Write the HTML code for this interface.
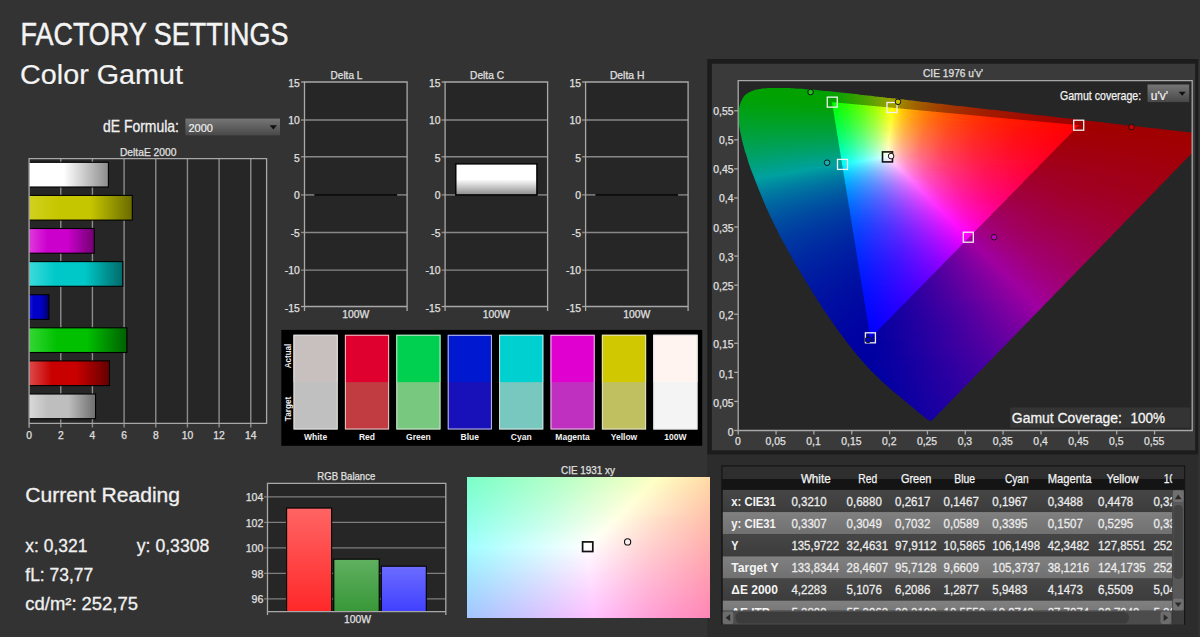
<!DOCTYPE html>
<html><head><meta charset="utf-8"><title>Factory Settings - Color Gamut</title>
<style>
html,body{margin:0;padding:0;background:#333333}
body{width:1200px;height:637px;position:relative;overflow:hidden;font-family:'Liberation Sans',sans-serif}
svg{position:absolute;left:0;top:0;font-family:'Liberation Sans',sans-serif}
#g i{position:absolute;display:block}
</style></head><body>
<svg width="1200" height="637" viewBox="0 0 1200 637">
<defs><linearGradient id="dd" x1="0" y1="0" x2="0" y2="1"><stop offset="0" stop-color="#767676"/><stop offset="1" stop-color="#484848"/></linearGradient><clipPath id="bclip"><rect x="29.1" y="158.6" width="300" height="300"/></clipPath><linearGradient id="bw"><stop offset="0" stop-color="#ffffff"/><stop offset="0.4" stop-color="#ffffff"/><stop offset="0.45" stop-color="#ffffff"/><stop offset="1" stop-color="#8c8c8c"/></linearGradient><linearGradient id="by"><stop offset="0" stop-color="#d2d220"/><stop offset="0.3" stop-color="#c6c600"/><stop offset="0.6" stop-color="#c6c600"/><stop offset="1" stop-color="#6a6a00"/></linearGradient><linearGradient id="bm"><stop offset="0" stop-color="#e040e0"/><stop offset="0.3" stop-color="#cc00cc"/><stop offset="0.6" stop-color="#cc00cc"/><stop offset="1" stop-color="#700070"/></linearGradient><linearGradient id="bc"><stop offset="0" stop-color="#40dcdc"/><stop offset="0.3" stop-color="#00c8c8"/><stop offset="0.6" stop-color="#00c8c8"/><stop offset="1" stop-color="#006a6a"/></linearGradient><linearGradient id="bb"><stop offset="0" stop-color="#2828e0"/><stop offset="0.3" stop-color="#0000c8"/><stop offset="0.6" stop-color="#0000c8"/><stop offset="1" stop-color="#000064"/></linearGradient><linearGradient id="bg"><stop offset="0" stop-color="#38d838"/><stop offset="0.3" stop-color="#00c000"/><stop offset="0.6" stop-color="#00c000"/><stop offset="1" stop-color="#006000"/></linearGradient><linearGradient id="br"><stop offset="0" stop-color="#e05050"/><stop offset="0.3" stop-color="#c80000"/><stop offset="0.6" stop-color="#c80000"/><stop offset="1" stop-color="#640000"/></linearGradient><linearGradient id="bs"><stop offset="0" stop-color="#dcdcdc"/><stop offset="0.3" stop-color="#bebebe"/><stop offset="0.6" stop-color="#bebebe"/><stop offset="1" stop-color="#6e6e6e"/></linearGradient><linearGradient id="dc" x1="0" y1="0" x2="0" y2="1"><stop offset="0" stop-color="#fff"/><stop offset="0.5" stop-color="#fff"/><stop offset="1" stop-color="#8c8c8c"/></linearGradient><linearGradient id="rbr" x1="0" y1="0" x2="0" y2="1"><stop offset="0" stop-color="#ff6464"/><stop offset="1" stop-color="#ff2828"/></linearGradient><linearGradient id="rbg" x1="0" y1="0" x2="0" y2="1"><stop offset="0" stop-color="#60b060"/><stop offset="1" stop-color="#389838"/></linearGradient><linearGradient id="rbb" x1="0" y1="0" x2="0" y2="1"><stop offset="0" stop-color="#6c6cff"/><stop offset="1" stop-color="#4040ff"/></linearGradient><linearGradient id="rd" x1="0" y1="0" x2="0" y2="1"><stop offset="0" stop-color="#464646"/><stop offset="1" stop-color="#3c3c3c"/></linearGradient><linearGradient id="rl" x1="0" y1="0" x2="0" y2="1"><stop offset="0" stop-color="#808080"/><stop offset="1" stop-color="#707070"/></linearGradient><clipPath id="tc"><rect x="722.5" y="466" width="449.8" height="144.8"/></clipPath></defs>
<text x="20.5" y="44.6" font-size="31" fill="#f4f4f4" stroke="#f4f4f4" stroke-width="0.5" textLength="268" lengthAdjust="spacingAndGlyphs">FACTORY SETTINGS</text>
<text x="20" y="84.2" font-size="27" fill="#f4f4f4" stroke="#f4f4f4" stroke-width="0.2" textLength="163" lengthAdjust="spacingAndGlyphs">Color Gamut</text>
<text x="103" y="132.4" font-size="15.7" fill="#f0f0f0" stroke="#f0f0f0" stroke-width="0.3" textLength="76" lengthAdjust="spacingAndGlyphs">dE Formula:</text>
<rect x="185.4" y="118.6" width="94.6" height="16.8" fill="url(#dd)"/>
<text x="188.5" y="132.2" font-size="11.5" fill="#f0f0f0" stroke="#f0f0f0" stroke-width="0.2" textLength="24.5" lengthAdjust="spacingAndGlyphs">2000</text>
<path d="M269.6 125.2h7.4l-3.7 4.2z" fill="#111"/>
<text x="148.2" y="155.6" font-size="10.1" fill="#e0e0e0" stroke="#e0e0e0" stroke-width="0.25" text-anchor="middle" textLength="56.5" lengthAdjust="spacingAndGlyphs">DeltaE 2000</text>
<rect x="29.1" y="158.6" width="237.5" height="264.8" fill="#262626"/>
<line x1="60.77" y1="158.6" x2="60.77" y2="427.4" stroke="#8c8c8c" stroke-width="1.4"/>
<line x1="92.43" y1="158.6" x2="92.43" y2="427.4" stroke="#8c8c8c" stroke-width="1.4"/>
<line x1="124.1" y1="158.6" x2="124.1" y2="427.4" stroke="#8c8c8c" stroke-width="1.4"/>
<line x1="155.77" y1="158.6" x2="155.77" y2="427.4" stroke="#8c8c8c" stroke-width="1.4"/>
<line x1="187.43" y1="158.6" x2="187.43" y2="427.4" stroke="#8c8c8c" stroke-width="1.4"/>
<line x1="219.1" y1="158.6" x2="219.1" y2="427.4" stroke="#8c8c8c" stroke-width="1.4"/>
<line x1="250.77" y1="158.6" x2="250.77" y2="427.4" stroke="#8c8c8c" stroke-width="1.4"/>
<text x="29.1" y="439.3" font-size="10.3" fill="#e0e0e0" stroke="#e0e0e0" stroke-width="0.25" text-anchor="middle">0</text>
<text x="60.77" y="439.3" font-size="10.3" fill="#e0e0e0" stroke="#e0e0e0" stroke-width="0.25" text-anchor="middle">2</text>
<text x="92.43" y="439.3" font-size="10.3" fill="#e0e0e0" stroke="#e0e0e0" stroke-width="0.25" text-anchor="middle">4</text>
<text x="124.1" y="439.3" font-size="10.3" fill="#e0e0e0" stroke="#e0e0e0" stroke-width="0.25" text-anchor="middle">6</text>
<text x="155.77" y="439.3" font-size="10.3" fill="#e0e0e0" stroke="#e0e0e0" stroke-width="0.25" text-anchor="middle">8</text>
<text x="187.43" y="439.3" font-size="10.3" fill="#e0e0e0" stroke="#e0e0e0" stroke-width="0.25" text-anchor="middle">10</text>
<text x="219.1" y="439.3" font-size="10.3" fill="#e0e0e0" stroke="#e0e0e0" stroke-width="0.25" text-anchor="middle">12</text>
<text x="250.77" y="439.3" font-size="10.3" fill="#e0e0e0" stroke="#e0e0e0" stroke-width="0.25" text-anchor="middle">14</text>
<rect x="27.1" y="162.3" width="81.3" height="24.7" fill="url(#bw)" stroke="#000" stroke-width="1.1" clip-path="url(#bclip)"/>
<rect x="27.1" y="195.4" width="105.22" height="24.7" fill="url(#by)" stroke="#000" stroke-width="1.1" clip-path="url(#bclip)"/>
<rect x="27.1" y="228.5" width="67.17" height="24.7" fill="url(#bm)" stroke="#000" stroke-width="1.1" clip-path="url(#bclip)"/>
<rect x="27.1" y="261.6" width="95.68" height="24.7" fill="url(#bc)" stroke="#000" stroke-width="1.1" clip-path="url(#bclip)"/>
<rect x="27.1" y="294.7" width="21.89" height="24.7" fill="url(#bb)" stroke="#000" stroke-width="1.1" clip-path="url(#bclip)"/>
<rect x="27.1" y="327.8" width="99.8" height="24.7" fill="url(#bg)" stroke="#000" stroke-width="1.1" clip-path="url(#bclip)"/>
<rect x="27.1" y="360.9" width="82.37" height="24.7" fill="url(#br)" stroke="#000" stroke-width="1.1" clip-path="url(#bclip)"/>
<rect x="27.1" y="394" width="68.45" height="24.7" fill="url(#bs)" stroke="#000" stroke-width="1.1" clip-path="url(#bclip)"/>
<path d="M29.1 427.8V158.6H266.6V423.4H29.1" fill="none" stroke="#a8a8a8" stroke-width="1.3"/>
<text x="330.6" y="78.7" font-size="10.3" fill="#e0e0e0" stroke="#e0e0e0" stroke-width="0.25" textLength="31.7" lengthAdjust="spacingAndGlyphs">Delta L</text>
<rect x="304.5" y="82" width="102.6" height="224.5" fill="#262626"/>
<line x1="301" y1="82" x2="304.5" y2="82" stroke="#a8a8a8" stroke-width="1.3"/>
<text x="299.9" y="86.5" font-size="10.4" fill="#e0e0e0" stroke="#e0e0e0" stroke-width="0.25" text-anchor="end">15</text>
<line x1="301" y1="120" x2="407.1" y2="120" stroke="#888888" stroke-width="1.4"/>
<text x="299.9" y="124.07" font-size="10.4" fill="#e0e0e0" stroke="#e0e0e0" stroke-width="0.25" text-anchor="end">10</text>
<line x1="301" y1="156.7" x2="407.1" y2="156.7" stroke="#888888" stroke-width="1.4"/>
<text x="299.9" y="161.64" font-size="10.4" fill="#e0e0e0" stroke="#e0e0e0" stroke-width="0.25" text-anchor="end">5</text>
<line x1="301" y1="194.9" x2="314.5" y2="194.9" stroke="#888888" stroke-width="1.4"/>
<line x1="397.1" y1="194.9" x2="407.1" y2="194.9" stroke="#888888" stroke-width="1.4"/>
<text x="299.9" y="199.21" font-size="10.4" fill="#e0e0e0" stroke="#e0e0e0" stroke-width="0.25" text-anchor="end">0</text>
<line x1="301" y1="232.5" x2="407.1" y2="232.5" stroke="#888888" stroke-width="1.4"/>
<text x="299.9" y="236.78" font-size="10.4" fill="#e0e0e0" stroke="#e0e0e0" stroke-width="0.25" text-anchor="end">-5</text>
<line x1="301" y1="270.1" x2="407.1" y2="270.1" stroke="#888888" stroke-width="1.4"/>
<text x="299.9" y="274.35" font-size="10.4" fill="#e0e0e0" stroke="#e0e0e0" stroke-width="0.25" text-anchor="end">-10</text>
<line x1="301" y1="306.5" x2="304.5" y2="306.5" stroke="#a8a8a8" stroke-width="1.3"/>
<text x="299.9" y="311.92" font-size="10.4" fill="#e0e0e0" stroke="#e0e0e0" stroke-width="0.25" text-anchor="end">-15</text>
<line x1="314.5" y1="194.9" x2="397.1" y2="194.9" stroke="#0c0c0c" stroke-width="1.6"/>
<path d="M304.5 311.1V82H407.1V311.1M304.5 306.5H407.1" fill="none" stroke="#a8a8a8" stroke-width="1.3"/>
<text x="355.8" y="317.9" font-size="10.1" fill="#e0e0e0" stroke="#e0e0e0" stroke-width="0.25" text-anchor="middle" textLength="27" lengthAdjust="spacingAndGlyphs">100W</text>
<text x="470.1" y="78.7" font-size="10.3" fill="#e0e0e0" stroke="#e0e0e0" stroke-width="0.25" textLength="33.9" lengthAdjust="spacingAndGlyphs">Delta C</text>
<rect x="445.1" y="82" width="102.5" height="224.5" fill="#262626"/>
<line x1="441.6" y1="82" x2="445.1" y2="82" stroke="#a8a8a8" stroke-width="1.3"/>
<text x="440.5" y="86.5" font-size="10.4" fill="#e0e0e0" stroke="#e0e0e0" stroke-width="0.25" text-anchor="end">15</text>
<line x1="441.6" y1="120" x2="547.6" y2="120" stroke="#888888" stroke-width="1.4"/>
<text x="440.5" y="124.07" font-size="10.4" fill="#e0e0e0" stroke="#e0e0e0" stroke-width="0.25" text-anchor="end">10</text>
<line x1="441.6" y1="156.7" x2="547.6" y2="156.7" stroke="#888888" stroke-width="1.4"/>
<text x="440.5" y="161.64" font-size="10.4" fill="#e0e0e0" stroke="#e0e0e0" stroke-width="0.25" text-anchor="end">5</text>
<line x1="441.6" y1="194.9" x2="455.1" y2="194.9" stroke="#888888" stroke-width="1.4"/>
<line x1="537.6" y1="194.9" x2="547.6" y2="194.9" stroke="#888888" stroke-width="1.4"/>
<text x="440.5" y="199.21" font-size="10.4" fill="#e0e0e0" stroke="#e0e0e0" stroke-width="0.25" text-anchor="end">0</text>
<line x1="441.6" y1="232.5" x2="547.6" y2="232.5" stroke="#888888" stroke-width="1.4"/>
<text x="440.5" y="236.78" font-size="10.4" fill="#e0e0e0" stroke="#e0e0e0" stroke-width="0.25" text-anchor="end">-5</text>
<line x1="441.6" y1="270.1" x2="547.6" y2="270.1" stroke="#888888" stroke-width="1.4"/>
<text x="440.5" y="274.35" font-size="10.4" fill="#e0e0e0" stroke="#e0e0e0" stroke-width="0.25" text-anchor="end">-10</text>
<line x1="441.6" y1="306.5" x2="445.1" y2="306.5" stroke="#a8a8a8" stroke-width="1.3"/>
<text x="440.5" y="311.92" font-size="10.4" fill="#e0e0e0" stroke="#e0e0e0" stroke-width="0.25" text-anchor="end">-15</text>
<rect x="455.8" y="163.9" width="81.1" height="31" fill="url(#dc)" stroke="#000" stroke-width="1.4"/>
<path d="M445.1 311.1V82H547.6V311.1M445.1 306.5H547.6" fill="none" stroke="#a8a8a8" stroke-width="1.3"/>
<text x="496.35" y="317.9" font-size="10.1" fill="#e0e0e0" stroke="#e0e0e0" stroke-width="0.25" text-anchor="middle" textLength="27" lengthAdjust="spacingAndGlyphs">100W</text>
<text x="609.9" y="78.7" font-size="10.3" fill="#e0e0e0" stroke="#e0e0e0" stroke-width="0.25" textLength="34.5" lengthAdjust="spacingAndGlyphs">Delta H</text>
<rect x="585.6" y="82" width="102.5" height="224.5" fill="#262626"/>
<line x1="582.1" y1="82" x2="585.6" y2="82" stroke="#a8a8a8" stroke-width="1.3"/>
<text x="581" y="86.5" font-size="10.4" fill="#e0e0e0" stroke="#e0e0e0" stroke-width="0.25" text-anchor="end">15</text>
<line x1="582.1" y1="120" x2="688.1" y2="120" stroke="#888888" stroke-width="1.4"/>
<text x="581" y="124.07" font-size="10.4" fill="#e0e0e0" stroke="#e0e0e0" stroke-width="0.25" text-anchor="end">10</text>
<line x1="582.1" y1="156.7" x2="688.1" y2="156.7" stroke="#888888" stroke-width="1.4"/>
<text x="581" y="161.64" font-size="10.4" fill="#e0e0e0" stroke="#e0e0e0" stroke-width="0.25" text-anchor="end">5</text>
<line x1="582.1" y1="194.9" x2="595.6" y2="194.9" stroke="#888888" stroke-width="1.4"/>
<line x1="678.1" y1="194.9" x2="688.1" y2="194.9" stroke="#888888" stroke-width="1.4"/>
<text x="581" y="199.21" font-size="10.4" fill="#e0e0e0" stroke="#e0e0e0" stroke-width="0.25" text-anchor="end">0</text>
<line x1="582.1" y1="232.5" x2="688.1" y2="232.5" stroke="#888888" stroke-width="1.4"/>
<text x="581" y="236.78" font-size="10.4" fill="#e0e0e0" stroke="#e0e0e0" stroke-width="0.25" text-anchor="end">-5</text>
<line x1="582.1" y1="270.1" x2="688.1" y2="270.1" stroke="#888888" stroke-width="1.4"/>
<text x="581" y="274.35" font-size="10.4" fill="#e0e0e0" stroke="#e0e0e0" stroke-width="0.25" text-anchor="end">-10</text>
<line x1="582.1" y1="306.5" x2="585.6" y2="306.5" stroke="#a8a8a8" stroke-width="1.3"/>
<text x="581" y="311.92" font-size="10.4" fill="#e0e0e0" stroke="#e0e0e0" stroke-width="0.25" text-anchor="end">-15</text>
<line x1="595.6" y1="194.9" x2="678.1" y2="194.9" stroke="#0c0c0c" stroke-width="1.6"/>
<path d="M585.6 311.1V82H688.1V311.1M585.6 306.5H688.1" fill="none" stroke="#a8a8a8" stroke-width="1.3"/>
<text x="636.85" y="317.9" font-size="10.1" fill="#e0e0e0" stroke="#e0e0e0" stroke-width="0.25" text-anchor="middle" textLength="27" lengthAdjust="spacingAndGlyphs">100W</text>
<rect x="281.3" y="329.9" width="420.9" height="115.9" fill="#000"/>
<rect x="293.5" y="334.8" width="44.2" height="94.7" fill="#c0c0c0"/>
<rect x="293.5" y="334.8" width="44.2" height="47.3" fill="#c8c0be"/>
<rect x="294" y="335.3" width="43.2" height="93.7" fill="none" stroke="#e6e6e6" stroke-width="1" stroke-opacity=".85"/>
<text x="315.6" y="440" font-size="8.5" fill="#f2f2f2" text-anchor="middle" font-weight="bold">White</text>
<rect x="344.9" y="334.8" width="44.2" height="94.7" fill="#c03c40"/>
<rect x="344.9" y="334.8" width="44.2" height="47.3" fill="#e00030"/>
<rect x="345.4" y="335.3" width="43.2" height="93.7" fill="none" stroke="#e6e6e6" stroke-width="1" stroke-opacity=".85"/>
<text x="367" y="440" font-size="8.5" fill="#f2f2f2" text-anchor="middle" font-weight="bold">Red</text>
<rect x="396.3" y="334.8" width="44.2" height="94.7" fill="#78c880"/>
<rect x="396.3" y="334.8" width="44.2" height="47.3" fill="#00d050"/>
<rect x="396.8" y="335.3" width="43.2" height="93.7" fill="none" stroke="#e6e6e6" stroke-width="1" stroke-opacity=".85"/>
<text x="418.4" y="440" font-size="8.5" fill="#f2f2f2" text-anchor="middle" font-weight="bold">Green</text>
<rect x="447.7" y="334.8" width="44.2" height="94.7" fill="#1810b8"/>
<rect x="447.7" y="334.8" width="44.2" height="47.3" fill="#0018d0"/>
<rect x="448.2" y="335.3" width="43.2" height="93.7" fill="none" stroke="#e6e6e6" stroke-width="1" stroke-opacity=".85"/>
<text x="469.8" y="440" font-size="8.5" fill="#f2f2f2" text-anchor="middle" font-weight="bold">Blue</text>
<rect x="499.1" y="334.8" width="44.2" height="94.7" fill="#78c8c0"/>
<rect x="499.1" y="334.8" width="44.2" height="47.3" fill="#00d0d0"/>
<rect x="499.6" y="335.3" width="43.2" height="93.7" fill="none" stroke="#e6e6e6" stroke-width="1" stroke-opacity=".85"/>
<text x="521.2" y="440" font-size="8.5" fill="#f2f2f2" text-anchor="middle" font-weight="bold">Cyan</text>
<rect x="550.5" y="334.8" width="44.2" height="94.7" fill="#c030c0"/>
<rect x="550.5" y="334.8" width="44.2" height="47.3" fill="#e000d0"/>
<rect x="551" y="335.3" width="43.2" height="93.7" fill="none" stroke="#e6e6e6" stroke-width="1" stroke-opacity=".85"/>
<text x="572.6" y="440" font-size="8.5" fill="#f2f2f2" text-anchor="middle" font-weight="bold">Magenta</text>
<rect x="601.9" y="334.8" width="44.2" height="94.7" fill="#c0c060"/>
<rect x="601.9" y="334.8" width="44.2" height="47.3" fill="#d0c800"/>
<rect x="602.4" y="335.3" width="43.2" height="93.7" fill="none" stroke="#e6e6e6" stroke-width="1" stroke-opacity=".85"/>
<text x="624" y="440" font-size="8.5" fill="#f2f2f2" text-anchor="middle" font-weight="bold">Yellow</text>
<rect x="653.3" y="334.8" width="44.2" height="94.7" fill="#f4f4f4"/>
<rect x="653.3" y="334.8" width="44.2" height="47.3" fill="#fff4f0"/>
<rect x="653.8" y="335.3" width="43.2" height="93.7" fill="none" stroke="#e6e6e6" stroke-width="1" stroke-opacity=".85"/>
<text x="675.4" y="440" font-size="8.5" fill="#f2f2f2" text-anchor="middle" font-weight="bold">100W</text>
<text x="0" y="0" font-size="8.8" fill="#f2f2f2" font-weight="bold" textLength="24.5" lengthAdjust="spacingAndGlyphs" transform="translate(290.9 368.2) rotate(-90)">Actual</text>
<text x="0" y="0" font-size="8.8" fill="#f2f2f2" font-weight="bold" textLength="24.5" lengthAdjust="spacingAndGlyphs" transform="translate(290.9 421.2) rotate(-90)">Target</text>
<text x="25.3" y="501.7" font-size="19.7" fill="#f0f0f0" stroke="#f0f0f0" stroke-width="0.3" textLength="154.8" lengthAdjust="spacingAndGlyphs">Current Reading</text>
<text x="25.3" y="551.6" font-size="17.6" fill="#f0f0f0" stroke="#f0f0f0" stroke-width="0.3" textLength="62.1" lengthAdjust="spacingAndGlyphs">x: 0,321</text>
<text x="136.8" y="551.6" font-size="17.6" fill="#f0f0f0" stroke="#f0f0f0" stroke-width="0.3" textLength="72.5" lengthAdjust="spacingAndGlyphs">y: 0,3308</text>
<text x="25.3" y="581.1" font-size="17.6" fill="#f0f0f0" stroke="#f0f0f0" stroke-width="0.3" textLength="67.8" lengthAdjust="spacingAndGlyphs">fL: 73,77</text>
<text x="25.3" y="610.2" font-size="17.6" fill="#f0f0f0" stroke="#f0f0f0" stroke-width="0.3" textLength="112.7" lengthAdjust="spacingAndGlyphs">cd/m²: 252,75</text>
<text x="346.3" y="479.6" font-size="10.1" fill="#e0e0e0" stroke="#e0e0e0" stroke-width="0.25" text-anchor="middle" textLength="58" lengthAdjust="spacingAndGlyphs">RGB Balance</text>
<rect x="267.5" y="483.4" width="178.3" height="128.2" fill="#262626"/>
<line x1="264" y1="598.85" x2="445.8" y2="598.85" stroke="#7e7e7e" stroke-width="1.3"/>
<text x="263.4" y="603.15" font-size="10.6" fill="#e0e0e0" stroke="#e0e0e0" stroke-width="0.25" text-anchor="end">96</text>
<line x1="264" y1="573.35" x2="445.8" y2="573.35" stroke="#7e7e7e" stroke-width="1.3"/>
<text x="263.4" y="577.65" font-size="10.6" fill="#e0e0e0" stroke="#e0e0e0" stroke-width="0.25" text-anchor="end">98</text>
<line x1="264" y1="547.85" x2="445.8" y2="547.85" stroke="#7e7e7e" stroke-width="1.3"/>
<text x="263.4" y="552.15" font-size="10.6" fill="#e0e0e0" stroke="#e0e0e0" stroke-width="0.25" text-anchor="end">100</text>
<line x1="264" y1="522.35" x2="445.8" y2="522.35" stroke="#7e7e7e" stroke-width="1.3"/>
<text x="263.4" y="526.65" font-size="10.6" fill="#e0e0e0" stroke="#e0e0e0" stroke-width="0.25" text-anchor="end">102</text>
<line x1="264" y1="496.85" x2="445.8" y2="496.85" stroke="#7e7e7e" stroke-width="1.3"/>
<text x="263.4" y="501.15" font-size="10.6" fill="#e0e0e0" stroke="#e0e0e0" stroke-width="0.25" text-anchor="end">104</text>
<rect x="286.6" y="508.06" width="45" height="103.54" fill="url(#rbr)" stroke="#000" stroke-width="1.1"/>
<rect x="333.8" y="559.19" width="45.4" height="52.41" fill="url(#rbg)" stroke="#000" stroke-width="1.1"/>
<rect x="381.3" y="566.2" width="45" height="45.4" fill="url(#rbb)" stroke="#000" stroke-width="1.1"/>
<path d="M267.5 615.1V483.4H445.8V615.1M267.5 611.6H445.8" fill="none" stroke="#a8a8a8" stroke-width="1.3"/>
<text x="357.6" y="623.2" font-size="10.1" fill="#e0e0e0" stroke="#e0e0e0" stroke-width="0.25" text-anchor="middle" textLength="27" lengthAdjust="spacingAndGlyphs">100W</text>
<text x="588" y="473.6" font-size="10.1" fill="#e0e0e0" stroke="#e0e0e0" stroke-width="0.25" text-anchor="middle" textLength="54" lengthAdjust="spacingAndGlyphs">CIE 1931 xy</text>
<rect x="707.2" y="454.4" width="491.1" height="190" fill="#2c2c2c"/>
<rect x="707.2" y="59" width="491.1" height="395.5" fill="#1c1c1c"/>
<rect x="711.9" y="63.7" width="483.3" height="386.6" fill="#3a3a3a"/>
<rect x="738.2" y="80.6" width="454" height="349.9" fill="#262626"/>
<text x="923" y="77.2" font-size="10.1" fill="#e0e0e0" stroke="#e0e0e0" stroke-width="0.25" textLength="60" lengthAdjust="spacingAndGlyphs">CIE 1976 u'v'</text>
<rect x="721.3" y="465.3" width="463.9" height="159.4" fill="#151515"/>
<rect x="722.5" y="466.5" width="461.5" height="12.5" fill="#2e2e2e"/>
<rect x="722.5" y="479" width="461.5" height="10.9" fill="#141414"/>
<g clip-path="url(#tc)">
<rect x="722.5" y="489.9" width="449.8" height="22.35" fill="url(#rd)"/>
<text x="731.3" y="505.8" font-size="12.7" fill="#f4f4f4" font-weight="bold" textLength="44.6" lengthAdjust="spacingAndGlyphs">x: CIE31</text>
<text x="791.4" y="505.8" font-size="12.7" fill="#ececec" stroke="#ececec" stroke-width="0.3" textLength="35.2" lengthAdjust="spacingAndGlyphs">0,3210</text>
<text x="846.6" y="505.8" font-size="12.7" fill="#ececec" stroke="#ececec" stroke-width="0.3" textLength="35.2" lengthAdjust="spacingAndGlyphs">0,6880</text>
<text x="895.1" y="505.8" font-size="12.7" fill="#ececec" stroke="#ececec" stroke-width="0.3" textLength="35.2" lengthAdjust="spacingAndGlyphs">0,2617</text>
<text x="943.6" y="505.8" font-size="12.7" fill="#ececec" stroke="#ececec" stroke-width="0.3" textLength="35.2" lengthAdjust="spacingAndGlyphs">0,1467</text>
<text x="992.3" y="505.8" font-size="12.7" fill="#ececec" stroke="#ececec" stroke-width="0.3" textLength="35.2" lengthAdjust="spacingAndGlyphs">0,1967</text>
<text x="1047.7" y="505.8" font-size="12.7" fill="#ececec" stroke="#ececec" stroke-width="0.3" textLength="35.2" lengthAdjust="spacingAndGlyphs">0,3488</text>
<text x="1098" y="505.8" font-size="12.7" fill="#ececec" stroke="#ececec" stroke-width="0.3" textLength="35.2" lengthAdjust="spacingAndGlyphs">0,4478</text>
<text x="1153.4" y="505.8" font-size="12.7" fill="#ececec" stroke="#ececec" stroke-width="0.3" textLength="35.2" lengthAdjust="spacingAndGlyphs">0,3210</text>
<rect x="722.5" y="512.05" width="449.8" height="22.35" fill="url(#rl)"/>
<text x="731.3" y="527.95" font-size="12.7" fill="#f4f4f4" font-weight="bold" textLength="44.6" lengthAdjust="spacingAndGlyphs">y: CIE31</text>
<text x="791.4" y="527.95" font-size="12.7" fill="#ececec" stroke="#ececec" stroke-width="0.3" textLength="35.2" lengthAdjust="spacingAndGlyphs">0,3307</text>
<text x="846.6" y="527.95" font-size="12.7" fill="#ececec" stroke="#ececec" stroke-width="0.3" textLength="35.2" lengthAdjust="spacingAndGlyphs">0,3049</text>
<text x="895.1" y="527.95" font-size="12.7" fill="#ececec" stroke="#ececec" stroke-width="0.3" textLength="35.2" lengthAdjust="spacingAndGlyphs">0,7032</text>
<text x="943.6" y="527.95" font-size="12.7" fill="#ececec" stroke="#ececec" stroke-width="0.3" textLength="35.2" lengthAdjust="spacingAndGlyphs">0,0589</text>
<text x="992.3" y="527.95" font-size="12.7" fill="#ececec" stroke="#ececec" stroke-width="0.3" textLength="35.2" lengthAdjust="spacingAndGlyphs">0,3395</text>
<text x="1047.7" y="527.95" font-size="12.7" fill="#ececec" stroke="#ececec" stroke-width="0.3" textLength="35.2" lengthAdjust="spacingAndGlyphs">0,1507</text>
<text x="1098" y="527.95" font-size="12.7" fill="#ececec" stroke="#ececec" stroke-width="0.3" textLength="35.2" lengthAdjust="spacingAndGlyphs">0,5295</text>
<text x="1153.4" y="527.95" font-size="12.7" fill="#ececec" stroke="#ececec" stroke-width="0.3" textLength="35.2" lengthAdjust="spacingAndGlyphs">0,3308</text>
<rect x="722.5" y="534.2" width="449.8" height="22.35" fill="url(#rd)"/>
<text x="731.3" y="550.1" font-size="12.7" fill="#f4f4f4" font-weight="bold" textLength="7.2" lengthAdjust="spacingAndGlyphs">Y</text>
<text x="791.4" y="550.1" font-size="12.7" fill="#ececec" stroke="#ececec" stroke-width="0.3" textLength="47.7" lengthAdjust="spacingAndGlyphs">135,9722</text>
<text x="846.6" y="550.1" font-size="12.7" fill="#ececec" stroke="#ececec" stroke-width="0.3" textLength="41.45" lengthAdjust="spacingAndGlyphs">32,4631</text>
<text x="895.1" y="550.1" font-size="12.7" fill="#ececec" stroke="#ececec" stroke-width="0.3" textLength="41.45" lengthAdjust="spacingAndGlyphs">97,9112</text>
<text x="943.6" y="550.1" font-size="12.7" fill="#ececec" stroke="#ececec" stroke-width="0.3" textLength="41.45" lengthAdjust="spacingAndGlyphs">10,5865</text>
<text x="992.3" y="550.1" font-size="12.7" fill="#ececec" stroke="#ececec" stroke-width="0.3" textLength="47.7" lengthAdjust="spacingAndGlyphs">106,1498</text>
<text x="1047.7" y="550.1" font-size="12.7" fill="#ececec" stroke="#ececec" stroke-width="0.3" textLength="41.45" lengthAdjust="spacingAndGlyphs">42,3482</text>
<text x="1098" y="550.1" font-size="12.7" fill="#ececec" stroke="#ececec" stroke-width="0.3" textLength="47.7" lengthAdjust="spacingAndGlyphs">127,8551</text>
<text x="1153.4" y="550.1" font-size="12.7" fill="#ececec" stroke="#ececec" stroke-width="0.3" textLength="47.7" lengthAdjust="spacingAndGlyphs">252,7500</text>
<rect x="722.5" y="556.35" width="449.8" height="22.35" fill="url(#rl)"/>
<text x="731.3" y="572.25" font-size="12.7" fill="#f4f4f4" font-weight="bold" textLength="47.2" lengthAdjust="spacingAndGlyphs">Target Y</text>
<text x="791.4" y="572.25" font-size="12.7" fill="#ececec" stroke="#ececec" stroke-width="0.3" textLength="47.7" lengthAdjust="spacingAndGlyphs">133,8344</text>
<text x="846.6" y="572.25" font-size="12.7" fill="#ececec" stroke="#ececec" stroke-width="0.3" textLength="41.45" lengthAdjust="spacingAndGlyphs">28,4607</text>
<text x="895.1" y="572.25" font-size="12.7" fill="#ececec" stroke="#ececec" stroke-width="0.3" textLength="41.45" lengthAdjust="spacingAndGlyphs">95,7128</text>
<text x="943.6" y="572.25" font-size="12.7" fill="#ececec" stroke="#ececec" stroke-width="0.3" textLength="35.2" lengthAdjust="spacingAndGlyphs">9,6609</text>
<text x="992.3" y="572.25" font-size="12.7" fill="#ececec" stroke="#ececec" stroke-width="0.3" textLength="47.7" lengthAdjust="spacingAndGlyphs">105,3737</text>
<text x="1047.7" y="572.25" font-size="12.7" fill="#ececec" stroke="#ececec" stroke-width="0.3" textLength="41.45" lengthAdjust="spacingAndGlyphs">38,1216</text>
<text x="1098" y="572.25" font-size="12.7" fill="#ececec" stroke="#ececec" stroke-width="0.3" textLength="47.7" lengthAdjust="spacingAndGlyphs">124,1735</text>
<text x="1153.4" y="572.25" font-size="12.7" fill="#ececec" stroke="#ececec" stroke-width="0.3" textLength="47.7" lengthAdjust="spacingAndGlyphs">252,7500</text>
<rect x="722.5" y="578.5" width="449.8" height="22.35" fill="url(#rd)"/>
<text x="731.3" y="594.4" font-size="12.7" fill="#f4f4f4" font-weight="bold" textLength="46.6" lengthAdjust="spacingAndGlyphs">ΔE 2000</text>
<text x="791.4" y="594.4" font-size="12.7" fill="#ececec" stroke="#ececec" stroke-width="0.3" textLength="35.2" lengthAdjust="spacingAndGlyphs">4,2283</text>
<text x="846.6" y="594.4" font-size="12.7" fill="#ececec" stroke="#ececec" stroke-width="0.3" textLength="35.2" lengthAdjust="spacingAndGlyphs">5,1076</text>
<text x="895.1" y="594.4" font-size="12.7" fill="#ececec" stroke="#ececec" stroke-width="0.3" textLength="35.2" lengthAdjust="spacingAndGlyphs">6,2086</text>
<text x="943.6" y="594.4" font-size="12.7" fill="#ececec" stroke="#ececec" stroke-width="0.3" textLength="35.2" lengthAdjust="spacingAndGlyphs">1,2877</text>
<text x="992.3" y="594.4" font-size="12.7" fill="#ececec" stroke="#ececec" stroke-width="0.3" textLength="35.2" lengthAdjust="spacingAndGlyphs">5,9483</text>
<text x="1047.7" y="594.4" font-size="12.7" fill="#ececec" stroke="#ececec" stroke-width="0.3" textLength="35.2" lengthAdjust="spacingAndGlyphs">4,1473</text>
<text x="1098" y="594.4" font-size="12.7" fill="#ececec" stroke="#ececec" stroke-width="0.3" textLength="35.2" lengthAdjust="spacingAndGlyphs">6,5509</text>
<text x="1153.4" y="594.4" font-size="12.7" fill="#ececec" stroke="#ececec" stroke-width="0.3" textLength="35.2" lengthAdjust="spacingAndGlyphs">5,0400</text>
<rect x="722.5" y="600.65" width="449.8" height="22.35" fill="url(#rl)"/>
<text x="731.3" y="616.55" font-size="12.7" fill="#f4f4f4" font-weight="bold" textLength="38.5" lengthAdjust="spacingAndGlyphs">ΔE ITP</text>
<text x="791.4" y="616.55" font-size="12.7" fill="#ececec" stroke="#ececec" stroke-width="0.3" textLength="35.2" lengthAdjust="spacingAndGlyphs">5,2899</text>
<text x="846.6" y="616.55" font-size="12.7" fill="#ececec" stroke="#ececec" stroke-width="0.3" textLength="41.45" lengthAdjust="spacingAndGlyphs">55,3962</text>
<text x="895.1" y="616.55" font-size="12.7" fill="#ececec" stroke="#ececec" stroke-width="0.3" textLength="41.45" lengthAdjust="spacingAndGlyphs">20,2199</text>
<text x="943.6" y="616.55" font-size="12.7" fill="#ececec" stroke="#ececec" stroke-width="0.3" textLength="41.45" lengthAdjust="spacingAndGlyphs">10,5550</text>
<text x="992.3" y="616.55" font-size="12.7" fill="#ececec" stroke="#ececec" stroke-width="0.3" textLength="41.45" lengthAdjust="spacingAndGlyphs">19,9742</text>
<text x="1047.7" y="616.55" font-size="12.7" fill="#ececec" stroke="#ececec" stroke-width="0.3" textLength="41.45" lengthAdjust="spacingAndGlyphs">27,7074</text>
<text x="1098" y="616.55" font-size="12.7" fill="#ececec" stroke="#ececec" stroke-width="0.3" textLength="41.45" lengthAdjust="spacingAndGlyphs">20,7049</text>
<text x="1153.4" y="616.55" font-size="12.7" fill="#ececec" stroke="#ececec" stroke-width="0.3" textLength="35.2" lengthAdjust="spacingAndGlyphs">5,2600</text>
<text x="800.9" y="483" font-size="12.2" fill="#f4f4f4" stroke="#f4f4f4" stroke-width="0.25" textLength="29.7" lengthAdjust="spacingAndGlyphs">White</text>
<text x="858.3" y="483" font-size="12.2" fill="#f4f4f4" stroke="#f4f4f4" stroke-width="0.25" textLength="18.8" lengthAdjust="spacingAndGlyphs">Red</text>
<text x="900.9" y="483" font-size="12.2" fill="#f4f4f4" stroke="#f4f4f4" stroke-width="0.25" textLength="30.5" lengthAdjust="spacingAndGlyphs">Green</text>
<text x="954.3" y="483" font-size="12.2" fill="#f4f4f4" stroke="#f4f4f4" stroke-width="0.25" textLength="20.8" lengthAdjust="spacingAndGlyphs">Blue</text>
<text x="1004.9" y="483" font-size="12.2" fill="#f4f4f4" stroke="#f4f4f4" stroke-width="0.25" textLength="23.7" lengthAdjust="spacingAndGlyphs">Cyan</text>
<text x="1047.7" y="483" font-size="12.2" fill="#f4f4f4" stroke="#f4f4f4" stroke-width="0.25" textLength="43.7" lengthAdjust="spacingAndGlyphs">Magenta</text>
<text x="1106.6" y="483" font-size="12.2" fill="#f4f4f4" stroke="#f4f4f4" stroke-width="0.25" textLength="32" lengthAdjust="spacingAndGlyphs">Yellow</text>
<text x="1163.7" y="483" font-size="12.2" fill="#f4f4f4" stroke="#f4f4f4" stroke-width="0.25" textLength="26.8" lengthAdjust="spacingAndGlyphs">100W</text>
</g>
<rect x="1172.3" y="489.9" width="11.7" height="121" fill="#585858"/>
<rect x="1172.3" y="610.8" width="11.7" height="13.9" fill="#3c3c3c"/>
<rect x="1173.4" y="505" width="9.5" height="74" fill="#444" rx="4.5"/>
<rect x="1172.8" y="490.4" width="10.7" height="11.5" fill="#707070" rx="2"/>
<rect x="1172.8" y="598.7" width="10.7" height="11.5" fill="#707070" rx="2"/>
<path d="M1174.8 499.2h6.8l-3.4-4.6z" fill="#2a2a2a"/><path d="M1174.8 602.4h6.8l-3.4 4.6z" fill="#2a2a2a"/>
<rect x="722.5" y="610.8" width="449.8" height="13.9" fill="#4c4c4c"/>
<rect x="735.5" y="612" width="393.5" height="11.5" fill="#3c3c3c" rx="5.5"/>
<rect x="722.8" y="611.6" width="10.5" height="12.3" fill="#6c6c6c" rx="2"/>
<rect x="1160.5" y="611.6" width="10.5" height="12.3" fill="#6c6c6c" rx="2"/>
<path d="M730.2 614.2v7l-4.6-3.5z" fill="#2a2a2a"/><path d="M1163.6 614.2v7l4.6-3.5z" fill="#2a2a2a"/>
</svg>
<div id="g">
<i style="left:760px;top:88px;width:43px;height:1px;background:linear-gradient(90deg,#223422 0.5px,#194f19 1.5px,#155d15 2.5px,#0d780d 3.5px,#0d780d 6.5px,#00a100 7.5px,#00a100 30.5px,#0d780d 31.5px,#0d780d 34.5px,#155d15 35.5px,#194f19 36.5px,#194f19 41.5px,#1e411e 42.5px)"></i>
<i style="left:755px;top:89px;width:60px;height:1px;background:linear-gradient(90deg,#194f19 0.5px,#194f19 1.5px,#0d780d 2.5px,#088508 3.5px,#00a100 4.5px,#00a100 7.5px,#00a100 49.5px,#0d780d 50.5px,#0d780d 54.5px,#194f19 55.5px,#194f19 59.5px)"></i>
<i style="left:752px;top:90px;width:71px;height:1px;background:linear-gradient(90deg,#223422 0.5px,#116a11 1.5px,#049304 2.5px,#00a100 3.5px,#00a100 64.5px,#049304 65.5px,#0d780d 66.5px,#0d780d 67.5px,#155d15 68.5px,#194f19 69.5px,#194f19 70.5px)"></i>
<i style="left:750px;top:91px;width:85px;height:1px;background:linear-gradient(90deg,#194f19 0.5px,#088508 1.5px,#00a100 2.5px,#00a100 77.5px,#049304 78.5px,#0d780d 79.5px,#0d780d 80.5px,#116a11 81.5px,#1a4f19 82.5px,#1b4f19 83.5px,#1f411e 84.5px)"></i>
<i style="left:748px;top:92px;width:96px;height:1px;background:linear-gradient(90deg,#1e411e 0.5px,#049304 1.5px,#00a100 2.5px,#00a100 82.5px,#09a100 88.5px,#0e9304 89.5px,#15780d 90.5px,#16780d 91.5px,#1a6a11 92.5px,#1f4f19 93.5px,#214f19 95.5px)"></i>
<i style="left:746px;top:93px;width:108px;height:1px;background:linear-gradient(90deg,#223422 0.5px,#0d780d 1.5px,#00a100 2.5px,#00a100 84.5px,#1ca100 100.5px,#21780d 101.5px,#24780d 103.5px,#255d15 104.5px,#264f19 105.5px,#274f19 106.5px,#27411e 107.5px)"></i>
<i style="left:745px;top:94px;width:116px;height:1px;background:linear-gradient(90deg,#194f1a 0.5px,#049305 1.5px,#00a100 2.5px,#00a100 85.5px,#33a100 111.5px,#30780d 112.5px,#306a11 113.5px,#2d4f19 114.5px,#2b411e 115.5px)"></i>
<i style="left:744px;top:95px;width:128px;height:1px;background:linear-gradient(90deg,#194f1a 0.5px,#00a101 1.5px,#00a100 87.5px,#1ca100 102.5px,#44a100 119.5px,#3c780d 120.5px,#3f780d 122.5px,#3d6a11 123.5px,#354f19 124.5px,#364f19 126.5px,#2c3422 127.5px)"></i>
<i style="left:743px;top:96px;width:136px;height:1px;background:linear-gradient(90deg,#1e411e 0.5px,#00a103 1.5px,#00a100 88.5px,#27a100 108.5px,#5da100 129.5px,#538508 130.5px,#4f780d 131.5px,#425d15 132.5px,#3c4f19 133.5px,#3e4f19 135.5px)"></i>
<i style="left:743px;top:97px;width:144px;height:1px;background:linear-gradient(90deg,#08850b 0.5px,#00a104 1.5px,#00a100 88.5px,#32a100 113.5px,#7ca100 139.5px,#62780d 140.5px,#64780d 141.5px,#464f19 142.5px,#474f19 143.5px)"></i>
<i style="left:742px;top:98px;width:156px;height:1px;background:linear-gradient(90deg,#155d17 0.5px,#00a105 1.5px,#00a100 89.5px,#3ca100 118.5px,#98a100 148.5px,#74780d 149.5px,#78740d 152.5px,#5d5815 153.5px,#4f4b19 154.5px,#343222 155.5px)"></i>
<i style="left:742px;top:99px;width:164px;height:1px;background:linear-gradient(90deg,#04930a 0.5px,#00a106 1.5px,#01a100 90.5px,#41a100 120.5px,#6ca100 135.5px,#a0a100 150.5px,#a18d00 156.5px,#937f04 157.5px,#78670d 158.5px,#78610d 161.5px,#4f4319 162.5px,#4f4219 163.5px)"></i>
<i style="left:741px;top:100px;width:174px;height:1px;background:linear-gradient(90deg,#155d18 0.5px,#00a107 1.5px,#01a100 91.5px,#41a100 121.5px,#6ca100 136.5px,#a0a000 151.5px,#a17500 166.5px,#856108 167.5px,#78570d 168.5px,#78540d 170.5px,#6a4c11 171.5px,#4f3c19 172.5px,#4f3b19 173.5px)"></i>
<i style="left:741px;top:101px;width:181px;height:1px;background:linear-gradient(90deg,#04930c 0.5px,#00a109 1.5px,#00a100 91.5px,#3ea100 120.5px,#a19d00 152.5px,#a17c00 163.5px,#a16100 175.5px,#855308 176.5px,#6a4411 178.5px,#4f3719 179.5px,#4f3719 180.5px)"></i>
<i style="left:740px;top:102px;width:192px;height:1px;background:linear-gradient(90deg,#194f1d 0.5px,#00a10a 1.5px,#00a101 91.5px,#00ea01 92.5px,#02e000 93.5px,#07e000 95.5px,#08c000 96.5px,#0cc000 98.5px,#0dab00 99.5px,#0ea100 100.5px,#4fa100 127.5px,#a0a000 152.5px,#a17400 167.5px,#a15200 185.5px,#934c04 186.5px,#78410d 187.5px,#78410d 188.5px,#4f3319 189.5px,#4f3219 190.5px,#342a22 191.5px)"></i>
<i style="left:740px;top:103px;width:202px;height:1px;background:linear-gradient(90deg,#0d7814 0.5px,#00a10b 1.5px,#00a102 91.5px,#00ea02 92.5px,#02ff03 93.5px,#1cff01 102.5px,#1be001 103.5px,#21e000 105.5px,#23d500 106.5px,#22c000 107.5px,#27c000 109.5px,#25ab00 110.5px,#25a100 111.5px,#57a100 130.5px,#a19d00 153.5px,#a16d00 170.5px,#a14800 192.5px,#934304 193.5px,#783b0d 194.5px,#783a0d 195.5px,#5d3315 196.5px,#4f2f19 197.5px,#4f2e19 200.5px,#342922 201.5px)"></i>
<i style="left:740px;top:104px;width:209px;height:1px;background:linear-gradient(90deg,#00a10d 0.5px,#00a103 91.5px,#00e004 92.5px,#02ff05 93.5px,#3fff01 112.5px,#40f501 113.5px,#3ee001 114.5px,#44e000 116.5px,#41cb00 117.5px,#41c000 118.5px,#47c000 120.5px,#3ea100 121.5px,#6aa100 136.5px,#9ea100 151.5px,#a19c00 153.5px,#a17d00 163.5px,#a16400 174.5px,#a13c00 202.5px,#933904 203.5px,#78340d 204.5px,#78330d 205.5px,#5d2e15 206.5px,#412a1e 208.5px)"></i>
<i style="left:739px;top:105px;width:218px;height:1px;background:linear-gradient(90deg,#194f1e 0.5px,#00a10e 1.5px,#00a105 92.5px,#00cb06 93.5px,#01ff07 94.5px,#2cff04 108.5px,#6bff01 124.5px,#6bf501 125.5px,#65e001 126.5px,#6de000 128.5px,#61c000 129.5px,#68c000 131.5px,#66b600 132.5px,#5da100 133.5px,#a1a000 153.5px,#a17d00 164.5px,#a16000 177.5px,#a13500 211.5px,#853108 212.5px,#782e0d 213.5px,#782e0d 214.5px,#4f2a19 215.5px,#4f2919 216.5px,#41281e 217.5px)"></i>
<i style="left:739px;top:106px;width:228px;height:1px;background:linear-gradient(90deg,#116a19 0.5px,#00a10f 1.5px,#00a106 92.5px,#00c008 93.5px,#01ff0a 94.5px,#42ff06 114.5px,#9eff01 135.5px,#95ea01 136.5px,#93e001 137.5px,#98e000 138.5px,#95d500 139.5px,#8ac000 140.5px,#92c000 142.5px,#86ab00 143.5px,#81a100 144.5px,#a19f00 153.5px,#a17a00 165.5px,#a15a00 180.5px,#a14100 198.5px,#a12c00 221.5px,#932b04 222.5px,#78290d 223.5px,#78290d 224.5px,#5d2715 225.5px,#4f2719 226.5px,#4f2719 227.5px)"></i>
<i style="left:739px;top:107px;width:236px;height:1px;background:linear-gradient(90deg,#088515 0.5px,#00a111 1.5px,#00a108 92.5px,#00ab08 93.5px,#01ff0c 94.5px,#25ff0a 106.5px,#5aff07 120.5px,#94ff04 133.5px,#d8ff01 146.5px,#c3e001 147.5px,#cde000 149.5px,#c8d500 150.5px,#b9c000 151.5px,#c0be00 153.5px,#a19b00 154.5px,#a17400 167.5px,#a14700 193.5px,#a12600 229.5px,#932604 230.5px,#78250d 231.5px,#78250d 232.5px,#5d2515 233.5px,#4f2519 234.5px,#4f2519 235.5px)"></i>
<i style="left:739px;top:108px;width:245px;height:1px;background:linear-gradient(90deg,#00a112 0.5px,#00a10a 93.5px,#00ff0f 94.5px,#28ff0d 107.5px,#66ff09 123.5px,#a8ff06 137.5px,#fffc02 153.5px,#ffea01 156.5px,#f5dc01 157.5px,#e0c401 158.5px,#e0bc00 160.5px,#cba600 161.5px,#c09a00 162.5px,#c09700 163.5px,#b68c00 164.5px,#a17900 165.5px,#a17200 168.5px,#a15800 181.5px,#a14200 197.5px,#a12100 237.5px,#932104 238.5px,#78220d 239.5px,#78220d 240.5px,#5d2315 241.5px,#4f2319 242.5px,#4f2319 243.5px,#342522 244.5px)"></i>
<i style="left:739px;top:109px;width:256px;height:1px;background:linear-gradient(90deg,#00a113 0.5px,#00a10b 93.5px,#00ea10 94.5px,#02ff12 95.5px,#2bff0f 108.5px,#62ff0c 122.5px,#a3ff09 136.5px,#fffb05 153.5px,#ffb701 167.5px,#eaa501 168.5px,#e09a00 169.5px,#e09400 171.5px,#c07d00 172.5px,#c07800 174.5px,#b66f00 175.5px,#a16000 176.5px,#a13900 205.5px,#a11c00 246.5px,#781f0d 247.5px,#781f0d 248.5px,#6a2011 249.5px,#4f2219 250.5px,#4f2219 254.5px,#342422 255.5px)"></i>
<i style="left:739px;top:110px;width:264px;height:1px;background:linear-gradient(90deg,#00a115 0.5px,#00a10d 93.5px,#00e012 94.5px,#02ff15 95.5px,#2aff12 108.5px,#66ff0f 123.5px,#a3ff0c 136.5px,#fdff08 152.5px,#fffa08 153.5px,#ffc304 164.5px,#ff9301 178.5px,#e07e00 179.5px,#e07900 181.5px,#d57100 182.5px,#c06400 183.5px,#c06100 185.5px,#ab5500 186.5px,#a14e00 187.5px,#a12e00 217.5px,#a11700 257.5px,#781c0d 258.5px,#781b0d 259.5px,#6a1d11 260.5px,#4f2019 261.5px,#4f2019 262.5px,#342422 263.5px)"></i>
<i style="left:739px;top:111px;width:272px;height:1px;background:linear-gradient(90deg,#00a116 0.5px,#00a10f 93.5px,#00cb13 94.5px,#02ff18 95.5px,#2aff15 108.5px,#66ff12 123.5px,#a9ff0f 137.5px,#f8ff0c 151.5px,#fffa0b 153.5px,#ffcf08 161.5px,#ffaf05 169.5px,#ff7701 189.5px,#e06600 190.5px,#e06200 192.5px,#cb5800 193.5px,#c05200 194.5px,#c04f00 196.5px,#a14100 197.5px,#a12700 227.5px,#a11400 265.5px,#851708 266.5px,#78190d 267.5px,#78190d 268.5px,#4f1f19 269.5px,#4f1f19 271.5px)"></i>
<i style="left:739px;top:112px;width:280px;height:1px;background:linear-gradient(90deg,#00a118 0.5px,#00a111 93.5px,#00c014 94.5px,#01ff1a 95.5px,#2aff18 108.5px,#65ff16 123.5px,#a9ff13 137.5px,#f8ff10 151.5px,#fff90f 153.5px,#ffca0a 162.5px,#ffa106 173.5px,#ff7f03 185.5px,#ff6301 199.5px,#f55d00 200.5px,#e05300 201.5px,#e05100 203.5px,#c04400 204.5px,#c04200 206.5px,#b63d00 207.5px,#a13500 208.5px,#a12000 237.5px,#a11100 273.5px,#931304 274.5px,#78170d 275.5px,#78170d 276.5px,#5d1c15 277.5px,#4f1e19 278.5px,#4f1e19 279.5px)"></i>
<i style="left:739px;top:113px;width:289px;height:1px;background:linear-gradient(90deg,#00a119 0.5px,#00a113 93.5px,#00ab14 94.5px,#01ff1d 95.5px,#29ff1b 108.5px,#61ff19 122.5px,#a9ff16 137.5px,#f9ff13 151.5px,#fff912 153.5px,#ffc10c 164.5px,#ff9407 177.5px,#ff6f03 192.5px,#ff5100 210.5px,#ea4900 211.5px,#e04400 212.5px,#e04200 214.5px,#c03800 215.5px,#c03600 217.5px,#ab2f00 218.5px,#a12c00 219.5px,#a10e00 281.5px,#931004 282.5px,#78160d 283.5px,#78150d 284.5px,#5d1b15 285.5px,#4f1d19 286.5px,#4f1d19 287.5px,#342322 288.5px)"></i>
<i style="left:739px;top:114px;width:297px;height:1px;background:linear-gradient(90deg,#00a11a 0.5px,#00a115 94.5px,#01ff21 95.5px,#29ff1f 108.5px,#61ff1c 122.5px,#a9ff1a 137.5px,#faff17 151.5px,#fff816 153.5px,#ffbc0f 165.5px,#ff8b09 180.5px,#ff6304 198.5px,#ff4200 221.5px,#e03900 222.5px,#e03700 224.5px,#d53400 225.5px,#c02e00 226.5px,#c02c00 228.5px,#ab2700 229.5px,#a12400 230.5px,#a10b00 290.5px,#78140d 291.5px,#78140d 292.5px,#6a1711 293.5px,#4f1d19 294.5px,#4f1d19 295.5px,#342322 296.5px)"></i>
<i style="left:739px;top:115px;width:307px;height:1px;background:linear-gradient(90deg,#00a11c 0.5px,#00a117 94.5px,#00ea21 95.5px,#02ff23 96.5px,#29ff22 108.5px,#61ff20 122.5px,#a9ff1d 137.5px,#faff1b 151.5px,#fff71a 153.5px,#ffb410 167.5px,#ff800a 184.5px,#ff5704 205.5px,#ff3700 231.5px,#f53400 232.5px,#e02f00 233.5px,#e02d00 235.5px,#cb2800 236.5px,#c02600 237.5px,#c02400 239.5px,#a11e00 240.5px,#a10900 298.5px,#78120d 299.5px,#78120d 303.5px,#4f1c19 304.5px,#4f1c19 305.5px,#411f1e 306.5px)"></i>
<i style="left:739px;top:116px;width:315px;height:1px;background:linear-gradient(90deg,#00a11d 0.5px,#00a118 94.5px,#00e022 95.5px,#02ff27 96.5px,#2cff25 109.5px,#69ff23 124.5px,#a9ff21 137.5px,#fffd1e 152.5px,#ffd618 159.5px,#ffb313 167.5px,#ff7b0b 186.5px,#ff4e05 211.5px,#ff2d00 242.5px,#ea2900 243.5px,#e02600 244.5px,#e02500 246.5px,#c01f00 247.5px,#c01e00 249.5px,#b61c00 250.5px,#a11800 251.5px,#a10600 308.5px,#850d08 309.5px,#78110d 310.5px,#78110d 311.5px,#4f1b19 312.5px,#4f1b19 313.5px,#411f1e 314.5px)"></i>
<i style="left:739px;top:117px;width:323px;height:1px;background:linear-gradient(90deg,#00a11f 0.5px,#00a11b 94.5px,#00d523 95.5px,#02ff2a 96.5px,#2bff28 109.5px,#69ff27 124.5px,#a9ff25 137.5px,#fffc22 152.5px,#ffd51c 159.5px,#ffaf16 168.5px,#ff8e10 178.5px,#ff730c 189.5px,#ff4605 217.5px,#ff2500 253.5px,#ea2100 254.5px,#e01f00 255.5px,#e01e00 256.5px,#d51c00 257.5px,#c01900 258.5px,#c01800 260.5px,#ab1500 261.5px,#a11300 262.5px,#a10500 316.5px,#850c08 317.5px,#78100d 318.5px,#780f0d 319.5px,#4f1b19 320.5px,#4f1b19 321.5px,#411e1e 322.5px)"></i>
<i style="left:739px;top:118px;width:333px;height:1px;background:linear-gradient(90deg,#00a120 0.5px,#00a11d 94.5px,#00c022 95.5px,#01ff2d 96.5px,#2bff2c 109.5px,#65ff2a 123.5px,#a4ff29 136.5px,#fffc26 152.5px,#ffd01e 160.5px,#ffa717 170.5px,#ff8612 181.5px,#ff6a0d 193.5px,#ff3d05 224.5px,#ff1d00 264.5px,#e01900 265.5px,#e01800 267.5px,#d51700 268.5px,#c01400 269.5px,#c01300 271.5px,#a11000 272.5px,#a10300 324.5px,#850b08 325.5px,#780e0d 326.5px,#780e0d 329.5px,#5d1615 330.5px,#411e1e 332.5px)"></i>
<i style="left:739px;top:119px;width:340px;height:1px;background:linear-gradient(90deg,#00a122 0.5px,#00a11f 94.5px,#00b623 95.5px,#01ff30 96.5px,#2bff2f 109.5px,#64ff2e 123.5px,#a4ff2d 136.5px,#fffb2a 152.5px,#ffcf22 160.5px,#ffa61a 170.5px,#ff8214 182.5px,#ff660e 195.5px,#ff3806 229.5px,#ff1800 274.5px,#f51600 275.5px,#e01400 276.5px,#e01300 278.5px,#cb1100 279.5px,#c00f00 280.5px,#c00f00 281.5px,#b60e00 282.5px,#a10c00 283.5px,#a10100 334.5px,#850908 335.5px,#6a1111 337.5px,#4f1a19 338.5px,#4f1a19 339.5px)"></i>
<i style="left:739px;top:120px;width:350px;height:1px;background:linear-gradient(90deg,#00a124 0.5px,#00a121 95.5px,#01ff34 96.5px,#2aff33 109.5px,#64ff32 123.5px,#a4ff31 136.5px,#fdff2f 151.5px,#fffb2e 152.5px,#ffca24 161.5px,#ffa21c 171.5px,#ff7f16 183.5px,#ff600f 198.5px,#ff3206 235.5px,#ff1200 285.5px,#ea1000 286.5px,#e00f00 287.5px,#e00e00 289.5px,#c00c00 290.5px,#c00b00 292.5px,#b60a00 293.5px,#a10900 294.5px,#a10000 343.5px,#930404 344.5px,#780d0d 345.5px,#780d0d 346.5px,#4f1919 347.5px,#4f1919 348.5px,#342222 349.5px)"></i>
<i style="left:739px;top:121px;width:359px;height:1px;background:linear-gradient(90deg,#00a125 0.5px,#00a123 95.5px,#00f535 96.5px,#03ff37 97.5px,#2aff36 109.5px,#64ff36 123.5px,#9fff35 135.5px,#fdff33 151.5px,#fffa32 152.5px,#ffc527 162.5px,#ff9b1e 173.5px,#ff7816 186.5px,#ff5a10 201.5px,#ff410b 219.5px,#ff2c06 241.5px,#ff0d00 296.5px,#e00b00 297.5px,#e00b00 299.5px,#d50a00 300.5px,#c00900 301.5px,#c00800 303.5px,#ab0700 304.5px,#a10600 305.5px,#a10000 352.5px,#930404 353.5px,#780d0d 354.5px,#780d0d 355.5px,#4f1919 356.5px,#4f1919 357.5px,#342222 358.5px)"></i>
<i style="left:739px;top:122px;width:367px;height:1px;background:linear-gradient(90deg,#00a127 0.5px,#00a125 95.5px,#00e033 96.5px,#02ff3b 97.5px,#2aff3a 109.5px,#64ff39 123.5px,#aaff39 137.5px,#f8ff38 150.5px,#fff937 152.5px,#ffc42a 162.5px,#ff9720 174.5px,#ff7318 188.5px,#f51 204.5px,#ff3c0c 223.5px,#ff2807 246.5px,#ff0900 306.5px,#f50900 307.5px,#e00800 308.5px,#e00700 310.5px,#cb0600 311.5px,#c00600 312.5px,#c00500 314.5px,#a10400 315.5px,#a10000 361.5px,#930404 362.5px,#780d0d 363.5px,#6a1111 364.5px,#4f1919 365.5px,#411e1e 366.5px)"></i>
<i style="left:739px;top:123px;width:375px;height:1px;background:linear-gradient(90deg,#00a128 0.5px,#00a127 95.5px,#00d534 96.5px,#02ff3e 97.5px,#29ff3e 109.5px,#64ff3d 123.5px,#aaff3d 137.5px,#f8ff3c 150.5px,#fff93b 152.5px,#ffc32e 162.5px,#ff9723 174.5px,#ff701a 189.5px,#ff5212 206.5px,#ff380c 227.5px,#ff2307 252.5px,#ff0600 317.5px,#f50500 318.5px,#e00400 319.5px,#e00400 321.5px,#c00300 322.5px,#c00300 324.5px,#b60200 325.5px,#a10200 326.5px,#a10000 369.5px,#930404 370.5px,#780d0d 371.5px,#6a1111 372.5px,#4f1919 373.5px,#411e1e 374.5px)"></i>
<i style="left:739px;top:124px;width:384px;height:1px;background:linear-gradient(90deg,#00a12a 0.5px,#00a129 95.5px,#00c031 96.5px,#01ff42 97.5px,#29ff42 109.5px,#63ff41 123.5px,#aaff41 137.5px,#f9ff41 150.5px,#fff83f 152.5px,#ffc331 162.5px,#ff9325 175.5px,#ff6d1b 190.5px,#ff4d13 209.5px,#ff340d 231.5px,#ff1f07 258.5px,#ff0300 328.5px,#ea0200 329.5px,#e00200 330.5px,#e00100 332.5px,#c00100 333.5px,#c00100 335.5px,#ab0000 336.5px,#a10000 337.5px,#a10000 377.5px,#850808 378.5px,#780d0d 379.5px,#780d0d 381.5px,#4f1919 382.5px,#411e1e 383.5px)"></i>
<i style="left:739px;top:125px;width:393px;height:1px;background:linear-gradient(90deg,#0d782a 0.5px,#00a12b 1.5px,#00a12c 95.5px,#00b631 96.5px,#01ff45 97.5px,#28ff45 109.5px,#63ff45 123.5px,#abff45 137.5px,#f9ff46 150.5px,#fff744 152.5px,#ffbe34 163.5px,#ff8f27 176.5px,#ff681d 192.5px,#ff4914 211.5px,#ff300d 234.5px,#ff1b08 263.5px,#f00 338.5px,#e00000 339.5px,#a10000 340.5px,#a10000 384.5px,#930404 385.5px,#780d0d 386.5px,#780d0d 388.5px,#4f1919 389.5px,#4f1919 391.5px,#342222 392.5px)"></i>
<i style="left:739px;top:126px;width:402px;height:1px;background:linear-gradient(90deg,#0d782b 0.5px,#00a12d 1.5px,#00a12e 96.5px,#01ff49 97.5px,#28ff49 109.5px,#5fff49 122.5px,#a5ff4a 136.5px,#faff4a 150.5px,#fff748 152.5px,#ffbd37 163.5px,#ff8f2a 176.5px,#ff681f 192.5px,#ff4916 211.5px,#ff300f 234.5px,#ff1b09 263.5px,#ff0001 337.5px,#e00001 338.5px,#a10000 339.5px,#a10000 394.5px,#930404 395.5px,#780d0d 396.5px,#780d0d 397.5px,#6a1111 398.5px,#4f1919 399.5px,#4f1919 400.5px,#411e1e 401.5px)"></i>
<i style="left:739px;top:127px;width:410px;height:1px;background:linear-gradient(90deg,#116a2b 0.5px,#00a12f 1.5px,#00a130 96.5px,#00f549 97.5px,#03ff4d 98.5px,#2bff4d 110.5px,#68ff4e 124.5px,#abff4e 137.5px,#fffd4e 151.5px,#ffd442 158.5px,#ffb438 165.5px,#ff7b27 183.5px,#ff511b 205.5px,#ff2f10 234.5px,#ff1207 279.5px,#ff0002 336.5px,#e00001 337.5px,#a10001 338.5px,#a10000 403.5px,#930404 404.5px,#780d0d 405.5px,#780d0d 406.5px,#5d1515 407.5px,#4f1919 408.5px,#4f1919 409.5px)"></i>
<i style="left:739px;top:128px;width:420px;height:1px;background:linear-gradient(90deg,#194f29 0.5px,#00a130 1.5px,#00a133 96.5px,#00e046 97.5px,#02ff50 98.5px,#2bff51 110.5px,#68ff52 124.5px,#a5ff53 136.5px,#fffc53 151.5px,#ffd346 158.5px,#ffb33c 165.5px,#ff7829 184.5px,#ff4d1c 207.5px,#ff2c11 237.5px,#ff1208 280.5px,#ff0002 335.5px,#e00002 336.5px,#a10001 337.5px,#a10000 411.5px,#930404 412.5px,#780d0d 413.5px,#780d0d 416.5px,#6a1111 417.5px,#4f1919 418.5px,#4f1919 419.5px)"></i>
<i style="left:739px;top:129px;width:429px;height:1px;background:linear-gradient(90deg,#1e4129 0.5px,#00a132 1.5px,#00a135 96.5px,#00d546 97.5px,#02ff54 98.5px,#2bff55 110.5px,#67ff56 124.5px,#a6ff57 136.5px,#fffb58 151.5px,#ffd34a 158.5px,#ffb340 165.5px,#ff782c 184.5px,#ff4c1d 208.5px,#ff2a12 240.5px,#ff1009 282.5px,#ff0003 334.5px,#e00003 335.5px,#a10002 336.5px,#a10000 421.5px,#850808 422.5px,#780d0d 423.5px,#5d1515 424.5px,#4f1919 425.5px,#4f1919 427.5px,#411e1e 428.5px)"></i>
<i style="left:740px;top:130px;width:436px;height:1px;background:linear-gradient(90deg,#00a134 0.5px,#00a137 95.5px,#00c042 96.5px,#01ff58 97.5px,#2aff59 109.5px,#67ff5b 123.5px,#a6ff5c 135.5px,#fffb5c 150.5px,#ffd24e 157.5px,#ffae42 165.5px,#ff752e 184.5px,#ff481e 209.5px,#ff2813 241.5px,#ff100a 282.5px,#ff0004 332.5px,#e00003 333.5px,#a10002 334.5px,#a10000 428.5px,#930404 429.5px,#780d0d 430.5px,#780d0d 432.5px,#6a1111 433.5px,#4f1919 434.5px,#411e1e 435.5px)"></i>
<i style="left:740px;top:131px;width:445px;height:1px;background:linear-gradient(90deg,#049334 0.5px,#00a136 1.5px,#00a13a 95.5px,#00c045 96.5px,#01ff5c 97.5px,#2aff5d 109.5px,#62ff5f 122.5px,#a0ff61 134.5px,#fdff63 149.5px,#fffa61 150.5px,#ffd152 157.5px,#ffad45 165.5px,#ff7430 184.5px,#ff4820 209.5px,#ff2714 241.5px,#ff100b 281.5px,#ff0005 331.5px,#e00004 332.5px,#a10003 333.5px,#a10000 438.5px,#780d0d 439.5px,#780d0d 441.5px,#5d1515 442.5px,#4f1919 443.5px,#4f1919 444.5px)"></i>
<i style="left:740px;top:132px;width:452px;height:1px;background:linear-gradient(90deg,#0d7832 0.5px,#00a137 1.5px,#00a13c 96.5px,#01ff60 97.5px,#2aff61 109.5px,#62ff63 122.5px,#a6ff65 135.5px,#f7ff68 148.5px,#fff966 150.5px,#ffd156 157.5px,#ffad49 165.5px,#ff7333 184.5px,#ff4722 209.5px,#ff2615 242.5px,#ff0f0c 282.5px,#ff0006 330.5px,#e00005 331.5px,#a10004 332.5px,#a10000 446.5px,#930404 447.5px,#780d0d 448.5px,#780d0d 450.5px,#5d1515 451.5px)"></i>
<i style="left:740px;top:133px;width:452px;height:1px;background:linear-gradient(90deg,#194f2c 0.5px,#00a139 1.5px,#00a13f 96.5px,#00ff64 97.5px,#29ff66 109.5px,#67ff68 123.5px,#acff6a 136.5px,#f8ff6d 148.5px,#fff96b 150.5px,#ffd05b 157.5px,#ffb04e 164.5px,#ff7738 182.5px,#ff4c26 205.5px,#ff2b19 235.5px,#ff110e 277.5px,#ff0007 329.5px,#f50006 330.5px,#a10004 331.5px,#a10000 451.5px)"></i>
<i style="left:740px;top:134px;width:452px;height:1px;background:linear-gradient(90deg,#223428 0.5px,#00a13b 1.5px,#00a141 96.5px,#00e05b 97.5px,#02ff68 98.5px,#2dff6a 110.5px,#67ff6d 123.5px,#acff6f 136.5px,#f8ff72 148.5px,#fff870 150.5px,#ffcf5f 157.5px,#ffaf52 164.5px,#ff773a 182.5px,#ff4c28 205.5px,#ff2b1b 235.5px,#ff1110 276.5px,#ff0008 328.5px,#f50007 329.5px,#ab0005 330.5px,#a10005 331.5px,#a10000 451.5px)"></i>
<i style="left:741px;top:135px;width:451px;height:1px;background:linear-gradient(90deg,#00a13d 0.5px,#00a144 95.5px,#00e05f 96.5px,#02ff6c 97.5px,#28ff6e 108.5px,#62ff71 121.5px,#a6ff74 134.5px,#f9ff78 147.5px,#fff875 149.5px,#ffcf63 156.5px,#ffaf55 163.5px,#ff763d 181.5px,#ff4a2a 205.5px,#ff291c 235.5px,#ff1010 276.5px,#ff0009 326.5px,#f50008 327.5px,#ab0006 328.5px,#a10005 329.5px,#a10000 450.5px)"></i>
<i style="left:741px;top:136px;width:451px;height:1px;background:linear-gradient(90deg,#0d7836 0.5px,#00a13f 1.5px,#00a147 95.5px,#00c055 96.5px,#02ff70 97.5px,#28ff73 108.5px,#61ff76 121.5px,#a7ff79 134.5px,#f9ff7d 147.5px,#fff77a 149.5px,#ffce67 156.5px,#ffae59 163.5px,#ff7640 181.5px,#ff492c 205.5px,#ff291d 235.5px,#ff1012 275.5px,#ff000a 325.5px,#f50009 326.5px,#ab0006 327.5px,#a10006 328.5px,#a10000 450.5px)"></i>
<i style="left:741px;top:137px;width:451px;height:1px;background:linear-gradient(90deg,#116a35 0.5px,#00a140 1.5px,#00a149 95.5px,#00c058 96.5px,#01ff75 97.5px,#2cff77 109.5px,#66ff7b 122.5px,#a7ff7e 134.5px,#fffd82 148.5px,#ffd26e 155.5px,#ffb15f 162.5px,#f74 180.5px,#ff4c30 203.5px,#ff2a20 233.5px,#ff1113 273.5px,#ff000b 324.5px,#f5000a 325.5px,#ab0007 326.5px,#a10006 327.5px,#a10000 450.5px)"></i>
<i style="left:741px;top:138px;width:451px;height:1px;background:linear-gradient(90deg,#194f2f 0.5px,#00a142 1.5px,#00a14c 96.5px,#01ff79 97.5px,#2bff7c 109.5px,#66ff80 122.5px,#adff84 135.5px,#fbff88 147.5px,#fffc87 148.5px,#ffd273 155.5px,#ffb163 162.5px,#ff7747 180.5px,#ff4b32 203.5px,#ff2a21 233.5px,#ff1115 273.5px,#ff000c 323.5px,#f5000b 324.5px,#ab0008 325.5px,#a10007 326.5px,#a10001 450.5px)"></i>
<i style="left:741px;top:139px;width:451px;height:1px;background:linear-gradient(90deg,#223429 0.5px,#00a144 1.5px,#00a14f 96.5px,#01ff7d 97.5px,#2bff81 109.5px,#66ff85 122.5px,#adff89 135.5px,#fbff8e 147.5px,#ffb067 162.5px,#ff764a 180.5px,#ff4b34 203.5px,#ff2923 233.5px,#ff1016 273.5px,#ff000d 322.5px,#f5000c 323.5px,#ab0008 324.5px,#a10008 325.5px,#a10001 450.5px)"></i>
<i style="left:742px;top:140px;width:450px;height:1px;background:linear-gradient(90deg,#049342 0.5px,#00a146 1.5px,#00a151 95.5px,#00e072 96.5px,#03ff82 97.5px,#2aff85 108.5px,#66ff8a 121.5px,#a1ff8e 132.5px,#fffb92 147.5px,#ffd07c 154.5px,#ffaf6b 161.5px,#ff764d 179.5px,#ff4a36 202.5px,#ff2925 232.5px,#ff1017 271.5px,#ff000e 320.5px,#f5000d 321.5px,#ab0009 322.5px,#a10008 323.5px,#a10001 449.5px)"></i>
<i style="left:742px;top:141px;width:450px;height:1px;background:linear-gradient(90deg,#0d783d 0.5px,#00a148 1.5px,#00a154 95.5px,#00e076 96.5px,#02ff86 97.5px,#2aff8a 108.5px,#65ff8f 121.5px,#a1ff93 132.5px,#fdff9a 146.5px,#fffa97 147.5px,#ffd080 154.5px,#ffaf6f 161.5px,#ff7550 179.5px,#ff4938 202.5px,#ff2826 232.5px,#ff1019 271.5px,#ff000f 319.5px,#f5000e 320.5px,#ab000a 321.5px,#a10009 322.5px,#a10002 449.5px)"></i>
<i style="left:742px;top:142px;width:450px;height:1px;background:linear-gradient(90deg,#194f32 0.5px,#00a14a 1.5px,#00a157 95.5px,#00c068 96.5px,#02ff8b 97.5px,#29ff8f 108.5px,#65ff94 121.5px,#a8ff99 133.5px,#f6ff9f 145.5px,#fffa9d 147.5px,#ffcf85 154.5px,#ffaa71 162.5px,#ff7453 179.5px,#ff493b 202.5px,#ff2928 231.5px,#ff101a 270.5px,#ff0010 318.5px,#f5000f 319.5px,#ab000a 320.5px,#a1000a 321.5px,#a10002 449.5px)"></i>
<i style="left:742px;top:143px;width:450px;height:1px;background:linear-gradient(90deg,#22342a 0.5px,#00a14c 1.5px,#00a15a 95.5px,#00c06c 96.5px,#01ff8f 97.5px,#29ff93 108.5px,#65ff99 121.5px,#a8ff9e 133.5px,#f7ffa5 145.5px,#fff9a2 147.5px,#ffce8a 154.5px,#ffad77 161.5px,#ff7657 178.5px,#ff4a3e 201.5px,#ff282a 231.5px,#ff101c 269.5px,#f01 317.5px,#f50010 318.5px,#ab000b 319.5px,#a1000a 320.5px,#a10002 449.5px)"></i>
<i style="left:743px;top:144px;width:449px;height:1px;background:linear-gradient(90deg,#049349 0.5px,#00a14e 1.5px,#00a15d 94.5px,#00ab63 95.5px,#01ff94 96.5px,#29ff98 107.5px,#65ff9e 120.5px,#a8ffa4 132.5px,#f7ffab 144.5px,#fff8a8 146.5px,#ffcd8f 153.5px,#ffac7b 160.5px,#ff7359 178.5px,#ff483f 201.5px,#ff272b 231.5px,#ff101d 269.5px,#ff0012 315.5px,#f50011 316.5px,#ab000c 317.5px,#a1000b 318.5px,#a10003 448.5px)"></i>
<i style="left:743px;top:145px;width:449px;height:1px;background:linear-gradient(90deg,#116a3d 0.5px,#00a150 1.5px,#00a160 95.5px,#01ff99 96.5px,#28ff9d 107.5px,#60ffa3 119.5px,#a8ffaa 132.5px,#f8ffb1 144.5px,#fff8ad 146.5px,#ffcd93 153.5px,#ffac7f 160.5px,#ff725c 178.5px,#ff4741 201.5px,#ff272d 231.5px,#ff101e 268.5px,#ff0013 314.5px,#f50012 315.5px,#ab000d 316.5px,#a1000c 317.5px,#a10003 448.5px)"></i>
<i style="left:743px;top:146px;width:449px;height:1px;background:linear-gradient(90deg,#194f35 0.5px,#00a152 1.5px,#00a163 95.5px,#00ea90 96.5px,#03ff9e 97.5px,#2cffa3 108.5px,#64ffa9 120.5px,#a8ffb0 132.5px,#f9ffb7 144.5px,#fff7b3 146.5px,#ffcc98 153.5px,#ffab83 160.5px,#ff7461 177.5px,#ff4845 200.5px,#ff2830 229.5px,#ff1020 267.5px,#ff0014 313.5px,#f50013 314.5px,#ab000d 315.5px,#a1000c 316.5px,#a10003 448.5px)"></i>
<i style="left:744px;top:147px;width:448px;height:1px;background:linear-gradient(90deg,#00a154 0.5px,#00a166 94.5px,#00e08e 95.5px,#02ffa3 96.5px,#2cffa8 107.5px,#69ffaf 120.5px,#a8ffb5 131.5px,#fffdbd 144.5px,#ffd1a1 151.5px,#ffaf8a 158.5px,#ff7666 175.5px,#ff4948 198.5px,#ff2732 228.5px,#ff1021 265.5px,#ff0015 311.5px,#f50014 312.5px,#ab000e 313.5px,#a1000d 314.5px,#a10004 447.5px)"></i>
<i style="left:744px;top:148px;width:448px;height:1px;background:linear-gradient(90deg,#08854b 0.5px,#00a156 1.5px,#00a169 94.5px,#00cb85 95.5px,#02ffa7 96.5px,#2bffad 107.5px,#69ffb4 120.5px,#a8ffbb 131.5px,#fffdc3 144.5px,#ffd0a6 151.5px,#ffae8f 158.5px,#ff7569 175.5px,#ff484a 198.5px,#ff2733 228.5px,#ff1023 265.5px,#ff0017 310.5px,#f50016 311.5px,#ab000f 312.5px,#a1000e 313.5px,#a10004 447.5px)"></i>
<i style="left:744px;top:149px;width:448px;height:1px;background:linear-gradient(90deg,#116a42 0.5px,#00a158 1.5px,#00a16c 94.5px,#00c081 95.5px,#01ffac 96.5px,#2bffb2 107.5px,#69ffba 120.5px,#a9ffc1 131.5px,#fffcc9 144.5px,#ffcfab 151.5px,#ffad93 158.5px,#ff756c 175.5px,#ff484d 198.5px,#ff2735 228.5px,#ff0f24 265.5px,#ff0018 310.5px,#ab0010 311.5px,#a1000f 312.5px,#a10004 447.5px)"></i>
<i style="left:744px;top:150px;width:448px;height:1px;background:linear-gradient(90deg,#194f37 0.5px,#00a15a 1.5px,#00a16f 94.5px,#00ab77 95.5px,#01ffb1 96.5px,#2affb7 107.5px,#69ffc0 120.5px,#afffc8 132.5px,#fbffd1 143.5px,#ffcfb0 151.5px,#ffac97 158.5px,#ff746f 175.5px,#ff474f 198.5px,#ff2738 227.5px,#ff0f26 264.5px,#ff0019 309.5px,#c00013 310.5px,#a1000f 311.5px,#a10005 447.5px)"></i>
<i style="left:745px;top:151px;width:447px;height:1px;background:linear-gradient(90deg,#00a15c 0.5px,#00a173 94.5px,#01ffb6 95.5px,#2affbd 106.5px,#63ffc5 118.5px,#a3ffcd 129.5px,#fcffd8 142.5px,#fffbd5 143.5px,#ffceb5 150.5px,#ffac9c 157.5px,#ff7373 174.5px,#ff4752 197.5px,#ff2639 227.5px,#ff0f27 263.5px,#ff001a 307.5px,#c00013 308.5px,#a10010 309.5px,#a10005 446.5px)"></i>
<i style="left:745px;top:152px;width:447px;height:1px;background:linear-gradient(90deg,#0d784b 0.5px,#00a15e 1.5px,#00a176 94.5px,#00eaac 95.5px,#03ffbc 96.5px,#29ffc2 106.5px,#63ffcb 118.5px,#a3ffd3 129.5px,#fdffdf 142.5px,#fffadb 143.5px,#ffcdba 150.5px,#ffaba0 157.5px,#ff7376 174.5px,#ff4654 197.5px,#ff253a 227.5px,#ff0f28 263.5px,#ff001b 306.5px,#c00014 307.5px,#a10011 308.5px,#a10005 446.5px)"></i>
<i style="left:745px;top:153px;width:447px;height:1px;background:linear-gradient(90deg,#1e4133 0.5px,#00a160 1.5px,#00a179 94.5px,#00e0a9 95.5px,#03ffc1 96.5px,#2dffc8 107.5px,#68ffd1 119.5px,#a9ffda 130.5px,#f6ffe5 141.5px,#fff9e2 143.5px,#ffccbf 150.5px,#ffaaa5 157.5px,#ff8c8e 165.5px,#ff6f77 175.5px,#f45 198.5px,#ff233b 229.5px,#ff0e29 264.5px,#ff001d 305.5px,#c00015 306.5px,#a10012 307.5px,#a10006 445.5px,#780d10 446.5px)"></i>
<i style="left:746px;top:154px;width:445px;height:1px;background:linear-gradient(90deg,#04935c 0.5px,#00a163 1.5px,#00a17c 93.5px,#00cb9d 94.5px,#02ffc6 95.5px,#28ffcd 105.5px,#63ffd6 117.5px,#aaffe1 129.5px,#f6ffec 140.5px,#fff8e8 142.5px,#ffccc4 149.5px,#ffa9a9 156.5px,#ff8b92 164.5px,#ff6f7b 174.5px,#ff4257 198.5px,#ff223c 229.5px,#ff0e2b 263.5px,#ff001e 303.5px,#c00016 304.5px,#a10013 305.5px,#a10006 443.5px,#780d11 444.5px)"></i>
<i style="left:746px;top:155px;width:444px;height:1px;background:linear-gradient(90deg,#116a49 0.5px,#00a165 1.5px,#00a17f 93.5px,#00c099 94.5px,#02ffcc 95.5px,#28ffd3 105.5px,#63ffdc 117.5px,#aaffe7 129.5px,#f7fff3 140.5px,#fff8ee 142.5px,#ffcbca 149.5px,#ffa9ae 156.5px,#ff8b95 164.5px,#ff6e7e 174.5px,#ff435a 197.5px,#ff223f 228.5px,#ff0e2d 262.5px,#ff001f 302.5px,#c00017 303.5px,#a10013 304.5px,#a10006 442.5px,#780d11 443.5px)"></i>
<i style="left:746px;top:156px;width:443px;height:1px;background:linear-gradient(90deg,#1e4134 0.5px,#00a167 1.5px,#00a183 93.5px,#00ab8c 94.5px,#01ffd1 95.5px,#2cffd9 106.5px,#68ffe4 118.5px,#afe 129.5px,#fefefa 141.5px,#ffd0d4 148.5px,#ffacb6 155.5px,#ff8d9c 163.5px,#ff7084 173.5px,#ff445e 196.5px,#ff2341 227.5px,#ff0e2e 261.5px,#ff0021 301.5px,#c00018 302.5px,#a10014 303.5px,#a10007 441.5px,#780d11 442.5px)"></i>
<i style="left:747px;top:157px;width:441px;height:1px;background:linear-gradient(90deg,#00a169 0.5px,#00a187 93.5px,#01ffd6 94.5px,#27ffde 104.5px,#62ffe9 116.5px,#9dfff3 126.5px,#dafffd 135.5px,#fff6fb 141.5px,#ffc9d5 148.5px,#ffa7b7 155.5px,#ff899d 163.5px,#ff6d85 173.5px,#ff425f 196.5px,#ff2142 227.5px,#ff0d30 260.5px,#f02 299.5px,#c00019 300.5px,#a10015 301.5px,#a10007 439.5px,#780d11 440.5px)"></i>
<i style="left:747px;top:158px;width:440px;height:1px;background:linear-gradient(90deg,#0d7854 0.5px,#00a16c 1.5px,#00a18a 93.5px,#00f5d3 94.5px,#03ffdd 95.5px,#27ffe4 104.5px,#57ffed 114.5px,#befefe 131.5px,#ffeefb 142.5px,#ffc3d5 149.5px,#ffa2b8 156.5px,#ff6a86 174.5px,#ff4061 197.5px,#ff2043 228.5px,#ff0d31 260.5px,#ff0023 298.5px,#c0001a 299.5px,#a10016 300.5px,#a10008 438.5px,#780d12 439.5px)"></i>
<i style="left:747px;top:159px;width:439px;height:1px;background:linear-gradient(90deg,#194f3e 0.5px,#00a16e 1.5px,#00a18e 93.5px,#00e0c6 94.5px,#03ffe2 95.5px,#26ffea 104.5px,#57fff3 114.5px,#96fefe 125.5px,#f6ecff 141.5px,#ffe6fb 143.5px,#ffbdd6 150.5px,#ff9db9 157.5px,#ff6787 175.5px,#ff3e62 198.5px,#ff1f44 229.5px,#ff0d33 260.5px,#ff0025 297.5px,#c0001b 298.5px,#a10017 299.5px,#a10008 437.5px,#780d12 438.5px)"></i>
<i style="left:747px;top:160px;width:438px;height:1px;background:linear-gradient(90deg,#22342e 0.5px,#00a170 1.5px,#00a191 93.5px,#00d5c1 94.5px,#02ffe8 95.5px,#4cfff8 112.5px,#7dfdff 121.5px,#f6e5ff 142.5px,#ffdffb 144.5px,#ffb7d7 151.5px,#ff99ba 158.5px,#ff6489 176.5px,#ff3c63 199.5px,#ff1e45 230.5px,#ff0026 296.5px,#c0001c 297.5px,#a10018 298.5px,#a10009 436.5px,#780d12 437.5px)"></i>
<i style="left:748px;top:161px;width:436px;height:1px;background:linear-gradient(90deg,#04936a 0.5px,#00a173 1.5px,#00a195 92.5px,#00c0b2 93.5px,#02ffee 94.5px,#25fff6 103.5px,#56fdff 113.5px,#ffd8fb 144.5px,#ffb2d7 151.5px,#ff94bb 158.5px,#ff618a 176.5px,#ff3963 200.5px,#ff1c46 231.5px,#ff0028 294.5px,#c0001e 295.5px,#a10019 296.5px,#a10009 434.5px,#780d13 435.5px)"></i>
<i style="left:748px;top:162px;width:435px;height:1px;background:linear-gradient(90deg,#116a52 0.5px,#00a175 1.5px,#00a198 92.5px,#00b6ad 93.5px,#01fff3 94.5px,#32fefe 106.5px,#5df5ff 115.5px,#ffd1fb 145.5px,#ffacd8 152.5px,#ff90bc 159.5px,#ff5c89 178.5px,#ff3663 202.5px,#ff1a46 233.5px,#ff0029 293.5px,#c0001f 294.5px,#a10019 295.5px,#a10009 433.5px,#780d13 434.5px)"></i>
<i style="left:748px;top:163px;width:434px;height:1px;background:linear-gradient(90deg,#1e4138 0.5px,#00a177 1.5px,#00a19c 93.5px,#01fff9 94.5px,#60eeff 116.5px,#f7cfff 144.5px,#ffcafc 146.5px,#ffa7d8 153.5px,#ff88b9 161.5px,#ff5b8c 178.5px,#ff3665 202.5px,#ff1a48 233.5px,#ff002b 292.5px,#c00020 293.5px,#a1001a 294.5px,#a1000a 432.5px,#780d13 433.5px)"></i>
<i style="left:749px;top:164px;width:432px;height:1px;background:linear-gradient(90deg,#049370 0.5px,#00a17a 1.5px,#00a0a0 92.5px,#01f4f4 93.5px,#03feff 94.5px,#5de8ff 115.5px,#ffc4fc 146.5px,#ff87be 160.5px,#ff578b 179.5px,#ff3365 203.5px,#ff1949 233.5px,#ff002c 290.5px,#c00021 291.5px,#a1001b 292.5px,#a1000a 430.5px,#850810 431.5px)"></i>
<i style="left:749px;top:165px;width:432px;height:1px;background:linear-gradient(90deg,#155d4c 0.5px,#00a17c 1.5px,#009da1 92.5px,#00dae0 93.5px,#03f8ff 94.5px,#60e2ff 116.5px,#ffbdfc 147.5px,#ff9dd9 154.5px,#ff7db8 163.5px,#ff4e86 183.5px,#ff2c61 209.5px,#ff1143 244.5px,#ff002e 289.5px,#c00022 290.5px,#a1001c 291.5px,#a1000b 429.5px,#93040e 430.5px,#342223 431.5px)"></i>
<i style="left:749px;top:166px;width:431px;height:1px;background:linear-gradient(90deg,#223430 0.5px,#00a17f 1.5px,#00a1a0 79.5px,#009aa1 92.5px,#00cbd5 93.5px,#02f2ff 94.5px,#54deff 114.5px,#a1ceff 130.5px,#fcbbff 147.5px,#ffb2f6 149.5px,#ff94d6 156.5px,#ff76b5 165.5px,#ff4a85 185.5px,#ff285f 212.5px,#ff1043 247.5px,#ff002f 288.5px,#e00029 289.5px,#a1001d 290.5px,#a1000b 428.5px,#93040e 429.5px,#342223 430.5px)"></i>
<i style="left:750px;top:167px;width:429px;height:1px;background:linear-gradient(90deg,#08856d 0.5px,#00a182 1.5px,#00a1a0 72.5px,#0096a1 91.5px,#00b3c0 92.5px,#02edff 93.5px,#5fd6ff 116.5px,#ffb2fc 148.5px,#ff8cd2 157.5px,#ff6bad 168.5px,#ff5190 180.5px,#ff3976 195.5px,#ff174d 233.5px,#ff0031 286.5px,#e0002a 287.5px,#a1001e 288.5px,#a1000c 426.5px,#93040f 427.5px,#342223 428.5px)"></i>
<i style="left:750px;top:168px;width:428px;height:1px;background:linear-gradient(90deg,#155d50 0.5px,#00a184 1.5px,#00a1a0 66.5px,#0093a1 91.5px,#00a6b6 92.5px,#01e8ff 93.5px,#62d0ff 117.5px,#ffacfc 149.5px,#ff88d3 158.5px,#ff68ae 169.5px,#ff4e91 181.5px,#ff3877 196.5px,#ff164f 233.5px,#ff0032 285.5px,#e0002c 286.5px,#a1001f 287.5px,#a1000c 425.5px,#93040f 426.5px,#342223 427.5px)"></i>
<i style="left:750px;top:169px;width:427px;height:1px;background:linear-gradient(90deg,#223431 0.5px,#00a187 1.5px,#00a0a0 61.5px,#008fa1 92.5px,#01e2ff 93.5px,#56cdff 115.5px,#fdaaff 149.5px,#ffa2f7 151.5px,#ff80d0 160.5px,#ff62ac 171.5px,#ff4a90 183.5px,#ff3577 198.5px,#ff1550 234.5px,#ff0034 284.5px,#e0002d 285.5px,#a10020 286.5px,#a1000d 424.5px,#93040f 425.5px,#342223 426.5px)"></i>
<i style="left:751px;top:170px;width:425px;height:1px;background:linear-gradient(90deg,#0d7868 0.5px,#00a189 1.5px,#00a0a0 54.5px,#008ca1 91.5px,#01d4f5 92.5px,#03ddff 93.5px,#5dc6ff 116.5px,#ffa1fc 150.5px,#ff7fd4 159.5px,#ff61b0 170.5px,#ff4a93 182.5px,#ff357b 196.5px,#ff1553 232.5px,#ff0036 282.5px,#e0002f 283.5px,#a10021 284.5px,#a1000d 422.5px,#930410 423.5px,#342223 424.5px)"></i>
<i style="left:751px;top:171px;width:424px;height:1px;background:linear-gradient(90deg,#1e413c 0.5px,#00a18c 1.5px,#00a0a0 49.5px,#0089a1 91.5px,#00bee0 92.5px,#03d8ff 93.5px,#56c3ff 115.5px,#a3b2ff 132.5px,#fd9fff 150.5px,#ff98f7 152.5px,#ff78d1 161.5px,#ff5cae 172.5px,#ff327a 198.5px,#ff1454 233.5px,#ff0037 281.5px,#e00030 282.5px,#a10022 283.5px,#a1000e 421.5px,#930410 422.5px,#342223 423.5px)"></i>
<i style="left:752px;top:172px;width:422px;height:1px;background:linear-gradient(90deg,#049383 0.5px,#00a18f 1.5px,#00a1a0 40.5px,#0086a1 90.5px,#00bae0 91.5px,#02d3ff 92.5px,#61bbff 117.5px,#ff97fc 151.5px,#ff78d5 160.5px,#ff5bb2 171.5px,#ff327d 197.5px,#ff1456 232.5px,#ff0039 279.5px,#e00032 280.5px,#a10023 281.5px,#a1000e 419.5px,#930411 420.5px,#342223 421.5px)"></i>
<i style="left:752px;top:173px;width:421px;height:1px;background:linear-gradient(90deg,#155d56 0.5px,#00a191 1.5px,#00a0a0 36.5px,#0083a1 90.5px,#009cc0 91.5px,#02cfff 92.5px,#63b6ff 118.5px,#ff92fc 152.5px,#ff74d6 161.5px,#ff5bb5 171.5px,#ff4498 183.5px,#ff317f 197.5px,#ff1357 232.5px,#ff003b 278.5px,#e00033 279.5px,#a10024 280.5px,#a1000f 418.5px,#930411 419.5px,#342223 420.5px)"></i>
<i style="left:752px;top:174px;width:420px;height:1px;background:linear-gradient(90deg,#223432 0.5px,#00a194 1.5px,#00a0a1 31.5px,#0081a1 90.5px,#0099c0 91.5px,#01caff 92.5px,#58b4ff 116.5px,#fd90ff 152.5px,#ff8af8 154.5px,#ff6ed2 163.5px,#ff56b3 173.5px,#ff2e7f 199.5px,#ff1258 233.5px,#ff003c 277.5px,#e00035 278.5px,#a10025 279.5px,#a1000f 417.5px,#930412 418.5px,#342223 419.5px)"></i>
<i style="left:753px;top:175px;width:418px;height:1px;background:linear-gradient(90deg,#0d7871 0.5px,#00a197 1.5px,#00a0a1 24.5px,#007da1 90.5px,#01c6ff 91.5px,#5faeff 117.5px,#ff89fc 153.5px,#ff6dd7 162.5px,#ff55b7 172.5px,#ff2f83 197.5px,#ff135c 230.5px,#ff003e 275.5px,#e00036 276.5px,#a10027 277.5px,#a10010 415.5px,#930412 416.5px,#342223 417.5px)"></i>
<i style="left:753px;top:176px;width:417px;height:1px;background:linear-gradient(90deg,#1e4140 0.5px,#00a19a 1.5px,#009fa1 19.5px,#007ba1 90.5px,#01c2ff 91.5px,#24b8ff 102.5px,#61a9ff 118.5px,#ff85fc 154.5px,#ff69d7 163.5px,#ff52b8 173.5px,#ff2d84 198.5px,#ff125d 231.5px,#ff0040 274.5px,#e00038 275.5px,#a10028 276.5px,#a10010 415.5px,#411e21 416.5px)"></i>
<i style="left:754px;top:177px;width:415px;height:1px;background:linear-gradient(90deg,#04938f 0.5px,#00a19d 1.5px,#00a0a0 10.5px,#0078a1 89.5px,#00a6e0 90.5px,#02bdff 91.5px,#62a5ff 118.5px,#ff80fc 154.5px,#ff66d8 163.5px,#ff50b8 173.5px,#ff2d86 197.5px,#ff125f 229.5px,#ff0042 272.5px,#e00039 273.5px,#a10029 274.5px,#a10011 413.5px,#4f191f 414.5px)"></i>
<i style="left:754px;top:178px;width:414px;height:1px;background:linear-gradient(90deg,#116a69 0.5px,#00a1a0 1.5px,#0076a1 89.5px,#00a3e0 90.5px,#02b9ff 91.5px,#60a1ff 118.5px,#ff7cfc 155.5px,#ff63d8 164.5px,#ff4db9 174.5px,#ff2b87 198.5px,#ff1160 230.5px,#f04 271.5px,#e0003b 272.5px,#a1002a 273.5px,#a10011 412.5px,#4f191f 413.5px)"></i>
<i style="left:754px;top:179px;width:413px;height:1px;background:linear-gradient(90deg,#223434 0.5px,#009fa1 1.5px,#0073a1 89.5px,#0089c0 90.5px,#02b5ff 91.5px,#2baaff 104.5px,#669cff 120.5px,#f87bff 154.5px,#ff78fd 156.5px,#ff60d8 165.5px,#ff49b7 176.5px,#ff2988 199.5px,#ff1162 230.5px,#ff0046 270.5px,#e0003d 271.5px,#a1002b 272.5px,#a10012 411.5px,#4f191f 412.5px)"></i>
<i style="left:755px;top:180px;width:411px;height:1px;background:linear-gradient(90deg,#088285 0.5px,#009ca1 1.5px,#0071a1 88.5px,#0087c0 89.5px,#01b2ff 90.5px,#6099ff 118.5px,#ff74fd 156.5px,#ff4abd 174.5px,#ff298b 198.5px,#ff1064 229.5px,#ff0048 268.5px,#e0003e 269.5px,#a1002c 270.5px,#a10012 409.5px,#4f191f 410.5px)"></i>
<i style="left:755px;top:181px;width:410px;height:1px;background:linear-gradient(90deg,#15595d 0.5px,#0099a1 1.5px,#006ea1 89.5px,#01aeff 90.5px,#25a4ff 102.5px,#6295ff 119.5px,#ff71fd 157.5px,#ff47be 175.5px,#ff278b 199.5px,#ff1066 229.5px,#ff004a 267.5px,#e00040 268.5px,#a1002e 269.5px,#a1001e 328.5px,#a10013 408.5px,#4f191f 409.5px)"></i>
<i style="left:756px;top:182px;width:408px;height:1px;background:linear-gradient(90deg,#0097a1 0.5px,#006ca1 88.5px,#01abff 89.5px,#24a1ff 101.5px,#6092ff 118.5px,#ff6dfd 157.5px,#ff45be 175.5px,#ff278e 198.5px,#ff1069 227.5px,#ff004b 265.5px,#f50048 266.5px,#a1002f 267.5px,#a1001f 326.5px,#a10013 406.5px,#4f1920 407.5px)"></i>
<i style="left:756px;top:183px;width:407px;height:1px;background:linear-gradient(90deg,#11636a 0.5px,#0094a1 1.5px,#006aa1 88.5px,#0093e0 89.5px,#02a7ff 90.5px,#628eff 119.5px,#ff69fd 158.5px,#ff43bf 176.5px,#ff258f 199.5px,#ff0f6a 228.5px,#ff004d 264.5px,#f5004a 265.5px,#ab0033 266.5px,#a10030 267.5px,#a1001f 326.5px,#a10014 405.5px,#4f1920 406.5px)"></i>
<i style="left:756px;top:184px;width:406px;height:1px;background:linear-gradient(90deg,#1e3e41 0.5px,#0091a1 1.5px,#0068a1 88.5px,#0090e0 89.5px,#02a3ff 90.5px,#638aff 120.5px,#ff66fd 159.5px,#ff40c0 177.5px,#ff2591 199.5px,#ff0f6d 227.5px,#ff0050 263.5px,#f5004c 264.5px,#ab0035 265.5px,#a10031 266.5px,#a10020 325.5px,#a10014 404.5px,#4f1920 405.5px)"></i>
<i style="left:757px;top:185px;width:404px;height:1px;background:linear-gradient(90deg,#087885 0.5px,#008fa1 1.5px,#0066a1 87.5px,#0079c0 88.5px,#02a0ff 89.5px,#6187ff 119.5px,#ff62fd 159.5px,#ff40c3 176.5px,#ff2494 198.5px,#ff0f6e 226.5px,#ff0052 261.5px,#f5004e 262.5px,#ab0036 263.5px,#a10032 264.5px,#a10021 323.5px,#a10015 402.5px,#4f1920 403.5px)"></i>
<i style="left:757px;top:186px;width:403px;height:1px;background:linear-gradient(90deg,#15545d 0.5px,#008ca1 1.5px,#0064a1 87.5px,#0077c0 88.5px,#019dff 89.5px,#6383ff 120.5px,#ff5ffd 160.5px,#ff3dc4 177.5px,#ff2395 199.5px,#ff0f70 226.5px,#ff0054 260.5px,#f50050 261.5px,#ab0037 262.5px,#a10034 263.5px,#a10022 322.5px,#a10015 401.5px,#4f1920 402.5px)"></i>
<i style="left:757px;top:187px;width:402px;height:1px;background:linear-gradient(90deg,#223134 0.5px,#008aa1 1.5px,#0062a1 87.5px,#0068ab 88.5px,#019aff 89.5px,#288fff 103.5px,#6580ff 121.5px,#f95eff 159.5px,#ff5cfd 161.5px,#ff38bf 180.5px,#ff2195 200.5px,#ff0e72 226.5px,#ff0056 259.5px,#f50052 260.5px,#ab0039 261.5px,#a10035 262.5px,#a10023 321.5px,#a10016 400.5px,#4f1921 401.5px)"></i>
<i style="left:758px;top:188px;width:400px;height:1px;background:linear-gradient(90deg,#0d6778 0.5px,#0087a1 1.5px,#0060a1 87.5px,#0197ff 88.5px,#248dff 101.5px,#5f7eff 119.5px,#ff59fd 161.5px,#ff39c5 178.5px,#ff2198 199.5px,#ff0e74 225.5px,#ff0058 257.5px,#f50054 258.5px,#ab003a 259.5px,#a10036 260.5px,#a10024 319.5px,#a10017 398.5px,#6a111d 399.5px)"></i>
<i style="left:758px;top:189px;width:399px;height:1px;background:linear-gradient(90deg,#1e3b41 0.5px,#0085a1 1.5px,#005ea1 87.5px,#0088ea 88.5px,#0293ff 89.5px,#6879ff 122.5px,#fd57ff 161.5px,#ff37c5 179.5px,#ff209a 199.5px,#ff0e77 224.5px,#ff005a 256.5px,#f50056 257.5px,#ab003c 258.5px,#a10038 259.5px,#a10025 317.5px,#a10017 397.5px,#780d1c 398.5px)"></i>
<i style="left:759px;top:190px;width:397px;height:1px;background:linear-gradient(90deg,#047993 0.5px,#0083a1 1.5px,#005ca1 86.5px,#007fe0 87.5px,#0291ff 88.5px,#6377ff 120.5px,#ff53fd 162.5px,#ff35c6 179.5px,#ff1f9b 199.5px,#ff0d78 224.5px,#ff005d 254.5px,#f50058 255.5px,#ab003d 256.5px,#a10039 257.5px,#a10026 315.5px,#a10018 395.5px,#780d1c 396.5px)"></i>
<i style="left:759px;top:191px;width:396px;height:1px;background:linear-gradient(90deg,#154f5d 0.5px,#0081a1 1.5px,#005aa1 86.5px,#0071cb 87.5px,#018eff 88.5px,#6474ff 121.5px,#ff50fd 163.5px,#ff34c9 179.5px,#ff1e9e 199.5px,#ff0d7b 223.5px,#ff005f 253.5px,#f5005a 254.5px,#ab003f 255.5px,#a1003a 256.5px,#a10027 314.5px,#a10018 394.5px,#780d1d 395.5px)"></i>
<i style="left:759px;top:192px;width:395px;height:1px;background:linear-gradient(90deg,#223034 0.5px,#007fa1 1.5px,#0059a1 86.5px,#0069c0 87.5px,#018bff 88.5px,#2980ff 103.5px,#6670ff 122.5px,#fd4eff 163.5px,#ff32c9 180.5px,#ff1da0 199.5px,#ff0d7d 223.5px,#ff0061 252.5px,#f5005c 253.5px,#ab0040 254.5px,#a1003c 255.5px,#a10028 313.5px,#a10019 393.5px,#780d1d 394.5px)"></i>
<i style="left:760px;top:193px;width:393px;height:1px;background:linear-gradient(90deg,#11566a 0.5px,#007ca1 1.5px,#0057a1 85.5px,#005cab 86.5px,#0189ff 87.5px,#616fff 120.5px,#ff4afd 164.5px,#ff30ca 180.5px,#ff1ca1 199.5px,#ff0c7f 222.5px,#ff0063 250.5px,#f5005f 251.5px,#ab0042 252.5px,#a1003d 253.5px,#a10029 311.5px,#a1001a 391.5px,#780d1e 392.5px)"></i>
<i style="left:760px;top:194px;width:392px;height:1px;background:linear-gradient(90deg,#1e3941 0.5px,#007aa1 1.5px,#0055a1 86.5px,#0186ff 87.5px,#277bff 102.5px,#656bff 122.5px,#fd49ff 164.5px,#ff2eca 181.5px,#ff1ca3 199.5px,#ff0c81 222.5px,#f06 249.5px,#f50061 250.5px,#ab0043 251.5px,#a1003f 252.5px,#a10029 310.5px,#a1001a 390.5px,#780d1e 391.5px)"></i>
<i style="left:761px;top:195px;width:390px;height:1px;background:linear-gradient(90deg,#086685 0.5px,#0078a1 1.5px,#0053a1 85.5px,#0079ea 86.5px,#0283ff 87.5px,#6469ff 121.5px,#ff45fd 165.5px,#ff2ecd 180.5px,#ff1aa4 199.5px,#ff0b83 221.5px,#ff0068 247.5px,#f50063 248.5px,#ab0045 249.5px,#a10040 250.5px,#a1002a 308.5px,#a1001b 388.5px,#780d1e 389.5px)"></i>
<i style="left:761px;top:196px;width:389px;height:1px;background:linear-gradient(90deg,#154a5d 0.5px,#0076a1 1.5px,#0052a1 85.5px,#0071e0 86.5px,#0280ff 87.5px,#6267ff 121.5px,#ff42fd 166.5px,#ff2cce 181.5px,#ff1aa6 199.5px,#ff0b86 220.5px,#ff006b 246.5px,#f50066 247.5px,#ab0047 248.5px,#a10042 249.5px,#a1002b 307.5px,#a1001b 387.5px,#780d1f 388.5px)"></i>
<i style="left:762px;top:197px;width:387px;height:1px;background:linear-gradient(90deg,#0075a1 0.5px,#0050a1 84.5px,#0065cb 85.5px,#017eff 86.5px,#6364ff 121.5px,#ff40fd 166.5px,#ff2ace 181.5px,#ff19a9 198.5px,#ff0b88 219.5px,#ff006d 244.5px,#f50068 245.5px,#ab0048 246.5px,#a10043 247.5px,#a1002c 305.5px,#a1001c 385.5px,#780d1f 386.5px)"></i>
<i style="left:762px;top:198px;width:386px;height:1px;background:linear-gradient(90deg,#11516a 0.5px,#0072a1 1.5px,#004fa1 84.5px,#005ec0 85.5px,#017cff 86.5px,#6262ff 121.5px,#ff3dfd 167.5px,#ff28cf 182.5px,#ff18a9 199.5px,#ff0a89 220.5px,#ff006f 244.5px,#ab004a 245.5px,#a10045 246.5px,#a1002d 304.5px,#a1001d 384.5px,#780d20 385.5px)"></i>
<i style="left:762px;top:199px;width:385px;height:1px;background:linear-gradient(90deg,#222e34 0.5px,#0071a1 1.5px,#004da1 84.5px,#0057b6 85.5px,#0179ff 86.5px,#286eff 102.5px,#665eff 123.5px,#fd3cff 167.5px,#ff26cf 183.5px,#ff17ac 199.5px,#ff0a8c 219.5px,#ff0072 243.5px,#c00055 244.5px,#a10046 245.5px,#a1002e 303.5px,#a1001d 383.5px,#780d20 384.5px)"></i>
<i style="left:763px;top:200px;width:383px;height:1px;background:linear-gradient(90deg,#085f85 0.5px,#006fa1 1.5px,#004ca1 84.5px,#0177ff 85.5px,#256dff 100.5px,#625dff 121.5px,#ff39fd 168.5px,#ff26d2 182.5px,#ff16ad 199.5px,#ff0a8e 218.5px,#ff0074 241.5px,#c00057 242.5px,#a10048 243.5px,#a1002f 301.5px,#a1001e 381.5px,#93041f 382.5px)"></i>
<i style="left:763px;top:201px;width:383px;height:1px;background:linear-gradient(90deg,#193e4f 0.5px,#006da1 1.5px,#004aa1 84.5px,#0070f5 85.5px,#0274ff 86.5px,#5a5dff 119.5px,#fd37ff 168.5px,#ff35fa 170.5px,#ff23d0 184.5px,#ff15ad 200.5px,#ff0990 218.5px,#f07 240.5px,#c00059 241.5px,#a1004a 242.5px,#a10030 300.5px,#a1001f 380.5px,#93041f 381.5px,#342225 382.5px)"></i>
<i style="left:764px;top:202px;width:381px;height:1px;background:linear-gradient(90deg,#046493 0.5px,#006ba1 1.5px,#0049a1 83.5px,#0065e0 84.5px,#0272ff 85.5px,#6458ff 122.5px,#ff34fd 169.5px,#ff23d6 182.5px,#ff15b2 198.5px,#ff0994 216.5px,#ff007a 238.5px,#c0005b 239.5px,#a1004b 240.5px,#a10031 298.5px,#a1001f 378.5px,#930420 379.5px,#342225 380.5px)"></i>
<i style="left:764px;top:203px;width:380px;height:1px;background:linear-gradient(90deg,#15445d 0.5px,#0069a1 1.5px,#0048a1 83.5px,#005ed5 84.5px,#0170ff 85.5px,#5d57ff 120.5px,#fd33ff 169.5px,#ff31fa 171.5px,#ff21d3 184.5px,#ff14b2 199.5px,#ff0895 217.5px,#ff007c 237.5px,#c0005d 238.5px,#a1004d 239.5px,#a10032 297.5px,#a10020 377.5px,#930420 378.5px,#342225 379.5px)"></i>
<i style="left:764px;top:204px;width:379px;height:1px;background:linear-gradient(90deg,#222d34 0.5px,#0068a1 1.5px,#0046a1 83.5px,#0054c0 84.5px,#016eff 85.5px,#5b56ff 120.5px,#fd31ff 170.5px,#ff2efa 172.5px,#ff1fd4 185.5px,#ff13b5 199.5px,#ff007f 236.5px,#c0005f 237.5px,#a1004f 238.5px,#a10034 296.5px,#a10021 376.5px,#930421 377.5px,#342225 378.5px)"></i>
<i style="left:765px;top:205px;width:377px;height:1px;background:linear-gradient(90deg,#0d5178 0.5px,#0066a1 1.5px,#0045a1 82.5px,#004eb6 83.5px,#016cff 84.5px,#5d53ff 120.5px,#fd2fff 170.5px,#ff2cfa 172.5px,#ff1ed4 185.5px,#ff12b5 199.5px,#ff0082 234.5px,#c00061 235.5px,#a10051 236.5px,#a10035 294.5px,#a10021 374.5px,#930422 375.5px,#342225 376.5px)"></i>
<i style="left:765px;top:206px;width:376px;height:1px;background:linear-gradient(90deg,#1e3441 0.5px,#0065a1 1.5px,#0043a1 83.5px,#016aff 84.5px,#5b52ff 120.5px,#fd2dff 171.5px,#ff2afa 173.5px,#ff1dd7 185.5px,#ff11b8 199.5px,#ff0085 233.5px,#c00063 234.5px,#a10052 235.5px,#a10036 293.5px,#a10022 373.5px,#930422 374.5px,#342225 375.5px)"></i>
<i style="left:766px;top:207px;width:374px;height:1px;background:linear-gradient(90deg,#085685 0.5px,#0063a1 1.5px,#0042a1 82.5px,#0064f5 83.5px,#0268ff 84.5px,#624eff 122.5px,#ff2afe 172.5px,#ff1cda 184.5px,#ff11ba 198.5px,#f08 231.5px,#c00065 232.5px,#a10054 233.5px,#a10037 290.5px,#a10023 371.5px,#930423 372.5px,#342226 373.5px)"></i>
<i style="left:766px;top:208px;width:373px;height:1px;background:linear-gradient(90deg,#1e3341 0.5px,#0061a1 1.5px,#0041a1 82.5px,#005ae0 83.5px,#0266ff 84.5px,#5e4dff 121.5px,#fd29ff 172.5px,#ff27fa 174.5px,#ff1ad8 186.5px,#ff10bb 199.5px,#ff008b 230.5px,#c00068 231.5px,#a10056 232.5px,#a10038 289.5px,#a10023 370.5px,#930423 371.5px,#342226 372.5px)"></i>
<i style="left:767px;top:209px;width:371px;height:1px;background:linear-gradient(90deg,#085385 0.5px,#005fa1 1.5px,#0040a1 81.5px,#0054d5 82.5px,#0164ff 83.5px,#2859ff 100.5px,#6549ff 123.5px,#ff26fe 173.5px,#ff10bf 197.5px,#ff008e 228.5px,#c0006a 229.5px,#a10058 230.5px,#a1003a 287.5px,#a10024 368.5px,#930424 369.5px,#342226 370.5px)"></i>
<i style="left:767px;top:210px;width:370px;height:1px;background:linear-gradient(90deg,#153f5d 0.5px,#005ea1 1.5px,#003fa1 81.5px,#004bc0 82.5px,#0162ff 83.5px,#5e49ff 121.5px,#fd25ff 173.5px,#ff23fb 175.5px,#ff0fc0 198.5px,#ff0091 227.5px,#c0006c 228.5px,#a1005a 229.5px,#a1003b 286.5px,#a10025 367.5px,#930425 368.5px,#342226 369.5px)"></i>
<i style="left:768px;top:211px;width:368px;height:1px;background:linear-gradient(90deg,#045793 0.5px,#005ca1 1.5px,#003ea1 80.5px,#0045b6 81.5px,#0161ff 82.5px,#2656ff 99.5px,#6246ff 122.5px,#ff22fe 174.5px,#ff0ec2 197.5px,#ff0094 225.5px,#c0006f 226.5px,#a1005c 227.5px,#a1003c 284.5px,#a10025 365.5px,#930425 366.5px,#342226 367.5px)"></i>
<i style="left:768px;top:212px;width:367px;height:1px;background:linear-gradient(90deg,#153e5d 0.5px,#005ba1 1.5px,#003ca1 81.5px,#015fff 82.5px,#2554ff 99.5px,#6344ff 123.5px,#ff20fe 175.5px,#ff0ec5 197.5px,#ff0098 224.5px,#c00071 225.5px,#a1005e 226.5px,#a1003d 283.5px,#a10026 365.5px,#4f1926 366.5px)"></i>
<i style="left:769px;top:213px;width:365px;height:1px;background:linear-gradient(90deg,#005aa1 0.5px,#003ba1 80.5px,#005dff 81.5px,#2552ff 98.5px,#6243ff 122.5px,#ff1ffe 175.5px,#ff0dc7 196.5px,#ff009b 222.5px,#c00074 223.5px,#a10060 224.5px,#a1003e 281.5px,#a10027 363.5px,#4f1926 364.5px)"></i>
<i style="left:769px;top:214px;width:364px;height:1px;background:linear-gradient(90deg,#11426a 0.5px,#0058a1 1.5px,#003aa1 80.5px,#0050e0 81.5px,#025bff 82.5px,#6341ff 123.5px,#ff1dfe 176.5px,#ff0dca 196.5px,#ff009e 221.5px,#c00076 222.5px,#a10062 223.5px,#a1003f 280.5px,#a10027 362.5px,#4f1926 363.5px)"></i>
<i style="left:769px;top:215px;width:363px;height:1px;background:linear-gradient(90deg,#222c34 0.5px,#0057a1 1.5px,#0039a1 80.5px,#004fe0 81.5px,#0159ff 82.5px,#2a4dff 101.5px,#673eff 125.5px,#fd1cff 176.5px,#ff0bca 197.5px,#ff00a2 220.5px,#e0008c 221.5px,#a10064 222.5px,#a10041 279.5px,#a10028 361.5px,#4f1927 362.5px)"></i>
<i style="left:770px;top:216px;width:361px;height:1px;background:linear-gradient(90deg,#11416a 0.5px,#0055a1 1.5px,#0038a1 79.5px,#0043c0 80.5px,#0158ff 81.5px,#633dff 123.5px,#ff1afe 177.5px,#ff0bcd 196.5px,#ff00a5 218.5px,#e0008f 219.5px,#a10066 220.5px,#a10042 277.5px,#a10029 359.5px,#4f1927 360.5px)"></i>
<i style="left:770px;top:217px;width:360px;height:1px;background:linear-gradient(90deg,#222b34 0.5px,#0054a1 1.5px,#0037a1 79.5px,#0042c0 80.5px,#0156ff 81.5px,#264bff 99.5px,#643bff 124.5px,#fd19ff 177.5px,#ff0acd 197.5px,#ff00a9 217.5px,#e00093 218.5px,#a10068 219.5px,#a10043 276.5px,#a1002a 358.5px,#4f1927 359.5px)"></i>
<i style="left:771px;top:218px;width:358px;height:1px;background:linear-gradient(90deg,#113f6a 0.5px,#0053a1 1.5px,#0036a1 79.5px,#0155ff 80.5px,#264aff 98.5px,#633aff 123.5px,#ff17fe 178.5px,#ff0ad2 195.5px,#ff00ac 215.5px,#e00096 216.5px,#a1006b 217.5px,#a10045 274.5px,#a1002b 356.5px,#4f1927 357.5px)"></i>
<i style="left:771px;top:219px;width:357px;height:1px;background:linear-gradient(90deg,#222b34 0.5px,#0051a1 1.5px,#0035a1 79.5px,#0053ff 80.5px,#2748ff 99.5px,#6438ff 124.5px,#fd16ff 178.5px,#ff09d2 196.5px,#ff00b0 214.5px,#e00099 215.5px,#a1006d 216.5px,#a10046 273.5px,#a1002b 355.5px,#4f1928 356.5px)"></i>
<i style="left:772px;top:220px;width:355px;height:1px;background:linear-gradient(90deg,#113e6a 0.5px,#0050a1 1.5px,#0034a1 78.5px,#0048e0 79.5px,#0251ff 80.5px,#6536ff 124.5px,#ff14fe 179.5px,#ff09d7 194.5px,#ff00b4 212.5px,#e0009c 213.5px,#a1006f 214.5px,#a10047 271.5px,#a1002c 353.5px,#4f1928 354.5px)"></i>
<i style="left:772px;top:221px;width:354px;height:1px;background:linear-gradient(90deg,#222b34 0.5px,#004fa1 1.5px,#0033a1 78.5px,#0047e0 79.5px,#0150ff 80.5px,#2845ff 99.5px,#6635ff 125.5px,#fd13ff 179.5px,#ff08d7 195.5px,#ff00b8 211.5px,#e0009f 212.5px,#a10072 213.5px,#a10049 270.5px,#a1002d 352.5px,#4f1928 353.5px)"></i>
<i style="left:773px;top:222px;width:352px;height:1px;background:linear-gradient(90deg,#084585 0.5px,#004da1 1.5px,#0032a1 77.5px,#003cc0 78.5px,#014fff 79.5px,#2743ff 98.5px,#6533ff 124.5px,#ff11fe 180.5px,#ff07da 194.5px,#ff00bc 209.5px,#e000a3 210.5px,#a10074 211.5px,#a1004a 268.5px,#a1002e 350.5px,#4f1928 351.5px)"></i>
<i style="left:773px;top:223px;width:351px;height:1px;background:linear-gradient(90deg,#1e2f41 0.5px,#004ca1 1.5px,#0031a1 77.5px,#003bc0 78.5px,#014dff 79.5px,#2941ff 99.5px,#6632ff 125.5px,#fd10ff 180.5px,#ff00c0 208.5px,#e000a6 209.5px,#a10076 210.5px,#a1005f 236.5px,#a1004b 267.5px,#a1002e 349.5px,#4f1929 350.5px)"></i>
<i style="left:774px;top:224px;width:349px;height:1px;background:linear-gradient(90deg,#084385 0.5px,#004ba1 1.5px,#0030a1 77.5px,#014cff 78.5px,#2641ff 97.5px,#6231ff 123.5px,#ff0efe 181.5px,#ff00c4 206.5px,#e000aa 207.5px,#a10079 208.5px,#a10061 234.5px,#a1004d 265.5px,#a1002f 347.5px,#780d2c 348.5px)"></i>
<i style="left:774px;top:225px;width:348px;height:1px;background:linear-gradient(90deg,#1e2e41 0.5px,#004aa1 1.5px,#002fa1 77.5px,#004bff 78.5px,#253fff 97.5px,#6330ff 124.5px,#fd0eff 181.5px,#ff00c8 205.5px,#e000ad 206.5px,#a1007b 207.5px,#a10062 233.5px,#a1004e 264.5px,#a10030 346.5px,#780d2d 347.5px)"></i>
<i style="left:775px;top:226px;width:346px;height:1px;background:linear-gradient(90deg,#084185 0.5px,#0049a1 1.5px,#002fa1 76.5px,#0040e0 77.5px,#0249ff 78.5px,#642eff 124.5px,#ff0cfe 182.5px,#f0c 203.5px,#e000b1 204.5px,#a1007e 205.5px,#a10065 230.5px,#a10050 261.5px,#a10031 344.5px,#780d2d 345.5px)"></i>
<i style="left:775px;top:227px;width:345px;height:1px;background:linear-gradient(90deg,#1e2e41 0.5px,#0048a1 1.5px,#002ea1 76.5px,#003fe0 77.5px,#0147ff 78.5px,#283cff 98.5px,#662cff 125.5px,#fd0bff 182.5px,#ff00d0 202.5px,#e000b5 203.5px,#a10081 204.5px,#a10067 229.5px,#a10052 260.5px,#a10032 343.5px,#780d2e 344.5px)"></i>
<i style="left:776px;top:228px;width:343px;height:1px;background:linear-gradient(90deg,#083f85 0.5px,#0046a1 1.5px,#002da1 75.5px,#0038cb 76.5px,#0146ff 77.5px,#273bff 97.5px,#642bff 124.5px,#ff09fe 183.5px,#ff00d5 200.5px,#e000b9 201.5px,#a10083 202.5px,#a10069 227.5px,#a10053 258.5px,#a10033 341.5px,#780d2e 342.5px)"></i>
<i style="left:776px;top:229px;width:342px;height:1px;background:linear-gradient(90deg,#1e2d41 0.5px,#0045a1 1.5px,#002ca1 75.5px,#0034c0 76.5px,#0145ff 77.5px,#2939ff 98.5px,#652aff 125.5px,#fd09ff 183.5px,#ff00d9 199.5px,#e000bd 200.5px,#a10086 201.5px,#a1006b 226.5px,#a10055 257.5px,#a10033 340.5px,#780d2f 341.5px)"></i>
<i style="left:777px;top:230px;width:340px;height:1px;background:linear-gradient(90deg,#083e85 0.5px,#0044a1 1.5px,#002ba1 74.5px,#002eab 75.5px,#0144ff 76.5px,#2639ff 96.5px,#6429ff 124.5px,#ff07fe 184.5px,#ff00de 197.5px,#e000c1 198.5px,#a10089 199.5px,#a1006d 224.5px,#a10056 255.5px,#a10034 338.5px,#780d2f 339.5px)"></i>
<i style="left:777px;top:231px;width:339px;height:1px;background:linear-gradient(90deg,#1e2d41 0.5px,#0043a1 1.5px,#002aa1 75.5px,#0043ff 76.5px,#2737ff 97.5px,#6527ff 125.5px,#fd06ff 184.5px,#ff00e3 196.5px,#ea00ce 197.5px,#a1008c 198.5px,#a10089 200.5px,#a1006e 225.5px,#a10057 255.5px,#a10035 337.5px,#780d30 338.5px)"></i>
<i style="left:778px;top:232px;width:337px;height:1px;background:linear-gradient(90deg,#083c85 0.5px,#0042a1 1.5px,#002aa1 74.5px,#003cea 75.5px,#0141ff 76.5px,#6426ff 124.5px,#ff05fe 185.5px,#ff00e7 194.5px,#f500dc 195.5px,#ab0098 196.5px,#a1008d 197.5px,#a1008b 199.5px,#a1006f 224.5px,#a10058 254.5px,#a10036 335.5px,#780d31 336.5px)"></i>
<i style="left:778px;top:233px;width:336px;height:1px;background:linear-gradient(90deg,#1e2c41 0.5px,#0041a1 1.5px,#0029a1 74.5px,#0038e0 75.5px,#0140ff 76.5px,#2834ff 97.5px,#6525ff 125.5px,#fd04ff 185.5px,#ff00ec 193.5px,#f500e0 194.5px,#ab009b 195.5px,#a10090 196.5px,#a1008c 199.5px,#a10070 224.5px,#a10059 254.5px,#a10037 334.5px,#780d31 335.5px)"></i>
<i style="left:779px;top:234px;width:334px;height:1px;background:linear-gradient(90deg,#083a85 0.5px,#0040a1 1.5px,#0028a1 73.5px,#0032cb 74.5px,#013fff 75.5px,#2733ff 96.5px,#6424ff 124.5px,#ff03fe 186.5px,#ff00f1 191.5px,#f500e5 192.5px,#ab009f 193.5px,#a10093 194.5px,#a1008e 198.5px,#a10072 222.5px,#a1005b 252.5px,#a10038 332.5px,#780d32 333.5px)"></i>
<i style="left:779px;top:235px;width:333px;height:1px;background:linear-gradient(90deg,#1e2c41 0.5px,#003fa1 1.5px,#0027a1 73.5px,#002fc0 74.5px,#013eff 75.5px,#2732ff 96.5px,#6522ff 125.5px,#fd02ff 186.5px,#ff00f6 190.5px,#f500ea 191.5px,#ab00a2 192.5px,#a10097 193.5px,#a1008f 198.5px,#a10073 222.5px,#a1005c 252.5px,#a10039 331.5px,#780d32 332.5px)"></i>
<i style="left:780px;top:236px;width:332px;height:1px;background:linear-gradient(90deg,#083985 0.5px,#003ea1 1.5px,#0027a1 72.5px,#0029ab 73.5px,#013cff 74.5px,#5f23ff 122.5px,#ff00fc 188.5px,#f500ef 189.5px,#ab00a5 190.5px,#a1009a 191.5px,#a1008e 199.5px,#a10073 223.5px,#a1005c 252.5px,#a1003a 329.5px,#930437 330.5px,#342228 331.5px)"></i>
<i style="left:780px;top:237px;width:331px;height:1px;background:linear-gradient(90deg,#1e2b41 0.5px,#003da1 1.5px,#0026a1 73.5px,#003bff 74.5px,#2730ff 96.5px,#6520ff 125.5px,#fd00ff 187.5px,#f400f4 188.5px,#ab00a9 189.5px,#a1009d 190.5px,#a1008f 199.5px,#a10074 223.5px,#a1005d 252.5px,#a1003b 328.5px,#930438 329.5px,#342228 330.5px)"></i>
<i style="left:781px;top:238px;width:329px;height:1px;background:linear-gradient(90deg,#0d3578 0.5px,#003ca1 1.5px,#0025a1 72.5px,#0036ea 73.5px,#013aff 74.5px,#631fff 124.5px,#f800ff 185.5px,#f000f5 186.5px,#aa00ab 187.5px,#a100a0 188.5px,#a10091 198.5px,#a10075 222.5px,#a1005f 250.5px,#a1003c 326.5px,#930439 327.5px,#342228 328.5px)"></i>
<i style="left:781px;top:239px;width:328px;height:1px;background:linear-gradient(90deg,#222834 0.5px,#003ba1 1.5px,#0024a1 72.5px,#0032e0 73.5px,#0139ff 74.5px,#621fff 124.5px,#f300ff 184.5px,#eb00f5 185.5px,#a600ab 186.5px,#9e00a1 187.5px,#a1007c 216.5px,#a10064 244.5px,#a1004e 280.5px,#a1003d 325.5px,#93043a 326.5px,#342228 327.5px)"></i>
<i style="left:782px;top:240px;width:326px;height:1px;background:linear-gradient(90deg,#11316a 0.5px,#003aa1 1.5px,#0024a1 71.5px,#002dcb 72.5px,#0138ff 73.5px,#5f1eff 122.5px,#ed00ff 182.5px,#e600f5 183.5px,#a300ab 184.5px,#9a00a1 185.5px,#a1009f 190.5px,#a1007e 215.5px,#a10063 245.5px,#a1003e 323.5px,#93043b 324.5px,#342229 325.5px)"></i>
<i style="left:782px;top:241px;width:325px;height:1px;background:linear-gradient(90deg,#222834 0.5px,#0039a1 1.5px,#0023a1 71.5px,#002ac0 72.5px,#0137ff 73.5px,#5c1eff 121.5px,#e800ff 181.5px,#e100f5 182.5px,#9f00ab 183.5px,#9700a1 184.5px,#a100a0 190.5px,#a1007e 216.5px,#a10063 247.5px,#a1003f 322.5px,#93043c 323.5px,#342229 324.5px)"></i>
<i style="left:783px;top:242px;width:323px;height:1px;background:linear-gradient(90deg,#11306a 0.5px,#0038a1 1.5px,#0023a1 70.5px,#0027b6 71.5px,#0136ff 72.5px,#5b1dff 120.5px,#e400ff 179.5px,#dd00f5 180.5px,#9c00ab 181.5px,#9400a1 182.5px,#a100a0 190.5px,#a1007e 216.5px,#a10063 247.5px,#a10040 320.5px,#93043c 321.5px,#342229 322.5px)"></i>
<i style="left:784px;top:243px;width:321px;height:1px;background:linear-gradient(90deg,#043593 0.5px,#0037a1 1.5px,#0022a1 70.5px,#0035ff 71.5px,#571dff 118.5px,#df00ff 177.5px,#d800f5 178.5px,#9900ab 179.5px,#9100a1 180.5px,#a100a0 190.5px,#a1007e 216.5px,#a10063 248.5px,#a10041 318.5px,#93043d 319.5px,#342229 320.5px)"></i>
<i style="left:784px;top:244px;width:320px;height:1px;background:linear-gradient(90deg,#152d5d 0.5px,#0036a1 1.5px,#0021a1 70.5px,#0032f5 71.5px,#0133ff 72.5px,#561cff 118.5px,#da00ff 176.5px,#d300f5 177.5px,#9600ab 178.5px,#8e00a1 179.5px,#a100a0 191.5px,#a10081 215.5px,#a10067 243.5px,#a10042 317.5px,#93043e 318.5px,#342229 319.5px)"></i>
<i style="left:785px;top:245px;width:318px;height:1px;background:linear-gradient(90deg,#043493 0.5px,#0035a1 1.5px,#0020a1 69.5px,#002de0 70.5px,#0133ff 71.5px,#551cff 117.5px,#d500ff 174.5px,#cf00f5 175.5px,#9300ab 176.5px,#8b00a1 177.5px,#a100a0 191.5px,#a10082 214.5px,#a10068 242.5px,#a10043 315.5px,#93043f 316.5px,#342229 317.5px)"></i>
<i style="left:785px;top:246px;width:317px;height:1px;background:linear-gradient(90deg,#152d5d 0.5px,#0035a1 1.5px,#0020a1 69.5px,#002ad5 70.5px,#0132ff 71.5px,#521bff 116.5px,#d100ff 173.5px,#cb00f5 174.5px,#8f00ab 175.5px,#8800a1 176.5px,#a100a0 192.5px,#a10082 215.5px,#a1006a 242.5px,#a10044 314.5px,#930440 315.5px,#342229 316.5px)"></i>
<i style="left:786px;top:247px;width:315px;height:1px;background:linear-gradient(90deg,#083185 0.5px,#0034a1 1.5px,#001fa1 68.5px,#0025c0 69.5px,#0131ff 70.5px,#511bff 115.5px,#c0f 171.5px,#c600f5 172.5px,#8c00ab 173.5px,#8500a1 174.5px,#a100a0 192.5px,#a10082 215.5px,#a1006a 242.5px,#a10044 313.5px,#342229 314.5px)"></i>
<i style="left:786px;top:248px;width:314px;height:1px;background:linear-gradient(90deg,#1e2941 0.5px,#0033a1 1.5px,#001fa1 68.5px,#0022b6 69.5px,#0130ff 70.5px,#501aff 115.5px,#ca00ff 171.5px,#9a00c0 172.5px,#8300a1 173.5px,#a100a0 193.5px,#a10083 216.5px,#a1006b 242.5px,#a10045 312.5px,#4f1930 313.5px)"></i>
<i style="left:787px;top:249px;width:312px;height:1px;background:linear-gradient(90deg,#082f85 0.5px,#0032a1 1.5px,#001ea1 68.5px,#002fff 69.5px,#4d1aff 113.5px,#c600ff 169.5px,#9700c0 170.5px,#8000a1 171.5px,#a100a0 193.5px,#a10083 216.5px,#a1006b 242.5px,#a10046 310.5px,#4f1931 311.5px)"></i>
<i style="left:787px;top:250px;width:311px;height:1px;background:linear-gradient(90deg,#222734 0.5px,#0031a1 1.5px,#001da1 68.5px,#002cf5 69.5px,#012eff 70.5px,#4e19ff 114.5px,#c200ff 168.5px,#9400c0 169.5px,#7d00a1 170.5px,#a100a0 194.5px,#a10084 216.5px,#a1006c 242.5px,#a10047 309.5px,#4f1931 310.5px)"></i>
<i style="left:788px;top:251px;width:309px;height:1px;background:linear-gradient(90deg,#112c6a 0.5px,#0030a1 1.5px,#001da1 67.5px,#0028e0 68.5px,#012dff 69.5px,#4c18ff 112.5px,#be00ff 166.5px,#9100c0 167.5px,#7a00a1 168.5px,#a100a0 194.5px,#a10084 216.5px,#a1006d 241.5px,#a10049 307.5px,#4f1931 308.5px)"></i>
<i style="left:788px;top:252px;width:308px;height:1px;background:linear-gradient(90deg,#222734 0.5px,#042f93 1.5px,#002fa1 2.5px,#001ca1 67.5px,#0025d5 68.5px,#012cff 69.5px,#4918ff 111.5px,#ba00ff 165.5px,#8e00c0 166.5px,#7800a1 167.5px,#a100a0 195.5px,#a10084 217.5px,#a1006d 242.5px,#a1004a 306.5px,#4f1932 307.5px)"></i>
<i style="left:789px;top:253px;width:306px;height:1px;background:linear-gradient(90deg,#152a5d 0.5px,#002fa1 1.5px,#001ca1 66.5px,#0021c0 67.5px,#012bff 68.5px,#4818ff 110.5px,#b600ff 163.5px,#8a00c0 164.5px,#7500a1 165.5px,#a100a0 195.5px,#a1006e 241.5px,#a1004b 304.5px,#4f1932 305.5px)"></i>
<i style="left:790px;top:254px;width:304px;height:1px;background:linear-gradient(90deg,#042d93 0.5px,#002ea1 1.5px,#001ba1 65.5px,#0020c0 66.5px,#012aff 67.5px,#4517ff 108.5px,#b200ff 161.5px,#8700c0 162.5px,#7300a1 163.5px,#a100a0 195.5px,#a1006f 240.5px,#a1004c 302.5px,#4f1932 303.5px)"></i>
<i style="left:790px;top:255px;width:303px;height:1px;background:linear-gradient(90deg,#19284f 0.5px,#002da1 1.5px,#001aa1 66.5px,#002aff 67.5px,#4417ff 108.5px,#ae00ff 160.5px,#8500c0 161.5px,#7000a1 162.5px,#a100a0 196.5px,#a10070 241.5px,#a1004d 301.5px,#4f1933 302.5px)"></i>
<i style="left:791px;top:256px;width:301px;height:1px;background:linear-gradient(90deg,#082b85 0.5px,#002ca1 1.5px,#001aa1 65.5px,#0029ff 66.5px,#4217ff 106.5px,#a0f 158.5px,#8200c0 159.5px,#6e00a1 160.5px,#a100a0 196.5px,#a10071 240.5px,#a1004e 299.5px,#4f1933 300.5px)"></i>
<i style="left:791px;top:257px;width:300px;height:1px;background:linear-gradient(90deg,#1e2741 0.5px,#002ca1 1.5px,#001aa1 65.5px,#0023e0 66.5px,#0128ff 67.5px,#4315ff 107.5px,#a600ff 157.5px,#7f00c0 158.5px,#6b00a1 159.5px,#a100a0 197.5px,#a10072 240.5px,#a1004f 298.5px,#4f1934 299.5px)"></i>
<i style="left:792px;top:258px;width:298px;height:1px;background:linear-gradient(90deg,#0d2978 0.5px,#002ba1 1.5px,#0019a1 64.5px,#0022e0 65.5px,#0127ff 66.5px,#4015ff 105.5px,#a300ff 155.5px,#7c00c0 156.5px,#6900a1 157.5px,#a100a0 197.5px,#a10072 240.5px,#a10050 296.5px,#4f1934 297.5px)"></i>
<i style="left:792px;top:259px;width:297px;height:1px;background:linear-gradient(90deg,#222634 0.5px,#002aa1 1.5px,#0019a1 64.5px,#001dc0 65.5px,#0126ff 66.5px,#3e15ff 104.5px,#9f00ff 154.5px,#7900c0 155.5px,#6700a1 156.5px,#a100a0 198.5px,#a10073 240.5px,#a10052 295.5px,#5d1539 296.5px)"></i>
<i style="left:793px;top:260px;width:295px;height:1px;background:linear-gradient(90deg,#11286a 0.5px,#0029a1 1.5px,#0018a1 63.5px,#001cc0 64.5px,#0125ff 65.5px,#3d15ff 103.5px,#9b00ff 152.5px,#7700c0 153.5px,#6400a1 154.5px,#a1009f 199.5px,#a10073 240.5px,#a10053 293.5px,#780d44 294.5px)"></i>
<i style="left:794px;top:261px;width:293px;height:1px;background:linear-gradient(90deg,#042893 0.5px,#0028a1 1.5px,#0017a1 63.5px,#0025ff 64.5px,#3a14ff 101.5px,#9800ff 150.5px,#7400c0 151.5px,#6200a1 152.5px,#a100a0 198.5px,#a10075 238.5px,#a10054 291.5px,#780d44 292.5px)"></i>
<i style="left:794px;top:262px;width:292px;height:1px;background:linear-gradient(90deg,#15275d 0.5px,#0028a1 1.5px,#0017a1 63.5px,#0024ff 64.5px,#3a14ff 101.5px,#9400ff 149.5px,#7100c0 150.5px,#6000a1 151.5px,#a100a0 199.5px,#a10075 239.5px,#a10055 290.5px,#780d45 291.5px)"></i>
<i style="left:795px;top:263px;width:290px;height:1px;background:linear-gradient(90deg,#042793 0.5px,#0027a1 1.5px,#0016a1 62.5px,#001fe0 63.5px,#0123ff 64.5px,#3913ff 100.5px,#9100ff 147.5px,#6f00c0 148.5px,#5e00a1 149.5px,#a000a0 199.5px,#a10076 238.5px,#a10056 288.5px,#780d46 289.5px)"></i>
<i style="left:795px;top:264px;width:289px;height:1px;background:linear-gradient(90deg,#1e2641 0.5px,#0026a1 1.5px,#0016a1 62.5px,#001ee0 63.5px,#0122ff 64.5px,#3813ff 100.5px,#8e00ff 146.5px,#7800d5 147.5px,#5c00a1 148.5px,#a000a0 200.5px,#a10077 238.5px,#a10058 287.5px,#780d47 288.5px)"></i>
<i style="left:796px;top:265px;width:287px;height:1px;background:linear-gradient(90deg,#0d2678 0.5px,#0026a1 1.5px,#0016a1 61.5px,#001ac0 62.5px,#0121ff 63.5px,#3613ff 98.5px,#8a00ff 144.5px,#7b00e0 145.5px,#5a00a1 146.5px,#a000a0 200.5px,#a10078 237.5px,#a10059 285.5px,#780d48 286.5px)"></i>
<i style="left:796px;top:266px;width:286px;height:1px;background:linear-gradient(90deg,#222634 0.5px,#0025a1 1.5px,#0015a1 61.5px,#0019c0 62.5px,#0121ff 63.5px,#3512ff 98.5px,#8700ff 143.5px,#7800e0 144.5px,#5800a1 145.5px,#a000a0 201.5px,#a10079 238.5px,#a1005a 284.5px,#780d49 285.5px)"></i>
<i style="left:797px;top:267px;width:284px;height:1px;background:linear-gradient(90deg,#15255d 0.5px,#0024a1 1.5px,#0015a1 61.5px,#0020ff 62.5px,#3312ff 96.5px,#8400ff 141.5px,#7500e0 142.5px,#5600a1 143.5px,#a000a0 201.5px,#a1007a 237.5px,#a1005c 282.5px,#780d49 283.5px)"></i>
<i style="left:798px;top:268px;width:282px;height:1px;background:linear-gradient(90deg,#042493 0.5px,#0024a1 1.5px,#0014a1 60.5px,#001fff 61.5px,#3112ff 94.5px,#8100ff 139.5px,#7300e0 140.5px,#5400a1 141.5px,#a000a0 201.5px,#a1007b 236.5px,#a1005d 280.5px,#780d4a 281.5px)"></i>
<i style="left:798px;top:269px;width:281px;height:1px;background:linear-gradient(90deg,#1e2541 0.5px,#0023a1 1.5px,#0014a1 60.5px,#001cea 61.5px,#011eff 62.5px,#3211ff 95.5px,#7e00ff 138.5px,#7000e0 139.5px,#5200a1 140.5px,#a000a0 202.5px,#a1007c 236.5px,#a1005e 279.5px,#780d4b 280.5px)"></i>
<i style="left:799px;top:270px;width:279px;height:1px;background:linear-gradient(90deg,#0d2478 0.5px,#0022a1 1.5px,#0013a1 59.5px,#001ae0 60.5px,#011eff 61.5px,#3011ff 93.5px,#7b00ff 136.5px,#6d00e0 137.5px,#5000a1 138.5px,#a000a0 202.5px,#a1007c 236.5px,#a10060 277.5px,#780d4c 278.5px)"></i>
<i style="left:799px;top:271px;width:278px;height:1px;background:linear-gradient(90deg,#222634 0.5px,#0022a1 1.5px,#0013a1 59.5px,#0018cb 60.5px,#011dff 61.5px,#2f10ff 93.5px,#7800ff 135.5px,#6b00e0 136.5px,#4e00a1 137.5px,#a000a0 203.5px,#a1007d 236.5px,#a10061 276.5px,#850853 277.5px)"></i>
<i style="left:800px;top:272px;width:277px;height:1px;background:linear-gradient(90deg,#15245d 0.5px,#0021a1 1.5px,#0013a1 58.5px,#0016c0 59.5px,#011dff 60.5px,#2d10ff 91.5px,#7500ff 133.5px,#6800e0 134.5px,#4c00a1 135.5px,#a000a0 203.5px,#a1007e 235.5px,#a10062 274.5px,#93045b 275.5px,#34222d 276.5px)"></i>
<i style="left:801px;top:273px;width:275px;height:1px;background:linear-gradient(90deg,#042193 0.5px,#0020a1 1.5px,#0012a1 57.5px,#0013ab 58.5px,#001cff 59.5px,#2c10ff 90.5px,#7200ff 131.5px,#6600e0 132.5px,#4a00a1 133.5px,#a000a0 203.5px,#a1007f 234.5px,#a10064 272.5px,#93045c 273.5px,#34222d 274.5px)"></i>
<i style="left:801px;top:274px;width:274px;height:1px;background:linear-gradient(90deg,#1e2541 0.5px,#0020a1 1.5px,#0012a1 58.5px,#001bff 59.5px,#2a0fff 89.5px,#6f00ff 130.5px,#6300e0 131.5px,#4800a1 132.5px,#a000a0 204.5px,#a10080 234.5px,#a10065 271.5px,#93045e 272.5px,#34222d 273.5px)"></i>
<i style="left:802px;top:275px;width:272px;height:1px;background:linear-gradient(90deg,#082185 0.5px,#001fa1 1.5px,#0011a1 57.5px,#0019ea 58.5px,#011aff 59.5px,#2b0fff 89.5px,#6c00ff 128.5px,#6100e0 129.5px,#4700a1 130.5px,#a000a0 204.5px,#a10080 234.5px,#a10067 269.5px,#93045f 270.5px,#34222d 271.5px)"></i>
<i style="left:802px;top:276px;width:271px;height:1px;background:linear-gradient(90deg,#222534 0.5px,#001fa1 1.5px,#0011a1 57.5px,#0017e0 58.5px,#011aff 59.5px,#290eff 88.5px,#6a00ff 127.5px,#5e00e0 128.5px,#4500a1 129.5px,#a000a0 205.5px,#a10081 234.5px,#a10068 268.5px,#930460 269.5px,#34222d 270.5px)"></i>
<i style="left:803px;top:277px;width:269px;height:1px;background:linear-gradient(90deg,#11226a 0.5px,#001ea1 1.5px,#0010a1 56.5px,#0014cb 57.5px,#0119ff 58.5px,#290eff 87.5px,#6700ff 125.5px,#5c00e0 126.5px,#4300a1 127.5px,#a000a0 205.5px,#a10082 233.5px,#a10069 266.5px,#930461 267.5px,#34222d 268.5px)"></i>
<i style="left:804px;top:278px;width:267px;height:1px;background:linear-gradient(90deg,#041f93 0.5px,#001da1 1.5px,#0010a1 55.5px,#0013c0 56.5px,#0119ff 57.5px,#270eff 85.5px,#6400ff 123.5px,#5900e0 124.5px,#4100a1 125.5px,#a000a0 205.5px,#a10083 232.5px,#a1006b 264.5px,#930463 265.5px,#34222e 266.5px)"></i>
<i style="left:804px;top:279px;width:266px;height:1px;background:linear-gradient(90deg,#15225d 0.5px,#001da1 1.5px,#0010a1 55.5px,#0010ab 56.5px,#0018ff 57.5px,#260dff 85.5px,#6200ff 122.5px,#5700e0 123.5px,#4000a1 124.5px,#a000a0 206.5px,#a10084 232.5px,#a1006c 263.5px,#930464 264.5px,#34222e 265.5px)"></i>
<i style="left:805px;top:280px;width:264px;height:1px;background:linear-gradient(90deg,#081f85 0.5px,#001ca1 1.5px,#000fa1 55.5px,#0018ff 56.5px,#240dff 83.5px,#5f00ff 120.5px,#5900ea 121.5px,#3e00a1 122.5px,#a000a0 206.5px,#a10085 232.5px,#a1006e 261.5px,#930465 262.5px,#34222e 263.5px)"></i>
<i style="left:805px;top:281px;width:263px;height:1px;background:linear-gradient(90deg,#222534 0.5px,#001ca1 1.5px,#000fa1 55.5px,#0015ea 56.5px,#0117ff 57.5px,#5d00ff 119.5px,#5a00f5 120.5px,#4000ab 121.5px,#3d00a1 122.5px,#a000a0 207.5px,#a10070 260.5px,#930467 261.5px,#34222e 262.5px)"></i>
<i style="left:806px;top:282px;width:261px;height:1px;background:linear-gradient(90deg,#11206a 0.5px,#001ba1 1.5px,#000ea1 54.5px,#0014e0 55.5px,#0116ff 56.5px,#5a00ff 117.5px,#5800f5 118.5px,#3f00ab 119.5px,#3c00a1 120.5px,#a000a0 207.5px,#a10071 258.5px,#930468 259.5px,#34222e 260.5px)"></i>
<i style="left:807px;top:283px;width:259px;height:1px;background:linear-gradient(90deg,#041c93 0.5px,#001ba1 1.5px,#000ea1 53.5px,#0012d5 54.5px,#0116ff 55.5px,#5800ff 115.5px,#5600f5 116.5px,#3d00ab 117.5px,#3a00a1 118.5px,#a000a0 207.5px,#a10072 257.5px,#411e37 258.5px)"></i>
<i style="left:807px;top:284px;width:258px;height:1px;background:linear-gradient(90deg,#1e2341 0.5px,#001aa1 1.5px,#000ea1 53.5px,#0010c0 54.5px,#0115ff 55.5px,#50f 114.5px,#5300f5 115.5px,#3b00ab 116.5px,#3900a1 117.5px,#a1009f 209.5px,#a10074 256.5px,#4f1940 257.5px)"></i>
<i style="left:808px;top:285px;width:256px;height:1px;background:linear-gradient(90deg,#0d1e78 0.5px,#0019a1 1.5px,#000da1 52.5px,#000fb6 53.5px,#0015ff 54.5px,#5300ff 112.5px,#5100f5 113.5px,#3a00ab 114.5px,#3700a1 115.5px,#a1009f 209.5px,#a10075 254.5px,#4f1940 255.5px)"></i>
<i style="left:808px;top:286px;width:255px;height:1px;background:linear-gradient(90deg,#222534 0.5px,#041b93 1.5px,#0019a1 2.5px,#000da1 53.5px,#0014ff 54.5px,#5000ff 111.5px,#4f00f5 112.5px,#3800ab 113.5px,#3600a1 114.5px,#a000a0 209.5px,#a10077 253.5px,#4f1941 254.5px)"></i>
<i style="left:809px;top:287px;width:253px;height:1px;background:linear-gradient(90deg,#15205d 0.5px,#0018a1 1.5px,#000da1 52.5px,#0013f5 53.5px,#0113ff 54.5px,#4e00ff 109.5px,#4c00f5 110.5px,#3600ab 111.5px,#3400a1 112.5px,#a000a0 209.5px,#a10078 251.5px,#4f1941 252.5px)"></i>
<i style="left:810px;top:288px;width:251px;height:1px;background:linear-gradient(90deg,#081b85 0.5px,#0018a1 1.5px,#000ca1 51.5px,#0011e0 52.5px,#0113ff 53.5px,#4c00ff 107.5px,#4a00f5 108.5px,#3500ab 109.5px,#3300a1 110.5px,#a000a0 209.5px,#a1007a 249.5px,#4f1942 250.5px)"></i>
<i style="left:810px;top:289px;width:250px;height:1px;background:linear-gradient(90deg,#1e2341 0.5px,#0017a1 1.5px,#000ca1 51.5px,#0010d5 52.5px,#0112ff 53.5px,#4a00ff 106.5px,#4800f5 107.5px,#3300ab 108.5px,#3100a1 109.5px,#a000a0 210.5px,#a1007c 248.5px,#4f1942 249.5px)"></i>
<i style="left:811px;top:290px;width:248px;height:1px;background:linear-gradient(90deg,#111e6a 0.5px,#0017a1 1.5px,#000ca1 50.5px,#000ec0 51.5px,#0112ff 52.5px,#4700ff 104.5px,#4600f5 105.5px,#3200ab 106.5px,#3000a1 107.5px,#a000a0 210.5px,#a1007e 246.5px,#4f1943 247.5px)"></i>
<i style="left:811px;top:291px;width:247px;height:1px;background:linear-gradient(90deg,#222434 0.5px,#041893 1.5px,#0016a1 2.5px,#000ba1 50.5px,#000db6 51.5px,#01f 52.5px,#4500ff 103.5px,#4400f5 104.5px,#3000ab 105.5px,#2e00a1 106.5px,#a000a0 211.5px,#a1007f 245.5px,#4f1943 246.5px)"></i>
<i style="left:812px;top:292px;width:245px;height:1px;background:linear-gradient(90deg,#19214f 0.5px,#0016a1 1.5px,#000ba1 50.5px,#01f 51.5px,#4300ff 101.5px,#4200f5 102.5px,#2f00ab 103.5px,#2d00a1 104.5px,#a000a0 211.5px,#a10081 243.5px,#4f1944 244.5px)"></i>
<i style="left:813px;top:293px;width:243px;height:1px;background:linear-gradient(90deg,#081985 0.5px,#0015a1 1.5px,#000ba1 49.5px,#0010f5 50.5px,#0110ff 51.5px,#4100ff 99.5px,#4000f5 100.5px,#2d00ab 101.5px,#2c00a1 102.5px,#a000a0 211.5px,#a10083 241.5px,#4f1945 242.5px)"></i>
<i style="left:813px;top:294px;width:242px;height:1px;background:linear-gradient(90deg,#222434 0.5px,#0015a1 1.5px,#000aa1 49.5px,#000ee0 50.5px,#0110ff 51.5px,#3f00ff 98.5px,#3e00f5 99.5px,#2c00ab 100.5px,#2a00a1 101.5px,#a000a0 212.5px,#a10085 240.5px,#4f1945 241.5px)"></i>
<i style="left:814px;top:295px;width:240px;height:1px;background:linear-gradient(90deg,#111c6a 0.5px,#0014a1 1.5px,#000aa1 48.5px,#000dd5 49.5px,#010fff 50.5px,#3d00ff 96.5px,#3c00f5 97.5px,#2b00ab 98.5px,#2900a1 99.5px,#a000a0 212.5px,#a10086 238.5px,#6a115b 239.5px)"></i>
<i style="left:815px;top:296px;width:238px;height:1px;background:linear-gradient(90deg,#041693 0.5px,#0014a1 1.5px,#000aa1 47.5px,#000bc0 48.5px,#010fff 49.5px,#3b00ff 94.5px,#3a00f5 95.5px,#2900ab 96.5px,#2800a1 97.5px,#a000a0 212.5px,#a10088 236.5px,#780d67 237.5px)"></i>
<i style="left:815px;top:297px;width:237px;height:1px;background:linear-gradient(90deg,#1e2241 0.5px,#0014a1 1.5px,#0009a1 47.5px,#000bc0 48.5px,#000eff 49.5px,#3a00ff 94.5px,#2d00c0 95.5px,#2600a1 96.5px,#a000a0 213.5px,#a1008a 235.5px,#780d68 236.5px)"></i>
<i style="left:816px;top:298px;width:235px;height:1px;background:linear-gradient(90deg,#111c6a 0.5px,#0013a1 1.5px,#0009a1 47.5px,#000eff 48.5px,#3800ff 92.5px,#2b00c0 93.5px,#2500a1 94.5px,#a000a0 213.5px,#a1008c 233.5px,#780d69 234.5px)"></i>
<i style="left:817px;top:299px;width:233px;height:1px;background:linear-gradient(90deg,#041593 0.5px,#0012a1 1.5px,#0009a1 46.5px,#000eff 47.5px,#3600ff 90.5px,#2a00c0 91.5px,#2400a1 92.5px,#a000a0 213.5px,#a1008e 231.5px,#780d6b 232.5px)"></i>
<i style="left:817px;top:300px;width:232px;height:1px;background:linear-gradient(90deg,#191f4f 0.5px,#0012a1 1.5px,#0008a1 46.5px,#000ce0 47.5px,#010dff 48.5px,#3400ff 89.5px,#2800c0 90.5px,#2300a1 91.5px,#a000a0 214.5px,#a10090 230.5px,#780d6c 231.5px)"></i>
<i style="left:818px;top:301px;width:230px;height:1px;background:linear-gradient(90deg,#0d1978 0.5px,#0012a1 1.5px,#0008a1 45.5px,#000be0 46.5px,#010cff 47.5px,#3200ff 87.5px,#2700c0 88.5px,#2100a1 89.5px,#5a00a1 149.5px,#a000a0 214.5px,#a10092 228.5px,#780d6d 229.5px)"></i>
<i style="left:818px;top:302px;width:229px;height:1px;background:linear-gradient(90deg,#222434 0.5px,#041493 1.5px,#0011a1 2.5px,#0008a1 45.5px,#0009c0 46.5px,#010cff 47.5px,#3000ff 86.5px,#2500c0 87.5px,#2000a1 88.5px,#5a00a1 149.5px,#a000a1 215.5px,#a10094 227.5px,#780d6f 228.5px)"></i>
<i style="left:819px;top:303px;width:227px;height:1px;background:linear-gradient(90deg,#191f4f 0.5px,#0011a1 1.5px,#0008a1 44.5px,#0009c0 45.5px,#000cff 46.5px,#2f00ff 84.5px,#2400c0 85.5px,#1f00a1 86.5px,#5900a1 148.5px,#a000a1 215.5px,#a10096 225.5px,#780d70 226.5px)"></i>
<i style="left:820px;top:304px;width:225px;height:1px;background:linear-gradient(90deg,#0d1878 0.5px,#0010a1 1.5px,#0007a1 44.5px,#000bff 45.5px,#2d00ff 82.5px,#2300c0 83.5px,#1e00a1 84.5px,#5800a1 147.5px,#a000a1 215.5px,#a10098 223.5px,#780d71 224.5px)"></i>
<i style="left:820px;top:305px;width:224px;height:1px;background:linear-gradient(90deg,#222434 0.5px,#0010a1 1.5px,#0007a1 44.5px,#000bff 45.5px,#2b00ff 81.5px,#2100c0 82.5px,#1d00a1 83.5px,#5800a1 147.5px,#a000a1 216.5px,#a1009a 222.5px,#780d73 223.5px)"></i>
<i style="left:821px;top:306px;width:222px;height:1px;background:linear-gradient(90deg,#151c5d 0.5px,#000fa1 1.5px,#0007a1 43.5px,#0009e0 44.5px,#010aff 45.5px,#2900ff 79.5px,#2000c0 80.5px,#1c00a1 81.5px,#5700a1 146.5px,#a000a1 216.5px,#a1009c 220.5px,#780d74 221.5px)"></i>
<i style="left:822px;top:307px;width:220px;height:1px;background:linear-gradient(90deg,#081485 0.5px,#000fa1 1.5px,#0007a1 42.5px,#0009e0 43.5px,#010aff 44.5px,#2700ff 77.5px,#1f00c0 78.5px,#1b00a1 79.5px,#5600a1 145.5px,#9f00a1 215.5px,#a1009f 218.5px,#930490 219.5px)"></i>
<i style="left:822px;top:308px;width:220px;height:1px;background:linear-gradient(90deg,#222334 0.5px,#000fa1 1.5px,#0006a1 42.5px,#0007c0 43.5px,#0109ff 44.5px,#2600ff 76.5px,#1d00c0 77.5px,#1900a1 78.5px,#5600a1 145.5px,#a000a1 217.5px,#930492 218.5px,#342233 219.5px)"></i>
<i style="left:823px;top:309px;width:218px;height:1px;background:linear-gradient(90deg,#11196a 0.5px,#000ea1 1.5px,#0006a1 41.5px,#0007c0 42.5px,#0009ff 43.5px,#2400ff 74.5px,#1c00c0 75.5px,#1800a1 76.5px,#5400a1 143.5px,#9e00a1 215.5px,#920493 216.5px,#342234 217.5px)"></i>
<i style="left:824px;top:310px;width:216px;height:1px;background:linear-gradient(90deg,#041193 0.5px,#000ea1 1.5px,#0006a1 40.5px,#0006ab 41.5px,#0009ff 42.5px,#20f 72.5px,#1b00c0 73.5px,#1700a1 74.5px,#5300a1 141.5px,#9c00a1 213.5px,#900493 214.5px,#332234 215.5px)"></i>
<i style="left:824px;top:311px;width:215px;height:1px;background:linear-gradient(90deg,#1e2141 0.5px,#000da1 1.5px,#0005a1 41.5px,#0008ff 42.5px,#2100ff 71.5px,#1a00c0 72.5px,#1600a1 73.5px,#5100a1 140.5px,#9a00a1 212.5px,#8e0493 213.5px,#332234 214.5px)"></i>
<i style="left:825px;top:312px;width:213px;height:1px;background:linear-gradient(90deg,#151b5d 0.5px,#000da1 1.5px,#0005a1 40.5px,#0007ea 41.5px,#0108ff 42.5px,#1f00ff 69.5px,#1800c0 70.5px,#1500a1 71.5px,#4f00a1 138.5px,#9800a1 210.5px,#8c0493 211.5px,#332234 212.5px)"></i>
<i style="left:826px;top:313px;width:211px;height:1px;background:linear-gradient(90deg,#081285 0.5px,#000ca1 1.5px,#0005a1 39.5px,#0007e0 40.5px,#0107ff 41.5px,#1e00ff 67.5px,#1a00d5 68.5px,#1400a1 69.5px,#4e00a1 136.5px,#9600a1 208.5px,#8a0493 209.5px,#332234 210.5px)"></i>
<i style="left:826px;top:314px;width:210px;height:1px;background:linear-gradient(90deg,#222334 0.5px,#000ca1 1.5px,#0005a1 39.5px,#0006cb 40.5px,#0107ff 41.5px,#1c00ff 66.5px,#1a00e0 67.5px,#1300a1 68.5px,#4c00a1 134.5px,#9400a1 207.5px,#890493 208.5px,#322234 209.5px)"></i>
<i style="left:827px;top:315px;width:208px;height:1px;background:linear-gradient(90deg,#191d4f 0.5px,#000ca1 1.5px,#0005a1 38.5px,#0005c0 39.5px,#0107ff 40.5px,#1a00ff 64.5px,#1800e0 65.5px,#1200a1 66.5px,#4a00a1 132.5px,#9200a1 205.5px,#870493 206.5px,#322234 207.5px)"></i>
<i style="left:828px;top:316px;width:206px;height:1px;background:linear-gradient(90deg,#0d1478 0.5px,#000ba1 1.5px,#0004a1 37.5px,#0004ab 38.5px,#0006ff 39.5px,#1900ff 62.5px,#1700e0 63.5px,#1100a1 64.5px,#4900a1 130.5px,#9000a1 203.5px,#850493 204.5px,#322234 205.5px)"></i>
<i style="left:828px;top:317px;width:205px;height:1px;background:linear-gradient(90deg,#222334 0.5px,#040e93 1.5px,#000ba1 2.5px,#0004a1 38.5px,#0006ff 39.5px,#1700ff 61.5px,#1600e0 62.5px,#1000a1 63.5px,#4700a1 129.5px,#8e00a1 202.5px,#830493 203.5px,#322234 204.5px)"></i>
<i style="left:829px;top:318px;width:203px;height:1px;background:linear-gradient(90deg,#191d4f 0.5px,#000ba1 1.5px,#0004a1 37.5px,#0005ea 38.5px,#0105ff 39.5px,#1600ff 59.5px,#1400e0 60.5px,#0f00a1 61.5px,#4600a1 127.5px,#8c00a1 200.5px,#810493 201.5px,#322234 202.5px)"></i>
<i style="left:830px;top:319px;width:201px;height:1px;background:linear-gradient(90deg,#11176a 0.5px,#000aa1 1.5px,#0004a1 36.5px,#0005e0 37.5px,#0105ff 38.5px,#1500ff 57.5px,#1300e0 58.5px,#0e00a1 59.5px,#4400a1 125.5px,#8b00a1 199.5px,#48194f 200.5px)"></i>
<i style="left:831px;top:320px;width:199px;height:1px;background:linear-gradient(90deg,#040d93 0.5px,#000aa1 1.5px,#0003a1 35.5px,#0004cb 36.5px,#0105ff 37.5px,#1300ff 55.5px,#1200e0 56.5px,#0d00a1 57.5px,#4300a1 123.5px,#8900a1 197.5px,#47194f 198.5px)"></i>
<i style="left:831px;top:321px;width:198px;height:1px;background:linear-gradient(90deg,#1e2041 0.5px,#0009a1 1.5px,#0003a1 35.5px,#0004c0 36.5px,#0105ff 37.5px,#1200ff 54.5px,#1100e0 55.5px,#0d00a1 56.5px,#4200a1 122.5px,#8700a1 196.5px,#47194f 197.5px)"></i>
<i style="left:832px;top:322px;width:196px;height:1px;background:linear-gradient(90deg,#15195d 0.5px,#0009a1 1.5px,#0003a1 34.5px,#0003ab 35.5px,#0004ff 36.5px,#1000ff 52.5px,#0f00e0 53.5px,#0c00a1 54.5px,#4000a1 120.5px,#8500a1 194.5px,#46194f 195.5px)"></i>
<i style="left:833px;top:323px;width:194px;height:1px;background:linear-gradient(90deg,#080f85 0.5px,#0009a1 1.5px,#0003a1 34.5px,#0004ff 35.5px,#0f00ff 50.5px,#0e00e0 51.5px,#0b00a1 52.5px,#3f00a1 118.5px,#8300a1 192.5px,#45194f 193.5px)"></i>
<i style="left:833px;top:324px;width:193px;height:1px;background:linear-gradient(90deg,#222334 0.5px,#0008a1 1.5px,#0002a1 34.5px,#0004f5 35.5px,#0103ff 36.5px,#0e00ff 49.5px,#0d00e0 50.5px,#0a00a1 51.5px,#3d00a1 116.5px,#8100a1 191.5px,#45194f 192.5px)"></i>
<i style="left:834px;top:325px;width:191px;height:1px;background:linear-gradient(90deg,#15195d 0.5px,#0008a1 1.5px,#0002a1 33.5px,#0003e0 34.5px,#0103ff 35.5px,#0c00ff 47.5px,#0c00e0 48.5px,#0900a1 49.5px,#3b00a1 114.5px,#8000a1 189.5px,#44194f 190.5px)"></i>
<i style="left:835px;top:326px;width:189px;height:1px;background:linear-gradient(90deg,#080e85 0.5px,#0008a1 1.5px,#0002a1 32.5px,#0003d5 33.5px,#0103ff 34.5px,#0b00ff 45.5px,#0b00e0 46.5px,#0800a1 47.5px,#3a00a1 112.5px,#7e00a1 187.5px,#44194f 188.5px)"></i>
<i style="left:835px;top:327px;width:188px;height:1px;background:linear-gradient(90deg,#222334 0.5px,#040b93 1.5px,#0007a1 2.5px,#0002a1 32.5px,#0002c0 33.5px,#0103ff 34.5px,#0a00ff 44.5px,#0a00e0 45.5px,#0800a1 46.5px,#3900a1 111.5px,#7c00a1 186.5px,#43194f 187.5px)"></i>
<i style="left:836px;top:328px;width:186px;height:1px;background:linear-gradient(90deg,#191c4f 0.5px,#0007a1 1.5px,#0002a1 31.5px,#0002b6 32.5px,#0002ff 33.5px,#0102ff 34.5px,#0900ff 42.5px,#0800e0 43.5px,#0700a1 44.5px,#3800a1 109.5px,#7a00a1 184.5px,#42194f 185.5px)"></i>
<i style="left:837px;top:329px;width:184px;height:1px;background:linear-gradient(90deg,#0d1178 0.5px,#0007a1 1.5px,#0001a1 31.5px,#0002ff 32.5px,#0700ff 40.5px,#0800ea 41.5px,#0600a1 42.5px,#3600a1 106.5px,#7900a1 182.5px,#42194f 183.5px)"></i>
<i style="left:837px;top:330px;width:183px;height:1px;background:linear-gradient(90deg,#222334 0.5px,#040a93 1.5px,#0006a1 2.5px,#0001a1 31.5px,#0002f5 32.5px,#0102ff 33.5px,#0600ff 39.5px,#0700f5 40.5px,#0600ab 41.5px,#0600a1 42.5px,#3500a1 106.5px,#7700a1 181.5px,#41194f 182.5px)"></i>
<i style="left:838px;top:331px;width:181px;height:1px;background:linear-gradient(90deg,#1e1f41 0.5px,#0006a1 1.5px,#0001a1 30.5px,#0001e0 31.5px,#0101ff 32.5px,#0500ff 37.5px,#0600f5 38.5px,#0500ab 39.5px,#0500a1 40.5px,#3400a1 104.5px,#7500a1 179.5px,#5b0d78 180.5px)"></i>
<i style="left:839px;top:332px;width:179px;height:1px;background:linear-gradient(90deg,#15185d 0.5px,#0006a1 1.5px,#0001a1 29.5px,#0001d5 30.5px,#0101ff 31.5px,#0400ff 35.5px,#0500f5 36.5px,#0400ab 37.5px,#0400a1 38.5px,#3200a1 101.5px,#7400a1 177.5px,#5a0d78 178.5px)"></i>
<i style="left:840px;top:333px;width:177px;height:1px;background:linear-gradient(90deg,#0d1078 0.5px,#0005a1 1.5px,#0001a1 28.5px,#0001c0 29.5px,#0101ff 30.5px,#0300ff 33.5px,#0400f5 34.5px,#0300ab 35.5px,#0400a1 36.5px,#3100a1 99.5px,#7200a1 175.5px,#590d78 176.5px)"></i>
<i style="left:840px;top:334px;width:176px;height:1px;background:linear-gradient(90deg,#222234 0.5px,#040993 1.5px,#0005a1 2.5px,#0001a1 28.5px,#0001b6 29.5px,#0001ff 30.5px,#0200ff 32.5px,#0300f5 33.5px,#0300ab 34.5px,#0300a1 35.5px,#3000a1 98.5px,#7000a1 174.5px,#580d78 175.5px)"></i>
<i style="left:841px;top:335px;width:174px;height:1px;background:linear-gradient(90deg,#1e1f41 0.5px,#0005a1 1.5px,#0000a1 28.5px,#00f 29.5px,#0100ff 30.5px,#0200f5 31.5px,#0200ab 32.5px,#0200a1 33.5px,#2e00a1 95.5px,#6f00a1 172.5px,#570d78 173.5px)"></i>
<i style="left:842px;top:336px;width:172px;height:1px;background:linear-gradient(90deg,#191b4f 0.5px,#0004a1 1.5px,#0000a1 27.5px,#0000f5 28.5px,#0100f5 29.5px,#0100ab 30.5px,#0200a1 31.5px,#2d00a1 93.5px,#6d00a1 170.5px,#560d78 171.5px)"></i>
<i style="left:843px;top:337px;width:170px;height:1px;background:linear-gradient(90deg,#0d0f78 0.5px,#0004a1 1.5px,#0000a1 26.5px,#0000d5 27.5px,#0100ab 28.5px,#0100a1 29.5px,#2c00a1 91.5px,#6c00a1 168.5px,#550d78 169.5px)"></i>
<i style="left:844px;top:338px;width:168px;height:1px;background:linear-gradient(90deg,#040893 0.5px,#0004a1 1.5px,#0000a1 26.5px,#0600a1 37.5px,#6a00a1 166.5px,#540d78 167.5px)"></i>
<i style="left:844px;top:339px;width:167px;height:1px;background:linear-gradient(90deg,#222234 0.5px,#0003a1 1.5px,#0000a1 26.5px,#0a00a1 43.5px,#6800a1 165.5px,#530d78 166.5px)"></i>
<i style="left:845px;top:340px;width:165px;height:1px;background:linear-gradient(90deg,#191a4f 0.5px,#0003a1 1.5px,#0000a1 25.5px,#0a00a1 42.5px,#6700a1 163.5px,#520d78 164.5px)"></i>
<i style="left:846px;top:341px;width:163px;height:1px;background:linear-gradient(90deg,#0d0f78 0.5px,#0003a1 1.5px,#0002a1 9.5px,#0000a1 25.5px,#1000a1 51.5px,#6500a1 161.5px,#510d78 162.5px)"></i>
<i style="left:847px;top:342px;width:161px;height:1px;background:linear-gradient(90deg,#080a85 0.5px,#0002a1 1.5px,#0000a1 24.5px,#0a00a1 41.5px,#6400a1 159.5px,#500d78 160.5px)"></i>
<i style="left:847px;top:343px;width:161px;height:1px;background:linear-gradient(90deg,#222234 0.5px,#040693 1.5px,#0002a1 2.5px,#0000a1 24.5px,#0a00a1 42.5px,#6200a1 158.5px,#5c0493 159.5px,#2d2234 160.5px)"></i>
<i style="left:848px;top:344px;width:159px;height:1px;background:linear-gradient(90deg,#191a4f 0.5px,#0002a1 1.5px,#0000a1 23.5px,#0a00a1 40.5px,#6100a1 156.5px,#5b0493 157.5px,#2d2234 158.5px)"></i>
<i style="left:849px;top:345px;width:157px;height:1px;background:linear-gradient(90deg,#11126a 0.5px,#0002a1 1.5px,#0000a1 22.5px,#0a00a1 40.5px,#6000a1 154.5px,#5a0493 155.5px,#2d2234 156.5px)"></i>
<i style="left:850px;top:346px;width:155px;height:1px;background:linear-gradient(90deg,#080a85 0.5px,#0001a1 1.5px,#0000a1 21.5px,#0a00a1 39.5px,#5e00a1 152.5px,#590493 153.5px,#2c2234 154.5px)"></i>
<i style="left:850px;top:347px;width:154px;height:1px;background:linear-gradient(90deg,#222234 0.5px,#040593 1.5px,#0001a1 2.5px,#0001a1 3.5px,#0000a1 22.5px,#0b00a1 41.5px,#5d00a1 151.5px,#570493 152.5px,#2c2234 153.5px)"></i>
<i style="left:851px;top:348px;width:152px;height:1px;background:linear-gradient(90deg,#191a4f 0.5px,#0001a1 1.5px,#0000a1 21.5px,#0a00a1 39.5px,#5b00a1 149.5px,#560493 150.5px,#2c2234 151.5px)"></i>
<i style="left:852px;top:349px;width:150px;height:1px;background:linear-gradient(90deg,#15155d 0.5px,#0001a1 1.5px,#0000a1 20.5px,#0a00a1 38.5px,#5a00a1 147.5px,#550493 148.5px,#2c2234 149.5px)"></i>
<i style="left:853px;top:350px;width:148px;height:1px;background:linear-gradient(90deg,#0d0d78 0.5px,#0000a1 1.5px,#0000a1 19.5px,#0b00a1 38.5px,#5900a1 145.5px,#540493 146.5px,#2c2234 147.5px)"></i>
<i style="left:854px;top:351px;width:146px;height:1px;background:linear-gradient(90deg,#040493 0.5px,#0000a1 1.5px,#0600a1 30.5px,#5700a1 143.5px,#520493 144.5px,#2c2234 145.5px)"></i>
<i style="left:854px;top:352px;width:145px;height:1px;background:linear-gradient(90deg,#222234 0.5px,#040493 1.5px,#0000a1 2.5px,#0000a1 19.5px,#0b00a1 38.5px,#5600a1 142.5px,#510493 143.5px,#2b2234 144.5px)"></i>
<i style="left:855px;top:353px;width:143px;height:1px;background:linear-gradient(90deg,#1e1e41 0.5px,#0000a1 1.5px,#0000a1 18.5px,#0b00a1 37.5px,#5500a1 140.5px,#500493 141.5px,#2b2234 142.5px)"></i>
<i style="left:856px;top:354px;width:141px;height:1px;background:linear-gradient(90deg,#19194f 0.5px,#0000a1 1.5px,#0000a1 17.5px,#0b00a1 37.5px,#5400a1 139.5px,#2b2234 140.5px)"></i>
<i style="left:857px;top:355px;width:139px;height:1px;background:linear-gradient(90deg,#11116a 0.5px,#0000a1 1.5px,#0000a1 16.5px,#0c00a1 37.5px,#5300a1 137.5px,#35194f 138.5px)"></i>
<i style="left:858px;top:356px;width:137px;height:1px;background:linear-gradient(90deg,#0d0d78 0.5px,#0000a1 1.5px,#0000a1 15.5px,#0b00a1 36.5px,#5100a1 135.5px,#35194f 136.5px)"></i>
<i style="left:859px;top:357px;width:135px;height:1px;background:linear-gradient(90deg,#080885 0.5px,#0000a1 1.5px,#0000a1 15.5px,#0c00a1 36.5px,#5000a1 133.5px,#34194f 134.5px)"></i>
<i style="left:859px;top:358px;width:134px;height:1px;background:linear-gradient(90deg,#222234 0.5px,#040493 1.5px,#0000a1 2.5px,#0000a1 15.5px,#0c00a1 37.5px,#4f00a1 132.5px,#34194f 133.5px)"></i>
<i style="left:860px;top:359px;width:132px;height:1px;background:linear-gradient(90deg,#222234 0.5px,#0000a1 1.5px,#0000a1 14.5px,#0c00a1 36.5px,#4e00a1 130.5px,#33194f 131.5px)"></i>
<i style="left:861px;top:360px;width:130px;height:1px;background:linear-gradient(90deg,#19194f 0.5px,#0000a1 1.5px,#0000a1 9.5px,#1700a1 52.5px,#4c00a1 128.5px,#33194f 129.5px)"></i>
<i style="left:862px;top:361px;width:128px;height:1px;background:linear-gradient(90deg,#19194f 0.5px,#0000a1 1.5px,#0800a1 28.5px,#4b00a1 126.5px,#33194f 127.5px)"></i>
<i style="left:863px;top:362px;width:126px;height:1px;background:linear-gradient(90deg,#15155d 0.5px,#0000a1 1.5px,#0e00a1 36.5px,#4a00a1 124.5px,#32194f 125.5px)"></i>
<i style="left:864px;top:363px;width:124px;height:1px;background:linear-gradient(90deg,#0d0d78 0.5px,#0000a1 1.5px,#0e00a1 36.5px,#4900a1 122.5px,#32194f 123.5px)"></i>
<i style="left:865px;top:364px;width:122px;height:1px;background:linear-gradient(90deg,#0d0d78 0.5px,#0000a1 1.5px,#0f00a1 36.5px,#4800a1 120.5px,#31194f 121.5px)"></i>
<i style="left:866px;top:365px;width:120px;height:1px;background:linear-gradient(90deg,#0d0d78 0.5px,#0000a1 1.5px,#0f00a1 36.5px,#4600a1 118.5px,#31194f 119.5px)"></i>
<i style="left:867px;top:366px;width:118px;height:1px;background:linear-gradient(90deg,#040493 0.5px,#0000a1 1.5px,#0f00a1 36.5px,#4500a1 116.5px,#34155d 117.5px)"></i>
<i style="left:867px;top:367px;width:117px;height:1px;background:linear-gradient(90deg,#222234 0.5px,#040493 1.5px,#0000a1 2.5px,#1000a1 38.5px,#4400a1 115.5px,#3b0d78 116.5px)"></i>
<i style="left:868px;top:368px;width:115px;height:1px;background:linear-gradient(90deg,#222234 0.5px,#040493 1.5px,#0000a1 2.5px,#1100a1 38.5px,#4300a1 113.5px,#3a0d78 114.5px)"></i>
<i style="left:869px;top:369px;width:113px;height:1px;background:linear-gradient(90deg,#222234 0.5px,#0000a1 1.5px,#1100a1 37.5px,#4200a1 111.5px,#390d78 112.5px)"></i>
<i style="left:870px;top:370px;width:111px;height:1px;background:linear-gradient(90deg,#19194f 0.5px,#0000a1 1.5px,#1100a1 37.5px,#4100a1 109.5px,#380d78 110.5px)"></i>
<i style="left:871px;top:371px;width:109px;height:1px;background:linear-gradient(90deg,#19194f 0.5px,#0000a1 1.5px,#1200a1 38.5px,#4000a1 107.5px,#380d78 108.5px)"></i>
<i style="left:872px;top:372px;width:107px;height:1px;background:linear-gradient(90deg,#1e1e41 0.5px,#040493 1.5px,#0000a1 2.5px,#3f00a1 105.5px,#370d78 106.5px)"></i>
<i style="left:873px;top:373px;width:105px;height:1px;background:linear-gradient(90deg,#222234 0.5px,#040493 1.5px,#0000a1 2.5px,#3e00a1 103.5px,#360d78 104.5px)"></i>
<i style="left:874px;top:374px;width:103px;height:1px;background:linear-gradient(90deg,#222234 0.5px,#040493 1.5px,#0000a1 2.5px,#3c00a1 101.5px,#350d78 102.5px)"></i>
<i style="left:875px;top:375px;width:101px;height:1px;background:linear-gradient(90deg,#222234 0.5px,#040493 1.5px,#0000a1 2.5px,#3b00a1 99.5px,#350d78 100.5px)"></i>
<i style="left:876px;top:376px;width:99px;height:1px;background:linear-gradient(90deg,#222234 0.5px,#040493 1.5px,#0100a1 2.5px,#3a00a1 97.5px,#340d78 98.5px)"></i>
<i style="left:877px;top:377px;width:97px;height:1px;background:linear-gradient(90deg,#222234 0.5px,#050493 1.5px,#0100a1 2.5px,#3900a1 95.5px,#330d78 96.5px)"></i>
<i style="left:878px;top:378px;width:95px;height:1px;background:linear-gradient(90deg,#222234 0.5px,#050493 1.5px,#0100a1 2.5px,#3800a1 93.5px,#350885 94.5px)"></i>
<i style="left:879px;top:379px;width:94px;height:1px;background:linear-gradient(90deg,#222234 0.5px,#050493 1.5px,#0200a1 2.5px,#3700a1 91.5px,#360493 92.5px,#282234 93.5px)"></i>
<i style="left:880px;top:380px;width:92px;height:1px;background:linear-gradient(90deg,#222234 0.5px,#060493 1.5px,#0200a1 2.5px,#3600a1 89.5px,#350493 90.5px,#282234 91.5px)"></i>
<i style="left:881px;top:381px;width:90px;height:1px;background:linear-gradient(90deg,#222234 0.5px,#060493 1.5px,#0300a1 2.5px,#3500a1 87.5px,#340493 88.5px,#282234 89.5px)"></i>
<i style="left:882px;top:382px;width:88px;height:1px;background:linear-gradient(90deg,#222234 0.5px,#0e0d78 1.5px,#0300a1 2.5px,#3400a1 85.5px,#330493 86.5px,#282234 87.5px)"></i>
<i style="left:884px;top:383px;width:85px;height:1px;background:linear-gradient(90deg,#0f0d78 0.5px,#0300a1 1.5px,#3300a1 82.5px,#320493 83.5px,#282234 84.5px)"></i>
<i style="left:885px;top:384px;width:83px;height:1px;background:linear-gradient(90deg,#13116a 0.5px,#0400a1 1.5px,#3200a1 80.5px,#320493 81.5px,#282234 82.5px)"></i>
<i style="left:886px;top:385px;width:81px;height:1px;background:linear-gradient(90deg,#1b194f 0.5px,#0400a1 1.5px,#3100a1 78.5px,#310493 79.5px,#272234 80.5px)"></i>
<i style="left:887px;top:386px;width:79px;height:1px;background:linear-gradient(90deg,#1b194f 0.5px,#0500a1 1.5px,#3000a1 76.5px,#300493 77.5px,#272234 78.5px)"></i>
<i style="left:888px;top:387px;width:77px;height:1px;background:linear-gradient(90deg,#1b194f 0.5px,#0500a1 1.5px,#3000a1 74.5px,#2f0493 75.5px,#272234 76.5px)"></i>
<i style="left:889px;top:388px;width:75px;height:1px;background:linear-gradient(90deg,#1b194f 0.5px,#090493 1.5px,#0600a1 2.5px,#2f00a1 72.5px,#2e0493 73.5px,#272234 74.5px)"></i>
<i style="left:890px;top:389px;width:73px;height:1px;background:linear-gradient(90deg,#222234 0.5px,#090493 1.5px,#0600a1 2.5px,#2e00a1 70.5px,#2d0493 71.5px,#272234 72.5px)"></i>
<i style="left:891px;top:390px;width:71px;height:1px;background:linear-gradient(90deg,#222234 0.5px,#0d0885 1.5px,#0700a1 2.5px,#2d00a1 69.5px,#281e41 70.5px)"></i>
<i style="left:893px;top:391px;width:68px;height:1px;background:linear-gradient(90deg,#110d78 0.5px,#0700a1 1.5px,#2d00a1 66.5px,#28194f 67.5px)"></i>
<i style="left:894px;top:392px;width:66px;height:1px;background:linear-gradient(90deg,#18155d 0.5px,#0700a1 1.5px,#2c00a1 64.5px,#28194f 65.5px)"></i>
<i style="left:895px;top:393px;width:64px;height:1px;background:linear-gradient(90deg,#1c194f 0.5px,#0800a1 1.5px,#0900a1 3.5px,#2b00a1 62.5px,#28194f 63.5px)"></i>
<i style="left:896px;top:394px;width:62px;height:1px;background:linear-gradient(90deg,#232234 0.5px,#0c0493 1.5px,#0900a1 2.5px,#2a00a1 60.5px,#27194f 61.5px)"></i>
<i style="left:898px;top:395px;width:59px;height:1px;background:linear-gradient(90deg,#16116a 0.5px,#0900a1 1.5px,#2900a1 57.5px,#27194f 58.5px)"></i>
<i style="left:899px;top:396px;width:57px;height:1px;background:linear-gradient(90deg,#1c194f 0.5px,#0a00a1 1.5px,#2800a1 55.5px,#27194f 56.5px)"></i>
<i style="left:900px;top:397px;width:55px;height:1px;background:linear-gradient(90deg,#1d194f 0.5px,#0a00a1 1.5px,#0d00a1 7.5px,#2700a1 53.5px,#27194f 54.5px)"></i>
<i style="left:901px;top:398px;width:53px;height:1px;background:linear-gradient(90deg,#201e41 0.5px,#0d0493 1.5px,#0b00a1 2.5px,#2600a1 51.5px,#26194f 52.5px)"></i>
<i style="left:902px;top:399px;width:51px;height:1px;background:linear-gradient(90deg,#232234 0.5px,#110885 1.5px,#0b00a1 2.5px,#2600a1 49.5px,#26194f 50.5px)"></i>
<i style="left:904px;top:400px;width:48px;height:1px;background:linear-gradient(90deg,#140d78 0.5px,#0c00a1 1.5px,#2500a1 46.5px,#26194f 47.5px)"></i>
<i style="left:905px;top:401px;width:46px;height:1px;background:linear-gradient(90deg,#1d194f 0.5px,#0c00a1 1.5px,#0f00a1 7.5px,#2400a1 44.5px,#25194f 45.5px)"></i>
<i style="left:906px;top:402px;width:44px;height:1px;background:linear-gradient(90deg,#201e41 0.5px,#0f0493 1.5px,#0d00a1 2.5px,#2300a1 42.5px,#25116a 43.5px)"></i>
<i style="left:907px;top:403px;width:42px;height:1px;background:linear-gradient(90deg,#232234 0.5px,#100493 1.5px,#0d00a1 2.5px,#2200a1 40.5px,#240d78 41.5px)"></i>
<i style="left:908px;top:404px;width:40px;height:1px;background:linear-gradient(90deg,#232234 0.5px,#100493 1.5px,#0e00a1 2.5px,#2200a1 38.5px,#230d78 39.5px)"></i>
<i style="left:910px;top:405px;width:37px;height:1px;background:linear-gradient(90deg,#160d78 0.5px,#0e00a1 1.5px,#0f00a1 2.5px,#2100a1 35.5px,#230d78 36.5px)"></i>
<i style="left:911px;top:406px;width:35px;height:1px;background:linear-gradient(90deg,#1e194f 0.5px,#0e00a1 1.5px,#2000a1 33.5px,#220d78 34.5px)"></i>
<i style="left:912px;top:407px;width:33px;height:1px;background:linear-gradient(90deg,#232234 0.5px,#110493 1.5px,#0f00a1 2.5px,#1f00a1 31.5px,#220d78 32.5px)"></i>
<i style="left:913px;top:408px;width:31px;height:1px;background:linear-gradient(90deg,#232234 0.5px,#120493 1.5px,#1000a1 2.5px,#1e00a1 29.5px,#210d78 30.5px)"></i>
<i style="left:914px;top:409px;width:29px;height:1px;background:linear-gradient(90deg,#232234 0.5px,#120493 1.5px,#1000a1 2.5px,#1e00a1 27.5px,#210d78 28.5px)"></i>
<i style="left:916px;top:410px;width:26px;height:1px;background:linear-gradient(90deg,#1a116a 0.5px,#1000a1 1.5px,#1d00a1 24.5px,#200d78 25.5px)"></i>
<i style="left:917px;top:411px;width:24px;height:1px;background:linear-gradient(90deg,#1c155d 0.5px,#1100a1 1.5px,#1c00a1 22.5px,#200d78 23.5px)"></i>
<i style="left:918px;top:412px;width:22px;height:1px;background:linear-gradient(90deg,#1d155d 0.5px,#1100a1 1.5px,#1b00a1 20.5px,#1f0d78 21.5px)"></i>
<i style="left:919px;top:413px;width:20px;height:1px;background:linear-gradient(90deg,#242234 0.5px,#140493 1.5px,#1200a1 2.5px,#1b00a1 18.5px,#1f0d78 19.5px)"></i>
<i style="left:920px;top:414px;width:18px;height:1px;background:linear-gradient(90deg,#242234 0.5px,#190d78 1.5px,#1300a1 2.5px,#1a00a1 16.5px,#1c0493 17.5px)"></i>
<i style="left:922px;top:415px;width:16px;height:1px;background:linear-gradient(90deg,#190d78 0.5px,#1300a1 1.5px,#1900a1 13.5px,#1b0493 14.5px,#252234 15.5px)"></i>
<i style="left:923px;top:416px;width:14px;height:1px;background:linear-gradient(90deg,#1d155d 0.5px,#1300a1 1.5px,#1900a1 11.5px,#1a0493 12.5px,#252234 13.5px)"></i>
<i style="left:924px;top:417px;width:12px;height:1px;background:linear-gradient(90deg,#221e41 0.5px,#160493 1.5px,#1400a1 2.5px,#1800a1 9.5px,#1a0493 10.5px,#252234 11.5px)"></i>
<i style="left:925px;top:418px;width:10px;height:1px;background:linear-gradient(90deg,#242234 0.5px,#160493 1.5px,#1400a1 2.5px,#1700a1 7.5px,#190493 8.5px,#242234 9.5px)"></i>
<i style="left:927px;top:419px;width:7px;height:1px;background:linear-gradient(90deg,#20194f 0.5px,#1500a1 1.5px,#1600a1 4.5px,#190493 5.5px,#242234 6.5px)"></i>
<i style="left:928px;top:420px;width:5px;height:1px;background:linear-gradient(90deg,#242234 0.5px,#1b0d78 1.5px,#1b0d78 2.5px,#1d116a 3.5px,#242234 4.5px)"></i>
<i style="left:467px;top:477px;width:243px;height:2px;background:linear-gradient(90deg,#7affc8 0.5px,#b8ffc6 97.5px,#feffc3 190.5px,#ffdaa5 242.5px)"></i>
<i style="left:467px;top:479px;width:243px;height:2px;background:linear-gradient(90deg,#7bffca 0.5px,#b9ffc7 96.5px,#feffc4 188.5px,#ffd9a5 242.5px)"></i>
<i style="left:467px;top:481px;width:243px;height:2px;background:linear-gradient(90deg,#7cffcb 0.5px,#baffc9 95.5px,#feffc6 186.5px,#ffd8a6 242.5px)"></i>
<i style="left:467px;top:483px;width:243px;height:2px;background:linear-gradient(90deg,#7dffcd 0.5px,#baffca 94.5px,#feffc7 184.5px,#ffd6a6 242.5px)"></i>
<i style="left:467px;top:485px;width:243px;height:2px;background:linear-gradient(90deg,#7effce 0.5px,#bfc 93.5px,#feffc9 182.5px,#ffd5a6 242.5px)"></i>
<i style="left:467px;top:487px;width:243px;height:2px;background:linear-gradient(90deg,#7fffcf 0.5px,#bbffcd 92.5px,#feffcb 180.5px,#ffd3a6 242.5px)"></i>
<i style="left:467px;top:489px;width:243px;height:2px;background:linear-gradient(90deg,#80ffd1 0.5px,#bcffcf 91.5px,#feffcc 178.5px,#ffd2a7 242.5px)"></i>
<i style="left:467px;top:491px;width:243px;height:2px;background:linear-gradient(90deg,#81ffd2 0.5px,#bdffd0 90.5px,#ffffce 176.5px,#ffd1a7 242.5px)"></i>
<i style="left:467px;top:493px;width:243px;height:2px;background:linear-gradient(90deg,#82ffd4 0.5px,#bdffd2 89.5px,#ffffd0 174.5px,#ffcfa7 242.5px)"></i>
<i style="left:467px;top:495px;width:243px;height:2px;background:linear-gradient(90deg,#83ffd5 0.5px,#beffd3 88.5px,#ffffd1 172.5px,#ffcea7 242.5px)"></i>
<i style="left:467px;top:497px;width:243px;height:2px;background:linear-gradient(90deg,#84ffd7 0.5px,#beffd5 86.5px,#ffffd3 170.5px,#ffcda8 242.5px)"></i>
<i style="left:467px;top:499px;width:243px;height:2px;background:linear-gradient(90deg,#85ffd8 0.5px,#beffd6 85.5px,#ffffd5 168.5px,#ffcba8 242.5px)"></i>
<i style="left:467px;top:501px;width:243px;height:2px;background:linear-gradient(90deg,#86ffda 0.5px,#bfffd8 84.5px,#ffffd6 166.5px,#ffcaa8 242.5px)"></i>
<i style="left:467px;top:503px;width:243px;height:2px;background:linear-gradient(90deg,#87ffdb 0.5px,#c0ffda 83.5px,#ffffd8 164.5px,#ffc9a9 242.5px)"></i>
<i style="left:467px;top:505px;width:243px;height:2px;background:linear-gradient(90deg,#8fd 0.5px,#c0ffdb 82.5px,#ffffda 162.5px,#ffc7a9 242.5px)"></i>
<i style="left:467px;top:507px;width:243px;height:2px;background:linear-gradient(90deg,#89ffde 0.5px,#c1ffdd 81.5px,#ffffdb 160.5px,#ffc6a9 242.5px)"></i>
<i style="left:467px;top:509px;width:243px;height:2px;background:linear-gradient(90deg,#8affe0 0.5px,#c1ffdf 80.5px,#ffd 158.5px,#ffc5a9 242.5px)"></i>
<i style="left:467px;top:511px;width:243px;height:2px;background:linear-gradient(90deg,#8bffe1 0.5px,#c1ffe0 78.5px,#ffffdf 156.5px,#ffc3aa 242.5px)"></i>
<i style="left:467px;top:513px;width:243px;height:2px;background:linear-gradient(90deg,#8cffe3 0.5px,#c2ffe2 77.5px,#ffffe0 154.5px,#ffc2aa 242.5px)"></i>
<i style="left:467px;top:515px;width:243px;height:2px;background:linear-gradient(90deg,#8dffe5 0.5px,#c3ffe4 76.5px,#ffffe2 152.5px,#ffdec5 195.5px,#ffc1aa 242.5px)"></i>
<i style="left:467px;top:517px;width:243px;height:2px;background:linear-gradient(90deg,#8fffe6 0.5px,#c3ffe5 75.5px,#ffffe4 150.5px,#ffddc5 194.5px,#ffc0aa 242.5px)"></i>
<i style="left:467px;top:519px;width:243px;height:2px;background:linear-gradient(90deg,#90ffe8 0.5px,#c4ffe7 74.5px,#ffffe6 148.5px,#ffdcc6 193.5px,#ffbeab 242.5px)"></i>
<i style="left:467px;top:521px;width:243px;height:2px;background:linear-gradient(90deg,#91ffe9 0.5px,#c4ffe9 72.5px,#ffffe7 146.5px,#ffdcc7 192.5px,#ffbdab 242.5px)"></i>
<i style="left:467px;top:523px;width:243px;height:2px;background:linear-gradient(90deg,#92ffeb 0.5px,#c5ffea 71.5px,#ffffe9 144.5px,#ffdbc8 191.5px,#ffbcab 242.5px)"></i>
<i style="left:467px;top:525px;width:243px;height:2px;background:linear-gradient(90deg,#93ffed 0.5px,#c5ffec 70.5px,#ffffeb 142.5px,#ffdbca 189.5px,#ffbaab 242.5px)"></i>
<i style="left:467px;top:527px;width:243px;height:2px;background:linear-gradient(90deg,#94ffee 0.5px,#c7ffee 71.5px,#ffffed 139.5px,#ffd9ca 189.5px,#ffb9ac 242.5px)"></i>
<i style="left:467px;top:529px;width:243px;height:2px;background:linear-gradient(90deg,#95fff0 0.5px,#c8fff0 70.5px,#ffffef 137.5px,#ffd8cb 188.5px,#ffb8ac 242.5px)"></i>
<i style="left:467px;top:531px;width:243px;height:2px;background:linear-gradient(90deg,#97fff2 0.5px,#fffff1 135.5px,#ffd8cb 187.5px,#ffb7ac 242.5px)"></i>
<i style="left:467px;top:533px;width:243px;height:2px;background:linear-gradient(90deg,#98fff4 0.5px,#fffff3 133.5px,#ffd7cd 185.5px,#ffb5ac 242.5px)"></i>
<i style="left:467px;top:535px;width:243px;height:2px;background:linear-gradient(90deg,#99fff5 0.5px,#fffff5 131.5px,#ffd7ce 184.5px,#ffb4ad 242.5px)"></i>
<i style="left:467px;top:537px;width:243px;height:2px;background:linear-gradient(90deg,#9afff7 0.5px,#fffff7 129.5px,#ffd6cf 183.5px,#ffb3ad 242.5px)"></i>
<i style="left:467px;top:539px;width:243px;height:2px;background:linear-gradient(90deg,#9bfff9 0.5px,#fffff8 127.5px,#ffd5d0 182.5px,#ffb2ad 242.5px)"></i>
<i style="left:467px;top:541px;width:243px;height:2px;background:linear-gradient(90deg,#9cfffb 0.5px,#fffffa 125.5px,#ffd4d0 181.5px,#ffb1ad 242.5px)"></i>
<i style="left:467px;top:543px;width:243px;height:2px;background:linear-gradient(90deg,#9efffc 0.5px,#fffffc 123.5px,#ffd4d2 179.5px,#ffafae 242.5px)"></i>
<i style="left:467px;top:545px;width:243px;height:2px;background:linear-gradient(90deg,#9ffffe 0.5px,#fffffe 121.5px,#ffd3d3 178.5px,#ffaeae 242.5px)"></i>
<i style="left:467px;top:547px;width:243px;height:2px;background:linear-gradient(90deg,#a0feff 0.5px,#fffeff 120.5px,#ffd2d3 178.5px,#ffadae 242.5px)"></i>
<i style="left:467px;top:549px;width:243px;height:2px;background:linear-gradient(90deg,#a0fcff 0.5px,#fffbff 121.5px,#ffd0d3 178.5px,#ffacae 242.5px)"></i>
<i style="left:467px;top:551px;width:243px;height:2px;background:linear-gradient(90deg,#a0faff 0.5px,#fffaff 121.5px,#ffcfd3 178.5px,#ffabae 242.5px)"></i>
<i style="left:467px;top:553px;width:243px;height:2px;background:linear-gradient(90deg,#a0f9ff 0.5px,#fff8ff 121.5px,#ffcdd4 178.5px,#ffa9af 242.5px)"></i>
<i style="left:467px;top:555px;width:243px;height:2px;background:linear-gradient(90deg,#a0f7ff 0.5px,#fff6ff 121.5px,#ffccd4 178.5px,#ffa8af 242.5px)"></i>
<i style="left:467px;top:557px;width:243px;height:2px;background:linear-gradient(90deg,#a0f5ff 0.5px,#fff4ff 121.5px,#ffcbd4 178.5px,#ffa7af 242.5px)"></i>
<i style="left:467px;top:559px;width:243px;height:2px;background:linear-gradient(90deg,#a0f3ff 0.5px,#fff2ff 121.5px,#ffc9d4 178.5px,#ffa6af 242.5px)"></i>
<i style="left:467px;top:561px;width:243px;height:2px;background:linear-gradient(90deg,#a0f2ff 0.5px,#fff0ff 122.5px,#ffc8d4 178.5px,#ffa5b0 242.5px)"></i>
<i style="left:467px;top:563px;width:243px;height:2px;background:linear-gradient(90deg,#a0f0ff 0.5px,#fef 122.5px,#ffc6d5 178.5px,#ffa3b0 242.5px)"></i>
<i style="left:467px;top:565px;width:243px;height:2px;background:linear-gradient(90deg,#a1eeff 0.5px,#ffedff 122.5px,#ffc5d5 178.5px,#ffa2b0 242.5px)"></i>
<i style="left:467px;top:567px;width:243px;height:2px;background:linear-gradient(90deg,#a1ecff 0.5px,#ffebff 122.5px,#ffc4d5 178.5px,#ffa1b0 242.5px)"></i>
<i style="left:467px;top:569px;width:243px;height:2px;background:linear-gradient(90deg,#a1ebff 0.5px,#ffe9ff 122.5px,#ffc2d5 178.5px,#ffa0b1 242.5px)"></i>
<i style="left:467px;top:571px;width:243px;height:2px;background:linear-gradient(90deg,#a1e9ff 0.5px,#ffe7ff 122.5px,#ffc0d5 179.5px,#ff9fb1 242.5px)"></i>
<i style="left:467px;top:573px;width:243px;height:2px;background:linear-gradient(90deg,#a1e7ff 0.5px,#ffe5ff 122.5px,#ffbfd5 179.5px,#ff9eb1 242.5px)"></i>
<i style="left:467px;top:575px;width:243px;height:2px;background:linear-gradient(90deg,#a1e6ff 0.5px,#ffe3ff 123.5px,#ffbdd5 179.5px,#ff9db1 242.5px)"></i>
<i style="left:467px;top:577px;width:243px;height:2px;background:linear-gradient(90deg,#a1e4ff 0.5px,#ffe2ff 123.5px,#ffbcd5 179.5px,#ff9cb2 242.5px)"></i>
<i style="left:467px;top:579px;width:243px;height:2px;background:linear-gradient(90deg,#a1e2ff 0.5px,#ffe0ff 123.5px,#ffbbd6 179.5px,#ff9ab2 242.5px)"></i>
<i style="left:467px;top:581px;width:243px;height:2px;background:linear-gradient(90deg,#a1e1ff 0.5px,#ffdeff 123.5px,#ffb9d6 179.5px,#ff99b2 242.5px)"></i>
<i style="left:467px;top:583px;width:243px;height:2px;background:linear-gradient(90deg,#a1dfff 0.5px,#fdf 123.5px,#ffb8d6 179.5px,#ff98b2 242.5px)"></i>
<i style="left:467px;top:585px;width:243px;height:2px;background:linear-gradient(90deg,#a2ddff 0.5px,#ffdbff 123.5px,#ffb6d6 180.5px,#ff97b2 242.5px)"></i>
<i style="left:467px;top:587px;width:243px;height:2px;background:linear-gradient(90deg,#a2dcff 0.5px,#ffd9ff 124.5px,#ffb5d6 179.5px,#ff96b3 242.5px)"></i>
<i style="left:467px;top:589px;width:243px;height:2px;background:linear-gradient(90deg,#a2daff 0.5px,#ffd7ff 124.5px,#ffb4d7 179.5px,#ff95b3 242.5px)"></i>
<i style="left:467px;top:591px;width:243px;height:2px;background:linear-gradient(90deg,#a2d9ff 0.5px,#ffd6ff 124.5px,#ffb3d7 179.5px,#ff94b3 242.5px)"></i>
<i style="left:467px;top:593px;width:243px;height:2px;background:linear-gradient(90deg,#a2d7ff 0.5px,#ffd4ff 124.5px,#ffb1d6 180.5px,#ff93b3 242.5px)"></i>
<i style="left:467px;top:595px;width:243px;height:2px;background:linear-gradient(90deg,#a2d6ff 0.5px,#ffd2ff 124.5px,#ffb0d6 180.5px,#ff92b4 242.5px)"></i>
<i style="left:467px;top:597px;width:243px;height:2px;background:linear-gradient(90deg,#a2d4ff 0.5px,#ffd1ff 124.5px,#ffaed7 180.5px,#ff91b4 242.5px)"></i>
<i style="left:467px;top:599px;width:243px;height:2px;background:linear-gradient(90deg,#a2d2ff 0.5px,#ffcfff 125.5px,#ffadd7 180.5px,#ff8fb4 242.5px)"></i>
<i style="left:467px;top:601px;width:243px;height:2px;background:linear-gradient(90deg,#a2d1ff 0.5px,#ffcdff 125.5px,#ffacd7 180.5px,#ff8eb4 242.5px)"></i>
<i style="left:467px;top:603px;width:243px;height:2px;background:linear-gradient(90deg,#a2cfff 0.5px,#fcf 125.5px,#ffaad7 180.5px,#ff8db4 242.5px)"></i>
<i style="left:467px;top:605px;width:243px;height:2px;background:linear-gradient(90deg,#a3ceff 0.5px,#ffcaff 125.5px,#ffa9d7 180.5px,#ff8cb5 242.5px)"></i>
<i style="left:467px;top:607px;width:243px;height:2px;background:linear-gradient(90deg,#a3ccff 0.5px,#ffc8ff 125.5px,#ffa8d8 180.5px,#ff8bb5 242.5px)"></i>
<i style="left:467px;top:609px;width:243px;height:2px;background:linear-gradient(90deg,#a3cbff 0.5px,#ffc7ff 125.5px,#ffa6d7 181.5px,#ff8ab5 242.5px)"></i>
<i style="left:467px;top:611px;width:243px;height:2px;background:linear-gradient(90deg,#a3c9ff 0.5px,#ffc5ff 126.5px,#ffa5d7 181.5px,#ff89b5 242.5px)"></i>
<i style="left:467px;top:613px;width:243px;height:2px;background:linear-gradient(90deg,#a3c8ff 0.5px,#ffc3ff 126.5px,#ffa4d8 181.5px,#ff88b6 242.5px)"></i>
<i style="left:467px;top:615px;width:243px;height:2px;background:linear-gradient(90deg,#a3c6ff 0.5px,#ffc2ff 126.5px,#ffa2d8 181.5px,#ff87b6 242.5px)"></i>
<i style="left:467px;top:617px;width:243px;height:1px;background:linear-gradient(90deg,#a3c5ff 0.5px,#ffc1ff 126.5px,#ffa1d8 181.5px,#ff86b6 242.5px)"></i>
</div>
<svg width="1200" height="637" viewBox="0 0 1200 637">
<path d="M738.2 80.6H1192.2V430.5H738.2Z" fill="none" stroke="#a8a8a8" stroke-width="1.3"/>
<line x1="738.2" y1="430.5" x2="738.2" y2="434.5" stroke="#a8a8a8" stroke-width="1.3"/>
<text x="737.8" y="445.4" font-size="10.4" fill="#e0e0e0" stroke="#e0e0e0" stroke-width="0.25" text-anchor="middle">0</text>
<line x1="776.05" y1="430.5" x2="776.05" y2="434.5" stroke="#a8a8a8" stroke-width="1.3"/>
<text x="775.65" y="445.4" font-size="10.4" fill="#e0e0e0" stroke="#e0e0e0" stroke-width="0.25" text-anchor="middle">0,05</text>
<line x1="813.9" y1="430.5" x2="813.9" y2="434.5" stroke="#a8a8a8" stroke-width="1.3"/>
<text x="813.5" y="445.4" font-size="10.4" fill="#e0e0e0" stroke="#e0e0e0" stroke-width="0.25" text-anchor="middle">0,1</text>
<line x1="851.75" y1="430.5" x2="851.75" y2="434.5" stroke="#a8a8a8" stroke-width="1.3"/>
<text x="851.35" y="445.4" font-size="10.4" fill="#e0e0e0" stroke="#e0e0e0" stroke-width="0.25" text-anchor="middle">0,15</text>
<line x1="889.6" y1="430.5" x2="889.6" y2="434.5" stroke="#a8a8a8" stroke-width="1.3"/>
<text x="889.2" y="445.4" font-size="10.4" fill="#e0e0e0" stroke="#e0e0e0" stroke-width="0.25" text-anchor="middle">0,2</text>
<line x1="927.45" y1="430.5" x2="927.45" y2="434.5" stroke="#a8a8a8" stroke-width="1.3"/>
<text x="927.05" y="445.4" font-size="10.4" fill="#e0e0e0" stroke="#e0e0e0" stroke-width="0.25" text-anchor="middle">0,25</text>
<line x1="965.3" y1="430.5" x2="965.3" y2="434.5" stroke="#a8a8a8" stroke-width="1.3"/>
<text x="964.9" y="445.4" font-size="10.4" fill="#e0e0e0" stroke="#e0e0e0" stroke-width="0.25" text-anchor="middle">0,3</text>
<line x1="1003.15" y1="430.5" x2="1003.15" y2="434.5" stroke="#a8a8a8" stroke-width="1.3"/>
<text x="1002.75" y="445.4" font-size="10.4" fill="#e0e0e0" stroke="#e0e0e0" stroke-width="0.25" text-anchor="middle">0,35</text>
<line x1="1041" y1="430.5" x2="1041" y2="434.5" stroke="#a8a8a8" stroke-width="1.3"/>
<text x="1040.6" y="445.4" font-size="10.4" fill="#e0e0e0" stroke="#e0e0e0" stroke-width="0.25" text-anchor="middle">0,4</text>
<line x1="1078.85" y1="430.5" x2="1078.85" y2="434.5" stroke="#a8a8a8" stroke-width="1.3"/>
<text x="1078.45" y="445.4" font-size="10.4" fill="#e0e0e0" stroke="#e0e0e0" stroke-width="0.25" text-anchor="middle">0,45</text>
<line x1="1116.7" y1="430.5" x2="1116.7" y2="434.5" stroke="#a8a8a8" stroke-width="1.3"/>
<text x="1116.3" y="445.4" font-size="10.4" fill="#e0e0e0" stroke="#e0e0e0" stroke-width="0.25" text-anchor="middle">0,5</text>
<line x1="1154.55" y1="430.5" x2="1154.55" y2="434.5" stroke="#a8a8a8" stroke-width="1.3"/>
<text x="1154.15" y="445.4" font-size="10.4" fill="#e0e0e0" stroke="#e0e0e0" stroke-width="0.25" text-anchor="middle">0,55</text>
<line x1="734.2" y1="430.5" x2="738.2" y2="430.5" stroke="#a8a8a8" stroke-width="1.3"/>
<text x="733.5" y="435.9" font-size="10.4" fill="#e0e0e0" stroke="#e0e0e0" stroke-width="0.25" text-anchor="end">0</text>
<line x1="734.2" y1="401.43" x2="738.2" y2="401.43" stroke="#a8a8a8" stroke-width="1.3"/>
<text x="733.5" y="406.72" font-size="10.4" fill="#e0e0e0" stroke="#e0e0e0" stroke-width="0.25" text-anchor="end">0,05</text>
<line x1="734.2" y1="372.36" x2="738.2" y2="372.36" stroke="#a8a8a8" stroke-width="1.3"/>
<text x="733.5" y="377.54" font-size="10.4" fill="#e0e0e0" stroke="#e0e0e0" stroke-width="0.25" text-anchor="end">0,1</text>
<line x1="734.2" y1="343.29" x2="738.2" y2="343.29" stroke="#a8a8a8" stroke-width="1.3"/>
<text x="733.5" y="348.36" font-size="10.4" fill="#e0e0e0" stroke="#e0e0e0" stroke-width="0.25" text-anchor="end">0,15</text>
<line x1="734.2" y1="314.22" x2="738.2" y2="314.22" stroke="#a8a8a8" stroke-width="1.3"/>
<text x="733.5" y="319.18" font-size="10.4" fill="#e0e0e0" stroke="#e0e0e0" stroke-width="0.25" text-anchor="end">0,2</text>
<line x1="734.2" y1="285.15" x2="738.2" y2="285.15" stroke="#a8a8a8" stroke-width="1.3"/>
<text x="733.5" y="290" font-size="10.4" fill="#e0e0e0" stroke="#e0e0e0" stroke-width="0.25" text-anchor="end">0,25</text>
<line x1="734.2" y1="256.08" x2="738.2" y2="256.08" stroke="#a8a8a8" stroke-width="1.3"/>
<text x="733.5" y="260.82" font-size="10.4" fill="#e0e0e0" stroke="#e0e0e0" stroke-width="0.25" text-anchor="end">0,3</text>
<line x1="734.2" y1="227.01" x2="738.2" y2="227.01" stroke="#a8a8a8" stroke-width="1.3"/>
<text x="733.5" y="231.64" font-size="10.4" fill="#e0e0e0" stroke="#e0e0e0" stroke-width="0.25" text-anchor="end">0,35</text>
<line x1="734.2" y1="197.94" x2="738.2" y2="197.94" stroke="#a8a8a8" stroke-width="1.3"/>
<text x="733.5" y="202.46" font-size="10.4" fill="#e0e0e0" stroke="#e0e0e0" stroke-width="0.25" text-anchor="end">0,4</text>
<line x1="734.2" y1="168.87" x2="738.2" y2="168.87" stroke="#a8a8a8" stroke-width="1.3"/>
<text x="733.5" y="173.28" font-size="10.4" fill="#e0e0e0" stroke="#e0e0e0" stroke-width="0.25" text-anchor="end">0,45</text>
<line x1="734.2" y1="139.8" x2="738.2" y2="139.8" stroke="#a8a8a8" stroke-width="1.3"/>
<text x="733.5" y="144.1" font-size="10.4" fill="#e0e0e0" stroke="#e0e0e0" stroke-width="0.25" text-anchor="end">0,5</text>
<line x1="734.2" y1="110.73" x2="738.2" y2="110.73" stroke="#a8a8a8" stroke-width="1.3"/>
<text x="733.5" y="114.92" font-size="10.4" fill="#e0e0e0" stroke="#e0e0e0" stroke-width="0.25" text-anchor="end">0,55</text>
<text x="1060" y="100" font-size="12.2" fill="#f2f2f2" stroke="#f2f2f2" stroke-width="0.25" textLength="81.2" lengthAdjust="spacingAndGlyphs">Gamut coverage:</text>
<rect x="1147.5" y="84.5" width="41.7" height="17.6" fill="url(#dd)"/>
<text x="1150.7" y="99.5" font-size="12.2" fill="#f2f2f2" stroke="#f2f2f2" stroke-width="0.2" textLength="17.3" lengthAdjust="spacingAndGlyphs">u'v'</text>
<path d="M1178.6 91.8h7.2l-3.6 4z" fill="#111"/>
<rect x="1010.2" y="407.5" width="180.2" height="20.4" fill="#343434"/>
<text x="1011.8" y="423" font-size="15.2" fill="#f4f4f4" stroke="#f4f4f4" stroke-width="0.3" textLength="110.1" lengthAdjust="spacingAndGlyphs">Gamut Coverage:</text>
<text x="1130.4" y="423" font-size="15.2" fill="#f4f4f4" stroke="#f4f4f4" stroke-width="0.3" textLength="34.6" lengthAdjust="spacingAndGlyphs">100%</text>
<rect x="1073.7" y="120.21" width="10" height="10" fill="none" stroke="#f2f2f2" stroke-width="1.3"/>
<rect x="827.28" y="97.14" width="10" height="10" fill="none" stroke="#f2f2f2" stroke-width="1.3"/>
<rect x="865.41" y="332.82" width="10" height="10" fill="none" stroke="#f2f2f2" stroke-width="1.3"/>
<rect x="837.5" y="159.4" width="10" height="10" fill="none" stroke="#f2f2f2" stroke-width="1.3"/>
<rect x="963.3" y="232.2" width="10" height="10" fill="none" stroke="#f2f2f2" stroke-width="1.3"/>
<rect x="887" y="102.5" width="10" height="10" fill="none" stroke="#f2f2f2" stroke-width="1.3"/>
<rect x="882.5" y="151.9" width="10" height="10" fill="none" stroke="#111" stroke-width="1.6"/>
<circle cx="1131.5" cy="127.1" r="2.8" fill="#d00000" stroke="#151515" stroke-width="1"/>
<circle cx="810.6" cy="92.1" r="2.8" fill="#22be22" stroke="#151515" stroke-width="1"/>
<circle cx="868" cy="339.8" r="2.8" fill="#0000c0" stroke="#151515" stroke-width="1"/>
<circle cx="827.1" cy="162.7" r="2.8" fill="#10b4b4" stroke="#151515" stroke-width="1"/>
<circle cx="994.1" cy="237.2" r="2.8" fill="#c000c0" stroke="#151515" stroke-width="1"/>
<circle cx="898" cy="101.8" r="2.8" fill="#c4c400" stroke="#151515" stroke-width="1"/>
<circle cx="891.1" cy="156.1" r="2.8" fill="#f8f8f8" stroke="#151515" stroke-width="1"/>
<rect x="582.6" y="541.9" width="10.2" height="9.6" fill="none" stroke="#111" stroke-width="1.7"/>
<circle cx="627.6" cy="541.9" r="3.1" fill="#f8f8f8" fill-opacity=".6" stroke="#111" stroke-width="1.1"/>
</svg>
</body></html>
